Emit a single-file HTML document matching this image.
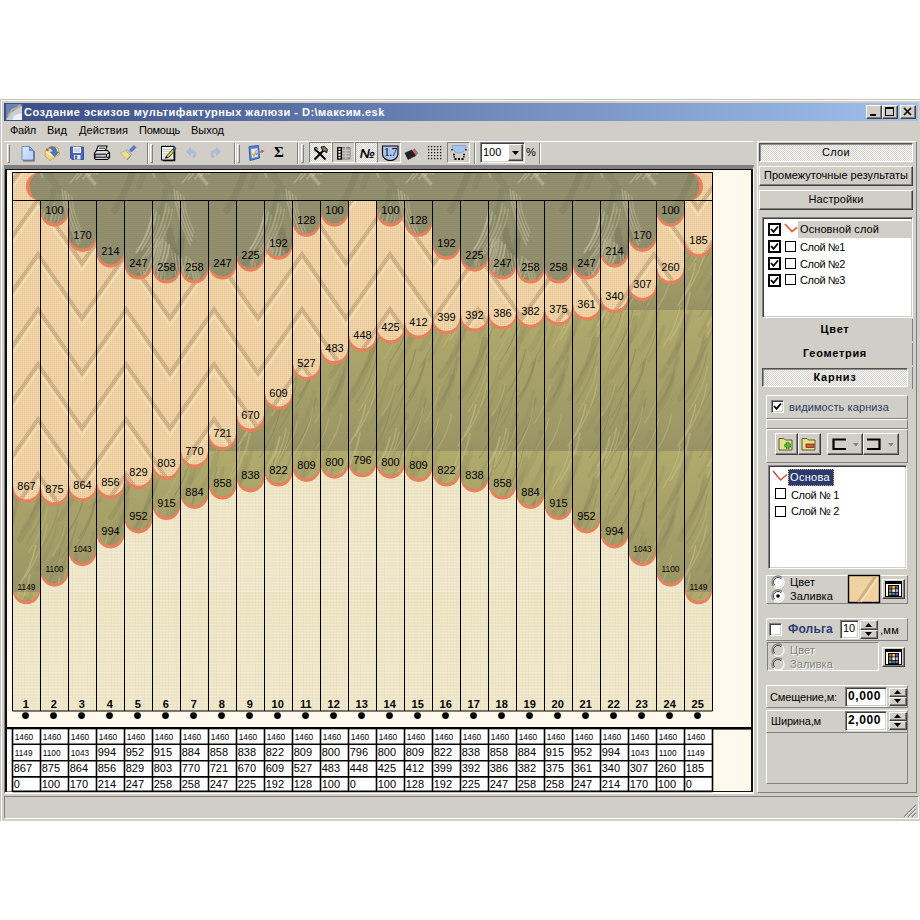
<!DOCTYPE html><html><head><meta charset="utf-8"><title>ui</title><style>
html,body{margin:0;padding:0;background:#fff;}
body{width:920px;height:920px;position:relative;overflow:hidden;font-family:"Liberation Sans",sans-serif;font-size:11px;color:#000;}
div{position:absolute;box-sizing:border-box;white-space:nowrap;}
svg{position:absolute;overflow:visible;}
.t{line-height:13px;height:13px;}
.raised{background:#d1cec7;border:1px solid;border-color:#fff #404040 #404040 #fff;box-shadow:inset -1px -1px 0 #808080;}
.raised1{background:#d1cec7;border:1px solid;border-color:#fff #808080 #808080 #fff;}
.sunk1{border:1px solid;border-color:#808080 #fff #fff #808080;}
.sunk2{border:1px solid;border-color:#808080 #fff #fff #808080;box-shadow:inset 1px 1px 0 #404040, inset -1px -1px 0 #d1cec7;}
.dith{background-color:#d1cec7;background-image:linear-gradient(45deg,#fff 25%,transparent 25%,transparent 75%,#fff 75%),linear-gradient(45deg,#fff 25%,transparent 25%,transparent 75%,#fff 75%);background-size:2px 2px;background-position:0 0,1px 1px;}
.pressed{border:1px solid;border-color:#808080 #fff #fff #808080;}
.pressed2{border:1px solid;border-color:#505050 #fff #fff #505050;box-shadow:inset 1px 1px 0 #909090;}
.c{text-align:center;}
.b{font-weight:bold;}
</style></head><body><div style="left:0px;top:99px;width:930px;height:722px;background:#d1cec7;border:solid #c6c3bb;border-width:1px 0 0 1px;box-shadow:inset 1px 1px 0 #fff;"></div>
<div style="left:4px;top:103px;width:914px;height:18px;background:linear-gradient(90deg,#3a4d85 0%,#a0c0ec 100%);"></div>
<svg style="left:6px;top:104px" width="16" height="16" viewBox="0 0 16 16"><rect width="16" height="16" fill="#6f83b3"/><path d="M0 16 L4 9 L8 7 L12 3 L16 2 L16 16 Z" fill="#c9cdd6"/><path d="M2 12 L6 6 L11 4 L14 1" stroke="#b8ad8a" stroke-width="2" fill="none"/><path d="M6 16 L9 11 L16 9 L16 16Z" fill="#eef0f4"/></svg>
<div style="left:24px;top:105px;width:400px;height:14px;color:#fff;font-weight:bold;font-size:11px;line-height:14px;letter-spacing:0px;"><span style="letter-spacing:0.48px">Создание эскизов мультифактурных жалюзи - D:\максим.esk</span></div>
<div class="raised" style="left:866px;top:105px;width:16px;height:14px;"><svg style="left:0;top:0" width="14" height="12"><rect x="3" y="8" width="6" height="2" fill="#000"/></svg></div>
<div class="raised" style="left:882px;top:105px;width:16px;height:14px;"><svg style="left:0;top:0" width="14" height="12"><rect x="2.5" y="1.5" width="8" height="8" fill="none" stroke="#000"/><rect x="2" y="1" width="9" height="2" fill="#000"/></svg></div>
<div class="raised" style="left:900px;top:105px;width:16px;height:14px;"><svg style="left:0;top:0" width="14" height="12"><path d="M3 2 L10 9 M10 2 L3 9" stroke="#000" stroke-width="1.6"/></svg></div>
<div style="left:10px;top:123px;width:36px;height:14px;line-height:14px;"><span style="letter-spacing:-0.26px">Файл</span></div>
<div style="left:47px;top:123px;width:30px;height:14px;line-height:14px;"><span style="letter-spacing:0.03px">Вид</span></div>
<div style="left:79px;top:123px;width:59px;height:14px;line-height:14px;"><span style="letter-spacing:0.10px">Действия</span></div>
<div style="left:139px;top:123px;width:51px;height:14px;line-height:14px;"><span style="letter-spacing:-0.25px">Помощь</span></div>
<div style="left:191px;top:123px;width:43px;height:14px;line-height:14px;"><span style="letter-spacing:0.02px">Выход</span></div>
<div style="left:4px;top:141px;width:750px;height:25px;border-top:1px solid #fff;border-bottom:1px solid #808080;"></div>
<div style="left:7px;top:144px;width:3px;height:19px;border:1px solid;border-color:#fff #808080 #808080 #fff;"></div>
<div style="left:147px;top:143px;width:2px;height:21px;border-left:1px solid #808080;border-right:1px solid #fff;"></div>
<div style="left:150px;top:144px;width:3px;height:19px;border:1px solid;border-color:#fff #808080 #808080 #fff;"></div>
<div style="left:234px;top:143px;width:2px;height:21px;border-left:1px solid #808080;border-right:1px solid #fff;"></div>
<div style="left:237px;top:144px;width:3px;height:19px;border:1px solid;border-color:#fff #808080 #808080 #fff;"></div>
<div style="left:297px;top:143px;width:2px;height:21px;border-left:1px solid #808080;border-right:1px solid #fff;"></div>
<div style="left:301px;top:144px;width:3px;height:19px;border:1px solid;border-color:#fff #808080 #808080 #fff;"></div>
<div style="left:474px;top:143px;width:2px;height:21px;border-left:1px solid #808080;border-right:1px solid #fff;"></div>
<div style="left:539px;top:143px;width:2px;height:21px;border-left:1px solid #808080;border-right:1px solid #fff;"></div>
<svg style="left:21px;top:145px" width="14" height="17" viewBox="0 0 14 17"><defs><linearGradient id="gnew" x1="0" y1="0" x2="1" y2="1"><stop offset="0" stop-color="#dfeaff"/><stop offset="1" stop-color="#b4cbf2"/></linearGradient></defs>
<path d="M1 1.5 H8.5 L12.5 5.5 V15 H1 Z" fill="url(#gnew)" stroke="#6f8ed2" stroke-width="1"/>
<path d="M8.5 1.5 V5.5 H12.5 Z" fill="#7f9fe0" stroke="#5a78c0" stroke-width=".8"/>
<path d="M13.2 6 V15.8 H2" fill="none" stroke="#50566a" stroke-width="1.2" opacity=".8"/></svg>
<svg style="left:43px;top:144px" width="18" height="18" viewBox="0 0 18 18"><path d="M2 7 L8 2 L15 4 L16.5 10 L7 16.5 L2 12 Z" fill="#ead68c" stroke="#c8a848" stroke-width="1"/>
<path d="M3 8 L8.5 11 L15 5" fill="none" stroke="#f6ecc0" stroke-width="1.5"/>
<path d="M6 4 C10 1.5 14 3.5 13.5 8 L15.5 8 L11.5 12.5 L7.5 8 L10 8 C10 6 8.5 4.5 6 4 Z" fill="#4878cc" stroke="#2f58a8" stroke-width=".6"/>
<rect x="3.2" y="4.6" width="2.4" height="2.2" fill="#e04030"/></svg>
<svg style="left:70px;top:146px" width="15" height="15" viewBox="0 0 15 15"><path d="M.5 1 H13.5 V13.5 H2 L.5 12 Z" fill="#4a66b6" stroke="#3a4f9a" stroke-width="1"/>
<rect x="3" y="1" width="8" height="6" fill="#f2f4fa"/><path d="M4 3 H10 M4 5 H10" stroke="#9aa4c0" stroke-width=".8"/>
<rect x="4" y="9" width="6.5" height="4.5" fill="#e8ecf6"/><rect x="5" y="9.5" width="2.2" height="3.5" fill="#4a66b6"/></svg>
<svg style="left:93px;top:145px" width="18" height="16" viewBox="0 0 18 16"><path d="M5 1 H14 L12.5 5.5 H3.5 Z" fill="#fff" stroke="#000" stroke-width="1.1"/>
<path d="M6 3.2 H12" stroke="#000" stroke-width=".9"/>
<path d="M1.5 8 L3.5 5.5 H14.5 L16.5 8 V12.5 L14.5 14.5 H2.5 L1.5 13 Z" fill="#d8dae0" stroke="#000" stroke-width="1.2"/>
<path d="M2 9.2 H13.5 V12.2 H2 Z" fill="#b8c4e0" stroke="#000" stroke-width="1"/>
<rect x="8" y="10" width="3" height="1.3" fill="#f0e020"/>
<path d="M14 9 L16.5 8 M14 12.5 L16 12" stroke="#000" stroke-width="1"/></svg>
<svg style="left:119px;top:144px" width="18" height="17" viewBox="0 0 18 17"><path d="M10.5 6 L15 1.5 L17 3.5 L12.5 8 Z" fill="#5a7cc8" stroke="#3e5aa8" stroke-width=".6"/>
<path d="M8 5.5 L12.8 10.3 L11.3 11.8 L6.5 7 Z" fill="#c8ccd8" stroke="#7a8098" stroke-width=".6"/>
<path d="M6.5 6.5 L11.8 11.8 L8 15.5 C6 14 3.5 11 1.5 9 Z" fill="#ebe09a" stroke="#b8a860" stroke-width=".7"/>
<path d="M8 15.5 L11.8 11.8" stroke="#8a7840" stroke-width="1"/></svg>
<svg style="left:160px;top:144px" width="17" height="18" viewBox="0 0 17 18"><rect x="1.5" y="2.5" width="12.5" height="13.5" fill="#fff" stroke="#000" stroke-width="1"/>
<path d="M14.6 4 V16.6 H3" stroke="#000" stroke-width="1.4" fill="none"/>
<path d="M3 5.5 H12.5 M3 7.7 H12.5 M3 9.9 H12.5 M3 12.1 H12.5 M3 14.2 H12.5" stroke="#a8acb8" stroke-width=".8"/>
<path d="M3 1.5 V3 M5.5 1.5 V3 M8 1.5 V3 M10.5 1.5 V3 M13 1.5 V3" stroke="#000" stroke-width="1"/>
<path d="M5.5 14 L7 11.5 L12.5 5.5 L14.5 7 L9 13 Z" fill="#f0e030" stroke="#000" stroke-width=".8"/>
<path d="M12.5 5.5 L14 2.5 L16 4 L14.5 7 Z" fill="#3e5cb0" stroke="#223a80" stroke-width=".6"/>
<path d="M5 14.5 L6.6 12.2 L7.6 13.2 Z" fill="#000"/></svg>
<svg style="left:185px;top:146px" width="14" height="14" viewBox="0 0 14 14"><path d="M1.5 5.5 L5.5 1.5 V4 C10.5 3.5 12.5 7 9.5 12 L7.8 11 C9.8 8 9 6.5 5.5 7 V9.5 Z" fill="#a9bbe0" stroke="#9db0da" stroke-width=".6" opacity=".9"/></svg>
<svg style="left:208px;top:146px" width="14" height="14" viewBox="0 0 14 14"><path d="M12.5 5.5 L8.5 1.5 V4 C3.5 3.5 1.5 7 4.5 12 L6.2 11 C4.2 8 5 6.5 8.5 7 V9.5 Z" fill="#a9bbe0" stroke="#9db0da" stroke-width=".6" opacity=".9"/></svg>
<svg style="left:247px;top:144px" width="19" height="18" viewBox="0 0 19 18"><path d="M2 2.5 L11.5 1.5 L12.5 14 L3 16.5 Z" fill="#5a82d4" stroke="#3a5cb0" stroke-width="1"/>
<path d="M4 5 L10.5 4.2 L11 12.5 L4.8 14 Z" fill="#dfe9fa"/>
<path d="M5.5 9.5 L7 12 L9.5 6" stroke="#d8a820" stroke-width="1.4" fill="none"/>
<path d="M9 10.5 L15 7.2" stroke="#6a90dc" stroke-width="1.8"/>
<path d="M14 5.5 L17.5 7 L14.8 9 Z" fill="#e05828"/></svg>
<div style="left:271px;top:143px;width:16px;height:18px;font-family:'Liberation Serif',serif;font-weight:bold;font-size:15px;line-height:18px;text-align:center;">Σ</div>
<div class="pressed dith" style="left:309px;top:142px;width:23px;height:21px;"></div>
<div class="pressed" style="left:332px;top:142px;width:23px;height:21px;"></div>
<div class="pressed dith" style="left:355px;top:142px;width:23px;height:21px;"></div>
<div class="pressed" style="left:377px;top:142px;width:24px;height:21px;"></div>
<div class="pressed" style="left:447px;top:142px;width:23px;height:21px;"></div>
<svg style="left:312px;top:145px" width="17" height="16" viewBox="0 0 17 16"><path d="M2.5 14.5 L12 5" stroke="#000" stroke-width="2"/>
<path d="M9 2 L12.5 1.5 L15.5 4.5 L14.5 8 L13 6 L11 6.5 Z" fill="#8a7850" stroke="#000" stroke-width=".9"/>
<path d="M13.5 14.5 L5 6" stroke="#000" stroke-width="2"/>
<path d="M2 3.5 C2 6 4 7.5 6 6.5 L5 5 L6 3.5 L4.5 2 C3.5 2 2 2.5 2 3.5 Z" fill="#000"/>
<path d="M3.6 3.2 L5 4.6" stroke="#d1cec7" stroke-width="1.1"/></svg>
<svg style="left:337px;top:147px" width="14" height="13" viewBox="0 0 14 13"><rect x=".5" y=".5" width="12.5" height="11.5" fill="#a0a0a0" stroke="#808080"/>
<path d="M4.5 0 V12 M8.7 0 V12 M0 3.4 H13 M0 6.3 H13 M0 9.2 H13" stroke="#d1cec7" stroke-width="1"/>
<rect x=".7" y=".7" width="3.6" height="11.3" fill="#fff" stroke="#000" stroke-width="1.3"/>
<path d="M.7 3.4 H4.3 M.7 6.3 H4.3 M.7 9.2 H4.3" stroke="#000" stroke-width="1.1"/></svg>
<div style="left:356px;top:146px;width:22px;height:15px;font-weight:bold;font-style:italic;font-size:13px;line-height:15px;text-align:center;letter-spacing:-0.5px;">№</div>
<svg style="left:381px;top:145px" width="19" height="17" viewBox="0 0 19 17"><path d="M1.5 1 H17 V9 C17 13 13 15.5 9.2 15.5 C5.5 15.5 1.5 13 1.5 9 Z" fill="#a9c6f2" stroke="#000" stroke-width="1.1"/>
<text x="9.3" y="11" font-family="Liberation Serif,serif" font-size="11.5" text-anchor="middle" fill="#000" letter-spacing="-0.6">1.7</text></svg>
<svg style="left:404px;top:145px" width="15" height="16" viewBox="0 0 15 16"><path d="M2 3 L7 8 M4 1.5 L8 6" stroke="#b8c8e8" stroke-width="1.3"/>
<path d="M1 8 L8 5 L12 10.5 L4 14.5 Z" fill="#22222e" stroke="#101018" stroke-width=".6"/>
<path d="M8 5 L12 10.5 L13.5 9 L9.5 4 Z" fill="#e06838"/><path d="M9.5 4 L13.5 9 L14.3 8.2 L10.5 3.4Z" fill="#7a5ac0"/>
<path d="M12.5 11 L14 14" stroke="#c8d4ec" stroke-width="1.2"/></svg>
<svg style="left:428px;top:146px" width="14" height="14" viewBox="0 0 14 14"><rect x="0" y="0" width="1.2" height="1.2" fill="#000"/><rect x="0" y="3" width="1.2" height="1.2" fill="#000"/><rect x="0" y="6" width="1.2" height="1.2" fill="#000"/><rect x="0" y="9" width="1.2" height="1.2" fill="#000"/><rect x="0" y="12" width="1.2" height="1.2" fill="#000"/><rect x="3" y="0" width="1.2" height="1.2" fill="#000"/><rect x="3" y="3" width="1.2" height="1.2" fill="#000"/><rect x="3" y="6" width="1.2" height="1.2" fill="#000"/><rect x="3" y="9" width="1.2" height="1.2" fill="#000"/><rect x="3" y="12" width="1.2" height="1.2" fill="#000"/><rect x="6" y="0" width="1.2" height="1.2" fill="#000"/><rect x="6" y="3" width="1.2" height="1.2" fill="#000"/><rect x="6" y="6" width="1.2" height="1.2" fill="#000"/><rect x="6" y="9" width="1.2" height="1.2" fill="#000"/><rect x="6" y="12" width="1.2" height="1.2" fill="#000"/><rect x="9" y="0" width="1.2" height="1.2" fill="#000"/><rect x="9" y="3" width="1.2" height="1.2" fill="#000"/><rect x="9" y="6" width="1.2" height="1.2" fill="#000"/><rect x="9" y="9" width="1.2" height="1.2" fill="#000"/><rect x="9" y="12" width="1.2" height="1.2" fill="#000"/><rect x="12" y="0" width="1.2" height="1.2" fill="#000"/><rect x="12" y="3" width="1.2" height="1.2" fill="#000"/><rect x="12" y="6" width="1.2" height="1.2" fill="#000"/><rect x="12" y="9" width="1.2" height="1.2" fill="#000"/><rect x="12" y="12" width="1.2" height="1.2" fill="#000"/></svg>
<svg style="left:450px;top:145px" width="18" height="16" viewBox="0 0 18 16"><path d="M2 .5 H16 C16 5 13 8 9 8 C5 8 2 5 2 .5 Z" fill="#a6c4f0" stroke="#6f90d0" stroke-width=".6"/>
<path d="M2 4 V7 M16 4 V7" stroke="#000" stroke-width="1.3" stroke-dasharray="1.5 1.5"/>
<path d="M3 9.5 H5 M13 9.5 H15" stroke="#000" stroke-width="1.6"/>
<path d="M4.5 14 H6.5 M8 14 H10 M11.5 14 H13.5" stroke="#000" stroke-width="1.8"/>
<path d="M3.5 11.7 H4.8 M13.2 11.7 H14.5" stroke="#000" stroke-width="1.4"/></svg>
<div class="sunk2" style="left:480px;top:142px;width:45px;height:21px;background:#fff;"></div>
<div style="left:483px;top:146px;width:24px;height:13px;font-size:11px;line-height:13px;">100</div>
<div class="raised" style="left:508px;top:144px;width:15px;height:17px;"><svg style="left:3px;top:6px" width="8" height="5"><path d="M0 0 H7 L3.5 4 Z" fill="#000"/></svg></div>
<div style="left:526px;top:146px;width:12px;height:13px;font-size:11px;line-height:13px;">%</div>
<div style="left:4px;top:166px;width:750px;height:628px;background:#fff8ec;border:solid;border-color:#808080 #fff #fff #808080;border-width:3px 1px 1px 1px;"></div>
<div style="left:5px;top:169px;width:748px;height:623px;border:solid #101010;border-width:1px 2px 1px 2px;background:#fff8ec;"></div>
<svg style="left:0;top:0" width="920" height="920" viewBox="0 0 920 920"><defs><pattern id="pw" patternUnits="userSpaceOnUse" x="38" y="35" width="88" height="55"><rect width="88" height="55" fill="#efd1a4"/><path d="M-44 -101 L0 -165 L44 -101 L88 -165 L132 -101" fill="none" stroke="#c8a77c" stroke-width="5" stroke-opacity=".9"/><path d="M-44 -95.5 L0 -159.5 L44 -95.5 L88 -159.5 L132 -95.5" fill="none" stroke="#f8e4ba" stroke-width="3" stroke-opacity=".7"/><path d="M-44 -46 L0 -110 L44 -46 L88 -110 L132 -46" fill="none" stroke="#c8a77c" stroke-width="5" stroke-opacity=".9"/><path d="M-44 -40.5 L0 -104.5 L44 -40.5 L88 -104.5 L132 -40.5" fill="none" stroke="#f8e4ba" stroke-width="3" stroke-opacity=".7"/><path d="M-44 9 L0 -55 L44 9 L88 -55 L132 9" fill="none" stroke="#c8a77c" stroke-width="5" stroke-opacity=".9"/><path d="M-44 14.5 L0 -49.5 L44 14.5 L88 -49.5 L132 14.5" fill="none" stroke="#f8e4ba" stroke-width="3" stroke-opacity=".7"/><path d="M-44 64 L0 0 L44 64 L88 0 L132 64" fill="none" stroke="#c8a77c" stroke-width="5" stroke-opacity=".9"/><path d="M-44 69.5 L0 5.5 L44 69.5 L88 5.5 L132 69.5" fill="none" stroke="#f8e4ba" stroke-width="3" stroke-opacity=".7"/><path d="M-44 119 L0 55 L44 119 L88 55 L132 119" fill="none" stroke="#c8a77c" stroke-width="5" stroke-opacity=".9"/><path d="M-44 124.5 L0 60.5 L44 124.5 L88 60.5 L132 124.5" fill="none" stroke="#f8e4ba" stroke-width="3" stroke-opacity=".7"/><path d="M-44 174 L0 110 L44 174 L88 110 L132 174" fill="none" stroke="#c8a77c" stroke-width="5" stroke-opacity=".9"/><path d="M-44 179.5 L0 115.5 L44 179.5 L88 115.5 L132 179.5" fill="none" stroke="#f8e4ba" stroke-width="3" stroke-opacity=".7"/></pattern><pattern id="pwv" patternUnits="userSpaceOnUse" width="2" height="2"><rect width="1" height="1" fill="#d2b282" fill-opacity=".4"/><rect x="1" y="1" width="1" height="1" fill="#fbe6bc" fill-opacity=".4"/></pattern><pattern id="pd" patternUnits="userSpaceOnUse" x="12" y="169" width="112" height="141"><rect width="112" height="141" fill="#92906f"/><path d="M-93.5 -43.7 q3.6 32.7 29.6 65.4" fill="none" stroke="#68634d" stroke-width="7.2" stroke-opacity="0.15" stroke-linecap="round"/><path d="M-93.5 97.3 q3.6 32.7 29.6 65.4" fill="none" stroke="#68634d" stroke-width="7.2" stroke-opacity="0.15" stroke-linecap="round"/><path d="M-93.5 238.3 q3.6 32.7 29.6 65.4" fill="none" stroke="#68634d" stroke-width="7.2" stroke-opacity="0.15" stroke-linecap="round"/><path d="M18.5 -43.7 q3.6 32.7 29.6 65.4" fill="none" stroke="#68634d" stroke-width="7.2" stroke-opacity="0.15" stroke-linecap="round"/><path d="M18.5 97.3 q3.6 32.7 29.6 65.4" fill="none" stroke="#68634d" stroke-width="7.2" stroke-opacity="0.15" stroke-linecap="round"/><path d="M18.5 238.3 q3.6 32.7 29.6 65.4" fill="none" stroke="#68634d" stroke-width="7.2" stroke-opacity="0.15" stroke-linecap="round"/><path d="M130.5 -43.7 q3.6 32.7 29.6 65.4" fill="none" stroke="#68634d" stroke-width="7.2" stroke-opacity="0.15" stroke-linecap="round"/><path d="M130.5 97.3 q3.6 32.7 29.6 65.4" fill="none" stroke="#68634d" stroke-width="7.2" stroke-opacity="0.15" stroke-linecap="round"/><path d="M130.5 238.3 q3.6 32.7 29.6 65.4" fill="none" stroke="#68634d" stroke-width="7.2" stroke-opacity="0.15" stroke-linecap="round"/><path d="M-54.6 -69.8 q-1.2 24.7 -10.1 49.4" fill="none" stroke="#57523f" stroke-width="5.7" stroke-opacity="0.15" stroke-linecap="round"/><path d="M-54.6 71.2 q-1.2 24.7 -10.1 49.4" fill="none" stroke="#57523f" stroke-width="5.7" stroke-opacity="0.15" stroke-linecap="round"/><path d="M-54.6 212.2 q-1.2 24.7 -10.1 49.4" fill="none" stroke="#57523f" stroke-width="5.7" stroke-opacity="0.15" stroke-linecap="round"/><path d="M57.4 -69.8 q-1.2 24.7 -10.1 49.4" fill="none" stroke="#57523f" stroke-width="5.7" stroke-opacity="0.15" stroke-linecap="round"/><path d="M57.4 71.2 q-1.2 24.7 -10.1 49.4" fill="none" stroke="#57523f" stroke-width="5.7" stroke-opacity="0.15" stroke-linecap="round"/><path d="M57.4 212.2 q-1.2 24.7 -10.1 49.4" fill="none" stroke="#57523f" stroke-width="5.7" stroke-opacity="0.15" stroke-linecap="round"/><path d="M169.4 -69.8 q-1.2 24.7 -10.1 49.4" fill="none" stroke="#57523f" stroke-width="5.7" stroke-opacity="0.15" stroke-linecap="round"/><path d="M169.4 71.2 q-1.2 24.7 -10.1 49.4" fill="none" stroke="#57523f" stroke-width="5.7" stroke-opacity="0.15" stroke-linecap="round"/><path d="M169.4 212.2 q-1.2 24.7 -10.1 49.4" fill="none" stroke="#57523f" stroke-width="5.7" stroke-opacity="0.15" stroke-linecap="round"/><path d="M-95.8 -35.1 q-3.1 38.4 -25.4 76.9" fill="none" stroke="#57523f" stroke-width="7.1" stroke-opacity="0.15" stroke-linecap="round"/><path d="M-95.8 105.9 q-3.1 38.4 -25.4 76.9" fill="none" stroke="#57523f" stroke-width="7.1" stroke-opacity="0.15" stroke-linecap="round"/><path d="M-95.8 246.9 q-3.1 38.4 -25.4 76.9" fill="none" stroke="#57523f" stroke-width="7.1" stroke-opacity="0.15" stroke-linecap="round"/><path d="M16.2 -35.1 q-3.1 38.4 -25.4 76.9" fill="none" stroke="#57523f" stroke-width="7.1" stroke-opacity="0.15" stroke-linecap="round"/><path d="M16.2 105.9 q-3.1 38.4 -25.4 76.9" fill="none" stroke="#57523f" stroke-width="7.1" stroke-opacity="0.15" stroke-linecap="round"/><path d="M16.2 246.9 q-3.1 38.4 -25.4 76.9" fill="none" stroke="#57523f" stroke-width="7.1" stroke-opacity="0.15" stroke-linecap="round"/><path d="M128.2 -35.1 q-3.1 38.4 -25.4 76.9" fill="none" stroke="#57523f" stroke-width="7.1" stroke-opacity="0.15" stroke-linecap="round"/><path d="M128.2 105.9 q-3.1 38.4 -25.4 76.9" fill="none" stroke="#57523f" stroke-width="7.1" stroke-opacity="0.15" stroke-linecap="round"/><path d="M128.2 246.9 q-3.1 38.4 -25.4 76.9" fill="none" stroke="#57523f" stroke-width="7.1" stroke-opacity="0.15" stroke-linecap="round"/><path d="M-66.4 -78.7 q3.8 39.1 31.9 78.3" fill="none" stroke="#57523f" stroke-width="7.8" stroke-opacity="0.15" stroke-linecap="round"/><path d="M-66.4 62.3 q3.8 39.1 31.9 78.3" fill="none" stroke="#57523f" stroke-width="7.8" stroke-opacity="0.15" stroke-linecap="round"/><path d="M-66.4 203.3 q3.8 39.1 31.9 78.3" fill="none" stroke="#57523f" stroke-width="7.8" stroke-opacity="0.15" stroke-linecap="round"/><path d="M45.6 -78.7 q3.8 39.1 31.9 78.3" fill="none" stroke="#57523f" stroke-width="7.8" stroke-opacity="0.15" stroke-linecap="round"/><path d="M45.6 62.3 q3.8 39.1 31.9 78.3" fill="none" stroke="#57523f" stroke-width="7.8" stroke-opacity="0.15" stroke-linecap="round"/><path d="M45.6 203.3 q3.8 39.1 31.9 78.3" fill="none" stroke="#57523f" stroke-width="7.8" stroke-opacity="0.15" stroke-linecap="round"/><path d="M157.6 -78.7 q3.8 39.1 31.9 78.3" fill="none" stroke="#57523f" stroke-width="7.8" stroke-opacity="0.15" stroke-linecap="round"/><path d="M157.6 62.3 q3.8 39.1 31.9 78.3" fill="none" stroke="#57523f" stroke-width="7.8" stroke-opacity="0.15" stroke-linecap="round"/><path d="M157.6 203.3 q3.8 39.1 31.9 78.3" fill="none" stroke="#57523f" stroke-width="7.8" stroke-opacity="0.15" stroke-linecap="round"/><path d="M-70.7 -119.2 q-3.9 36.4 -32.2 72.7" fill="none" stroke="#5f5a46" stroke-width="5.8" stroke-opacity="0.15" stroke-linecap="round"/><path d="M-70.7 21.8 q-3.9 36.4 -32.2 72.7" fill="none" stroke="#5f5a46" stroke-width="5.8" stroke-opacity="0.15" stroke-linecap="round"/><path d="M-70.7 162.8 q-3.9 36.4 -32.2 72.7" fill="none" stroke="#5f5a46" stroke-width="5.8" stroke-opacity="0.15" stroke-linecap="round"/><path d="M41.3 -119.2 q-3.9 36.4 -32.2 72.7" fill="none" stroke="#5f5a46" stroke-width="5.8" stroke-opacity="0.15" stroke-linecap="round"/><path d="M41.3 21.8 q-3.9 36.4 -32.2 72.7" fill="none" stroke="#5f5a46" stroke-width="5.8" stroke-opacity="0.15" stroke-linecap="round"/><path d="M41.3 162.8 q-3.9 36.4 -32.2 72.7" fill="none" stroke="#5f5a46" stroke-width="5.8" stroke-opacity="0.15" stroke-linecap="round"/><path d="M153.3 -119.2 q-3.9 36.4 -32.2 72.7" fill="none" stroke="#5f5a46" stroke-width="5.8" stroke-opacity="0.15" stroke-linecap="round"/><path d="M153.3 21.8 q-3.9 36.4 -32.2 72.7" fill="none" stroke="#5f5a46" stroke-width="5.8" stroke-opacity="0.15" stroke-linecap="round"/><path d="M153.3 162.8 q-3.9 36.4 -32.2 72.7" fill="none" stroke="#5f5a46" stroke-width="5.8" stroke-opacity="0.15" stroke-linecap="round"/><path d="M-50.2 -92.6 q-2.8 29.7 -23.7 59.4" fill="none" stroke="#68634d" stroke-width="7.5" stroke-opacity="0.15" stroke-linecap="round"/><path d="M-50.2 48.4 q-2.8 29.7 -23.7 59.4" fill="none" stroke="#68634d" stroke-width="7.5" stroke-opacity="0.15" stroke-linecap="round"/><path d="M-50.2 189.4 q-2.8 29.7 -23.7 59.4" fill="none" stroke="#68634d" stroke-width="7.5" stroke-opacity="0.15" stroke-linecap="round"/><path d="M61.8 -92.6 q-2.8 29.7 -23.7 59.4" fill="none" stroke="#68634d" stroke-width="7.5" stroke-opacity="0.15" stroke-linecap="round"/><path d="M61.8 48.4 q-2.8 29.7 -23.7 59.4" fill="none" stroke="#68634d" stroke-width="7.5" stroke-opacity="0.15" stroke-linecap="round"/><path d="M61.8 189.4 q-2.8 29.7 -23.7 59.4" fill="none" stroke="#68634d" stroke-width="7.5" stroke-opacity="0.15" stroke-linecap="round"/><path d="M173.8 -92.6 q-2.8 29.7 -23.7 59.4" fill="none" stroke="#68634d" stroke-width="7.5" stroke-opacity="0.15" stroke-linecap="round"/><path d="M173.8 48.4 q-2.8 29.7 -23.7 59.4" fill="none" stroke="#68634d" stroke-width="7.5" stroke-opacity="0.15" stroke-linecap="round"/><path d="M173.8 189.4 q-2.8 29.7 -23.7 59.4" fill="none" stroke="#68634d" stroke-width="7.5" stroke-opacity="0.15" stroke-linecap="round"/><path d="M-85.7 -31.0 q-1.4 24.2 -11.4 48.3" fill="none" stroke="#68634d" stroke-width="6.2" stroke-opacity="0.15" stroke-linecap="round"/><path d="M-85.7 110.0 q-1.4 24.2 -11.4 48.3" fill="none" stroke="#68634d" stroke-width="6.2" stroke-opacity="0.15" stroke-linecap="round"/><path d="M-85.7 251.0 q-1.4 24.2 -11.4 48.3" fill="none" stroke="#68634d" stroke-width="6.2" stroke-opacity="0.15" stroke-linecap="round"/><path d="M26.3 -31.0 q-1.4 24.2 -11.4 48.3" fill="none" stroke="#68634d" stroke-width="6.2" stroke-opacity="0.15" stroke-linecap="round"/><path d="M26.3 110.0 q-1.4 24.2 -11.4 48.3" fill="none" stroke="#68634d" stroke-width="6.2" stroke-opacity="0.15" stroke-linecap="round"/><path d="M26.3 251.0 q-1.4 24.2 -11.4 48.3" fill="none" stroke="#68634d" stroke-width="6.2" stroke-opacity="0.15" stroke-linecap="round"/><path d="M138.3 -31.0 q-1.4 24.2 -11.4 48.3" fill="none" stroke="#68634d" stroke-width="6.2" stroke-opacity="0.15" stroke-linecap="round"/><path d="M138.3 110.0 q-1.4 24.2 -11.4 48.3" fill="none" stroke="#68634d" stroke-width="6.2" stroke-opacity="0.15" stroke-linecap="round"/><path d="M138.3 251.0 q-1.4 24.2 -11.4 48.3" fill="none" stroke="#68634d" stroke-width="6.2" stroke-opacity="0.15" stroke-linecap="round"/><path d="M-68.5 -92.9 q1.6 22.9 13.2 45.8" fill="none" stroke="#68634d" stroke-width="6.0" stroke-opacity="0.15" stroke-linecap="round"/><path d="M-68.5 48.1 q1.6 22.9 13.2 45.8" fill="none" stroke="#68634d" stroke-width="6.0" stroke-opacity="0.15" stroke-linecap="round"/><path d="M-68.5 189.1 q1.6 22.9 13.2 45.8" fill="none" stroke="#68634d" stroke-width="6.0" stroke-opacity="0.15" stroke-linecap="round"/><path d="M43.5 -92.9 q1.6 22.9 13.2 45.8" fill="none" stroke="#68634d" stroke-width="6.0" stroke-opacity="0.15" stroke-linecap="round"/><path d="M43.5 48.1 q1.6 22.9 13.2 45.8" fill="none" stroke="#68634d" stroke-width="6.0" stroke-opacity="0.15" stroke-linecap="round"/><path d="M43.5 189.1 q1.6 22.9 13.2 45.8" fill="none" stroke="#68634d" stroke-width="6.0" stroke-opacity="0.15" stroke-linecap="round"/><path d="M155.5 -92.9 q1.6 22.9 13.2 45.8" fill="none" stroke="#68634d" stroke-width="6.0" stroke-opacity="0.15" stroke-linecap="round"/><path d="M155.5 48.1 q1.6 22.9 13.2 45.8" fill="none" stroke="#68634d" stroke-width="6.0" stroke-opacity="0.15" stroke-linecap="round"/><path d="M155.5 189.1 q1.6 22.9 13.2 45.8" fill="none" stroke="#68634d" stroke-width="6.0" stroke-opacity="0.15" stroke-linecap="round"/><path d="M-76.4 -72.7 q-1.4 19.0 -11.6 38.0" fill="none" stroke="#bfb894" stroke-width="1.2" stroke-opacity="0.55" stroke-linecap="round"/><path d="M-76.4 68.3 q-1.4 19.0 -11.6 38.0" fill="none" stroke="#bfb894" stroke-width="1.2" stroke-opacity="0.55" stroke-linecap="round"/><path d="M-76.4 209.3 q-1.4 19.0 -11.6 38.0" fill="none" stroke="#bfb894" stroke-width="1.2" stroke-opacity="0.55" stroke-linecap="round"/><path d="M35.6 -72.7 q-1.4 19.0 -11.6 38.0" fill="none" stroke="#bfb894" stroke-width="1.2" stroke-opacity="0.55" stroke-linecap="round"/><path d="M35.6 68.3 q-1.4 19.0 -11.6 38.0" fill="none" stroke="#bfb894" stroke-width="1.2" stroke-opacity="0.55" stroke-linecap="round"/><path d="M35.6 209.3 q-1.4 19.0 -11.6 38.0" fill="none" stroke="#bfb894" stroke-width="1.2" stroke-opacity="0.55" stroke-linecap="round"/><path d="M147.6 -72.7 q-1.4 19.0 -11.6 38.0" fill="none" stroke="#bfb894" stroke-width="1.2" stroke-opacity="0.55" stroke-linecap="round"/><path d="M147.6 68.3 q-1.4 19.0 -11.6 38.0" fill="none" stroke="#bfb894" stroke-width="1.2" stroke-opacity="0.55" stroke-linecap="round"/><path d="M147.6 209.3 q-1.4 19.0 -11.6 38.0" fill="none" stroke="#bfb894" stroke-width="1.2" stroke-opacity="0.55" stroke-linecap="round"/><path d="M-73.2 -70.2 q-1.2 16.7 -10.2 33.4" fill="none" stroke="#c9c2a0" stroke-width="1.8" stroke-opacity="0.55" stroke-linecap="round"/><path d="M-73.2 70.8 q-1.2 16.7 -10.2 33.4" fill="none" stroke="#c9c2a0" stroke-width="1.8" stroke-opacity="0.55" stroke-linecap="round"/><path d="M-73.2 211.8 q-1.2 16.7 -10.2 33.4" fill="none" stroke="#c9c2a0" stroke-width="1.8" stroke-opacity="0.55" stroke-linecap="round"/><path d="M38.8 -70.2 q-1.2 16.7 -10.2 33.4" fill="none" stroke="#c9c2a0" stroke-width="1.8" stroke-opacity="0.55" stroke-linecap="round"/><path d="M38.8 70.8 q-1.2 16.7 -10.2 33.4" fill="none" stroke="#c9c2a0" stroke-width="1.8" stroke-opacity="0.55" stroke-linecap="round"/><path d="M38.8 211.8 q-1.2 16.7 -10.2 33.4" fill="none" stroke="#c9c2a0" stroke-width="1.8" stroke-opacity="0.55" stroke-linecap="round"/><path d="M150.8 -70.2 q-1.2 16.7 -10.2 33.4" fill="none" stroke="#c9c2a0" stroke-width="1.8" stroke-opacity="0.55" stroke-linecap="round"/><path d="M150.8 70.8 q-1.2 16.7 -10.2 33.4" fill="none" stroke="#c9c2a0" stroke-width="1.8" stroke-opacity="0.55" stroke-linecap="round"/><path d="M150.8 211.8 q-1.2 16.7 -10.2 33.4" fill="none" stroke="#c9c2a0" stroke-width="1.8" stroke-opacity="0.55" stroke-linecap="round"/><path d="M-70.0 -67.7 q-1.1 14.4 -8.8 28.9" fill="none" stroke="#d3cdac" stroke-width="1.7" stroke-opacity="0.55" stroke-linecap="round"/><path d="M-70.0 73.3 q-1.1 14.4 -8.8 28.9" fill="none" stroke="#d3cdac" stroke-width="1.7" stroke-opacity="0.55" stroke-linecap="round"/><path d="M-70.0 214.3 q-1.1 14.4 -8.8 28.9" fill="none" stroke="#d3cdac" stroke-width="1.7" stroke-opacity="0.55" stroke-linecap="round"/><path d="M42.0 -67.7 q-1.1 14.4 -8.8 28.9" fill="none" stroke="#d3cdac" stroke-width="1.7" stroke-opacity="0.55" stroke-linecap="round"/><path d="M42.0 73.3 q-1.1 14.4 -8.8 28.9" fill="none" stroke="#d3cdac" stroke-width="1.7" stroke-opacity="0.55" stroke-linecap="round"/><path d="M42.0 214.3 q-1.1 14.4 -8.8 28.9" fill="none" stroke="#d3cdac" stroke-width="1.7" stroke-opacity="0.55" stroke-linecap="round"/><path d="M154.0 -67.7 q-1.1 14.4 -8.8 28.9" fill="none" stroke="#d3cdac" stroke-width="1.7" stroke-opacity="0.55" stroke-linecap="round"/><path d="M154.0 73.3 q-1.1 14.4 -8.8 28.9" fill="none" stroke="#d3cdac" stroke-width="1.7" stroke-opacity="0.55" stroke-linecap="round"/><path d="M154.0 214.3 q-1.1 14.4 -8.8 28.9" fill="none" stroke="#d3cdac" stroke-width="1.7" stroke-opacity="0.55" stroke-linecap="round"/><path d="M-66.8 -65.2 q-0.9 12.2 -7.4 24.3" fill="none" stroke="#d3cdac" stroke-width="1.8" stroke-opacity="0.55" stroke-linecap="round"/><path d="M-66.8 75.8 q-0.9 12.2 -7.4 24.3" fill="none" stroke="#d3cdac" stroke-width="1.8" stroke-opacity="0.55" stroke-linecap="round"/><path d="M-66.8 216.8 q-0.9 12.2 -7.4 24.3" fill="none" stroke="#d3cdac" stroke-width="1.8" stroke-opacity="0.55" stroke-linecap="round"/><path d="M45.2 -65.2 q-0.9 12.2 -7.4 24.3" fill="none" stroke="#d3cdac" stroke-width="1.8" stroke-opacity="0.55" stroke-linecap="round"/><path d="M45.2 75.8 q-0.9 12.2 -7.4 24.3" fill="none" stroke="#d3cdac" stroke-width="1.8" stroke-opacity="0.55" stroke-linecap="round"/><path d="M45.2 216.8 q-0.9 12.2 -7.4 24.3" fill="none" stroke="#d3cdac" stroke-width="1.8" stroke-opacity="0.55" stroke-linecap="round"/><path d="M157.2 -65.2 q-0.9 12.2 -7.4 24.3" fill="none" stroke="#d3cdac" stroke-width="1.8" stroke-opacity="0.55" stroke-linecap="round"/><path d="M157.2 75.8 q-0.9 12.2 -7.4 24.3" fill="none" stroke="#d3cdac" stroke-width="1.8" stroke-opacity="0.55" stroke-linecap="round"/><path d="M157.2 216.8 q-0.9 12.2 -7.4 24.3" fill="none" stroke="#d3cdac" stroke-width="1.8" stroke-opacity="0.55" stroke-linecap="round"/><path d="M-49.7 -53.2 q-2.0 17.7 -16.6 35.4" fill="none" stroke="#bfb894" stroke-width="2.0" stroke-opacity="0.55" stroke-linecap="round"/><path d="M-49.7 87.8 q-2.0 17.7 -16.6 35.4" fill="none" stroke="#bfb894" stroke-width="2.0" stroke-opacity="0.55" stroke-linecap="round"/><path d="M-49.7 228.8 q-2.0 17.7 -16.6 35.4" fill="none" stroke="#bfb894" stroke-width="2.0" stroke-opacity="0.55" stroke-linecap="round"/><path d="M62.3 -53.2 q-2.0 17.7 -16.6 35.4" fill="none" stroke="#bfb894" stroke-width="2.0" stroke-opacity="0.55" stroke-linecap="round"/><path d="M62.3 87.8 q-2.0 17.7 -16.6 35.4" fill="none" stroke="#bfb894" stroke-width="2.0" stroke-opacity="0.55" stroke-linecap="round"/><path d="M62.3 228.8 q-2.0 17.7 -16.6 35.4" fill="none" stroke="#bfb894" stroke-width="2.0" stroke-opacity="0.55" stroke-linecap="round"/><path d="M174.3 -53.2 q-2.0 17.7 -16.6 35.4" fill="none" stroke="#bfb894" stroke-width="2.0" stroke-opacity="0.55" stroke-linecap="round"/><path d="M174.3 87.8 q-2.0 17.7 -16.6 35.4" fill="none" stroke="#bfb894" stroke-width="2.0" stroke-opacity="0.55" stroke-linecap="round"/><path d="M174.3 228.8 q-2.0 17.7 -16.6 35.4" fill="none" stroke="#bfb894" stroke-width="2.0" stroke-opacity="0.55" stroke-linecap="round"/><path d="M-46.5 -50.7 q-1.8 15.6 -14.6 31.2" fill="none" stroke="#bfb894" stroke-width="1.4" stroke-opacity="0.55" stroke-linecap="round"/><path d="M-46.5 90.3 q-1.8 15.6 -14.6 31.2" fill="none" stroke="#bfb894" stroke-width="1.4" stroke-opacity="0.55" stroke-linecap="round"/><path d="M-46.5 231.3 q-1.8 15.6 -14.6 31.2" fill="none" stroke="#bfb894" stroke-width="1.4" stroke-opacity="0.55" stroke-linecap="round"/><path d="M65.5 -50.7 q-1.8 15.6 -14.6 31.2" fill="none" stroke="#bfb894" stroke-width="1.4" stroke-opacity="0.55" stroke-linecap="round"/><path d="M65.5 90.3 q-1.8 15.6 -14.6 31.2" fill="none" stroke="#bfb894" stroke-width="1.4" stroke-opacity="0.55" stroke-linecap="round"/><path d="M65.5 231.3 q-1.8 15.6 -14.6 31.2" fill="none" stroke="#bfb894" stroke-width="1.4" stroke-opacity="0.55" stroke-linecap="round"/><path d="M177.5 -50.7 q-1.8 15.6 -14.6 31.2" fill="none" stroke="#bfb894" stroke-width="1.4" stroke-opacity="0.55" stroke-linecap="round"/><path d="M177.5 90.3 q-1.8 15.6 -14.6 31.2" fill="none" stroke="#bfb894" stroke-width="1.4" stroke-opacity="0.55" stroke-linecap="round"/><path d="M177.5 231.3 q-1.8 15.6 -14.6 31.2" fill="none" stroke="#bfb894" stroke-width="1.4" stroke-opacity="0.55" stroke-linecap="round"/><path d="M-43.3 -48.2 q-1.5 13.5 -12.6 26.9" fill="none" stroke="#c9c2a0" stroke-width="1.3" stroke-opacity="0.55" stroke-linecap="round"/><path d="M-43.3 92.8 q-1.5 13.5 -12.6 26.9" fill="none" stroke="#c9c2a0" stroke-width="1.3" stroke-opacity="0.55" stroke-linecap="round"/><path d="M-43.3 233.8 q-1.5 13.5 -12.6 26.9" fill="none" stroke="#c9c2a0" stroke-width="1.3" stroke-opacity="0.55" stroke-linecap="round"/><path d="M68.7 -48.2 q-1.5 13.5 -12.6 26.9" fill="none" stroke="#c9c2a0" stroke-width="1.3" stroke-opacity="0.55" stroke-linecap="round"/><path d="M68.7 92.8 q-1.5 13.5 -12.6 26.9" fill="none" stroke="#c9c2a0" stroke-width="1.3" stroke-opacity="0.55" stroke-linecap="round"/><path d="M68.7 233.8 q-1.5 13.5 -12.6 26.9" fill="none" stroke="#c9c2a0" stroke-width="1.3" stroke-opacity="0.55" stroke-linecap="round"/><path d="M180.7 -48.2 q-1.5 13.5 -12.6 26.9" fill="none" stroke="#c9c2a0" stroke-width="1.3" stroke-opacity="0.55" stroke-linecap="round"/><path d="M180.7 92.8 q-1.5 13.5 -12.6 26.9" fill="none" stroke="#c9c2a0" stroke-width="1.3" stroke-opacity="0.55" stroke-linecap="round"/><path d="M180.7 233.8 q-1.5 13.5 -12.6 26.9" fill="none" stroke="#c9c2a0" stroke-width="1.3" stroke-opacity="0.55" stroke-linecap="round"/><path d="M-20.9 -31.4 q-2.4 20.6 -20.1 41.2" fill="none" stroke="#c9c2a0" stroke-width="1.6" stroke-opacity="0.55" stroke-linecap="round"/><path d="M-20.9 109.6 q-2.4 20.6 -20.1 41.2" fill="none" stroke="#c9c2a0" stroke-width="1.6" stroke-opacity="0.55" stroke-linecap="round"/><path d="M-20.9 250.6 q-2.4 20.6 -20.1 41.2" fill="none" stroke="#c9c2a0" stroke-width="1.6" stroke-opacity="0.55" stroke-linecap="round"/><path d="M91.1 -31.4 q-2.4 20.6 -20.1 41.2" fill="none" stroke="#c9c2a0" stroke-width="1.6" stroke-opacity="0.55" stroke-linecap="round"/><path d="M91.1 109.6 q-2.4 20.6 -20.1 41.2" fill="none" stroke="#c9c2a0" stroke-width="1.6" stroke-opacity="0.55" stroke-linecap="round"/><path d="M91.1 250.6 q-2.4 20.6 -20.1 41.2" fill="none" stroke="#c9c2a0" stroke-width="1.6" stroke-opacity="0.55" stroke-linecap="round"/><path d="M203.1 -31.4 q-2.4 20.6 -20.1 41.2" fill="none" stroke="#c9c2a0" stroke-width="1.6" stroke-opacity="0.55" stroke-linecap="round"/><path d="M203.1 109.6 q-2.4 20.6 -20.1 41.2" fill="none" stroke="#c9c2a0" stroke-width="1.6" stroke-opacity="0.55" stroke-linecap="round"/><path d="M203.1 250.6 q-2.4 20.6 -20.1 41.2" fill="none" stroke="#c9c2a0" stroke-width="1.6" stroke-opacity="0.55" stroke-linecap="round"/><path d="M-17.7 -28.9 q-2.1 18.1 -17.7 36.3" fill="none" stroke="#c9c2a0" stroke-width="2.2" stroke-opacity="0.55" stroke-linecap="round"/><path d="M-17.7 112.1 q-2.1 18.1 -17.7 36.3" fill="none" stroke="#c9c2a0" stroke-width="2.2" stroke-opacity="0.55" stroke-linecap="round"/><path d="M-17.7 253.1 q-2.1 18.1 -17.7 36.3" fill="none" stroke="#c9c2a0" stroke-width="2.2" stroke-opacity="0.55" stroke-linecap="round"/><path d="M94.3 -28.9 q-2.1 18.1 -17.7 36.3" fill="none" stroke="#c9c2a0" stroke-width="2.2" stroke-opacity="0.55" stroke-linecap="round"/><path d="M94.3 112.1 q-2.1 18.1 -17.7 36.3" fill="none" stroke="#c9c2a0" stroke-width="2.2" stroke-opacity="0.55" stroke-linecap="round"/><path d="M94.3 253.1 q-2.1 18.1 -17.7 36.3" fill="none" stroke="#c9c2a0" stroke-width="2.2" stroke-opacity="0.55" stroke-linecap="round"/><path d="M206.3 -28.9 q-2.1 18.1 -17.7 36.3" fill="none" stroke="#c9c2a0" stroke-width="2.2" stroke-opacity="0.55" stroke-linecap="round"/><path d="M206.3 112.1 q-2.1 18.1 -17.7 36.3" fill="none" stroke="#c9c2a0" stroke-width="2.2" stroke-opacity="0.55" stroke-linecap="round"/><path d="M206.3 253.1 q-2.1 18.1 -17.7 36.3" fill="none" stroke="#c9c2a0" stroke-width="2.2" stroke-opacity="0.55" stroke-linecap="round"/><path d="M-14.5 -26.4 q-1.8 15.7 -15.3 31.3" fill="none" stroke="#d3cdac" stroke-width="1.2" stroke-opacity="0.55" stroke-linecap="round"/><path d="M-14.5 114.6 q-1.8 15.7 -15.3 31.3" fill="none" stroke="#d3cdac" stroke-width="1.2" stroke-opacity="0.55" stroke-linecap="round"/><path d="M-14.5 255.6 q-1.8 15.7 -15.3 31.3" fill="none" stroke="#d3cdac" stroke-width="1.2" stroke-opacity="0.55" stroke-linecap="round"/><path d="M97.5 -26.4 q-1.8 15.7 -15.3 31.3" fill="none" stroke="#d3cdac" stroke-width="1.2" stroke-opacity="0.55" stroke-linecap="round"/><path d="M97.5 114.6 q-1.8 15.7 -15.3 31.3" fill="none" stroke="#d3cdac" stroke-width="1.2" stroke-opacity="0.55" stroke-linecap="round"/><path d="M97.5 255.6 q-1.8 15.7 -15.3 31.3" fill="none" stroke="#d3cdac" stroke-width="1.2" stroke-opacity="0.55" stroke-linecap="round"/><path d="M209.5 -26.4 q-1.8 15.7 -15.3 31.3" fill="none" stroke="#d3cdac" stroke-width="1.2" stroke-opacity="0.55" stroke-linecap="round"/><path d="M209.5 114.6 q-1.8 15.7 -15.3 31.3" fill="none" stroke="#d3cdac" stroke-width="1.2" stroke-opacity="0.55" stroke-linecap="round"/><path d="M209.5 255.6 q-1.8 15.7 -15.3 31.3" fill="none" stroke="#d3cdac" stroke-width="1.2" stroke-opacity="0.55" stroke-linecap="round"/><path d="M-11.3 -23.9 q-1.5 13.2 -12.8 26.4" fill="none" stroke="#bfb894" stroke-width="1.7" stroke-opacity="0.55" stroke-linecap="round"/><path d="M-11.3 117.1 q-1.5 13.2 -12.8 26.4" fill="none" stroke="#bfb894" stroke-width="1.7" stroke-opacity="0.55" stroke-linecap="round"/><path d="M-11.3 258.1 q-1.5 13.2 -12.8 26.4" fill="none" stroke="#bfb894" stroke-width="1.7" stroke-opacity="0.55" stroke-linecap="round"/><path d="M100.7 -23.9 q-1.5 13.2 -12.8 26.4" fill="none" stroke="#bfb894" stroke-width="1.7" stroke-opacity="0.55" stroke-linecap="round"/><path d="M100.7 117.1 q-1.5 13.2 -12.8 26.4" fill="none" stroke="#bfb894" stroke-width="1.7" stroke-opacity="0.55" stroke-linecap="round"/><path d="M100.7 258.1 q-1.5 13.2 -12.8 26.4" fill="none" stroke="#bfb894" stroke-width="1.7" stroke-opacity="0.55" stroke-linecap="round"/><path d="M212.7 -23.9 q-1.5 13.2 -12.8 26.4" fill="none" stroke="#bfb894" stroke-width="1.7" stroke-opacity="0.55" stroke-linecap="round"/><path d="M212.7 117.1 q-1.5 13.2 -12.8 26.4" fill="none" stroke="#bfb894" stroke-width="1.7" stroke-opacity="0.55" stroke-linecap="round"/><path d="M212.7 258.1 q-1.5 13.2 -12.8 26.4" fill="none" stroke="#bfb894" stroke-width="1.7" stroke-opacity="0.55" stroke-linecap="round"/><path d="M-69.9 -106.1 q-3.0 28.1 -25.1 56.3" fill="none" stroke="#bfb894" stroke-width="2.0" stroke-opacity="0.55" stroke-linecap="round"/><path d="M-69.9 34.9 q-3.0 28.1 -25.1 56.3" fill="none" stroke="#bfb894" stroke-width="2.0" stroke-opacity="0.55" stroke-linecap="round"/><path d="M-69.9 175.9 q-3.0 28.1 -25.1 56.3" fill="none" stroke="#bfb894" stroke-width="2.0" stroke-opacity="0.55" stroke-linecap="round"/><path d="M42.1 -106.1 q-3.0 28.1 -25.1 56.3" fill="none" stroke="#bfb894" stroke-width="2.0" stroke-opacity="0.55" stroke-linecap="round"/><path d="M42.1 34.9 q-3.0 28.1 -25.1 56.3" fill="none" stroke="#bfb894" stroke-width="2.0" stroke-opacity="0.55" stroke-linecap="round"/><path d="M42.1 175.9 q-3.0 28.1 -25.1 56.3" fill="none" stroke="#bfb894" stroke-width="2.0" stroke-opacity="0.55" stroke-linecap="round"/><path d="M154.1 -106.1 q-3.0 28.1 -25.1 56.3" fill="none" stroke="#bfb894" stroke-width="2.0" stroke-opacity="0.55" stroke-linecap="round"/><path d="M154.1 34.9 q-3.0 28.1 -25.1 56.3" fill="none" stroke="#bfb894" stroke-width="2.0" stroke-opacity="0.55" stroke-linecap="round"/><path d="M154.1 175.9 q-3.0 28.1 -25.1 56.3" fill="none" stroke="#bfb894" stroke-width="2.0" stroke-opacity="0.55" stroke-linecap="round"/><path d="M-66.7 -103.6 q-2.7 24.8 -22.1 49.5" fill="none" stroke="#bfb894" stroke-width="1.3" stroke-opacity="0.55" stroke-linecap="round"/><path d="M-66.7 37.4 q-2.7 24.8 -22.1 49.5" fill="none" stroke="#bfb894" stroke-width="1.3" stroke-opacity="0.55" stroke-linecap="round"/><path d="M-66.7 178.4 q-2.7 24.8 -22.1 49.5" fill="none" stroke="#bfb894" stroke-width="1.3" stroke-opacity="0.55" stroke-linecap="round"/><path d="M45.3 -103.6 q-2.7 24.8 -22.1 49.5" fill="none" stroke="#bfb894" stroke-width="1.3" stroke-opacity="0.55" stroke-linecap="round"/><path d="M45.3 37.4 q-2.7 24.8 -22.1 49.5" fill="none" stroke="#bfb894" stroke-width="1.3" stroke-opacity="0.55" stroke-linecap="round"/><path d="M45.3 178.4 q-2.7 24.8 -22.1 49.5" fill="none" stroke="#bfb894" stroke-width="1.3" stroke-opacity="0.55" stroke-linecap="round"/><path d="M157.3 -103.6 q-2.7 24.8 -22.1 49.5" fill="none" stroke="#bfb894" stroke-width="1.3" stroke-opacity="0.55" stroke-linecap="round"/><path d="M157.3 37.4 q-2.7 24.8 -22.1 49.5" fill="none" stroke="#bfb894" stroke-width="1.3" stroke-opacity="0.55" stroke-linecap="round"/><path d="M157.3 178.4 q-2.7 24.8 -22.1 49.5" fill="none" stroke="#bfb894" stroke-width="1.3" stroke-opacity="0.55" stroke-linecap="round"/><path d="M-63.5 -101.1 q-2.3 21.4 -19.1 42.8" fill="none" stroke="#bfb894" stroke-width="1.3" stroke-opacity="0.55" stroke-linecap="round"/><path d="M-63.5 39.9 q-2.3 21.4 -19.1 42.8" fill="none" stroke="#bfb894" stroke-width="1.3" stroke-opacity="0.55" stroke-linecap="round"/><path d="M-63.5 180.9 q-2.3 21.4 -19.1 42.8" fill="none" stroke="#bfb894" stroke-width="1.3" stroke-opacity="0.55" stroke-linecap="round"/><path d="M48.5 -101.1 q-2.3 21.4 -19.1 42.8" fill="none" stroke="#bfb894" stroke-width="1.3" stroke-opacity="0.55" stroke-linecap="round"/><path d="M48.5 39.9 q-2.3 21.4 -19.1 42.8" fill="none" stroke="#bfb894" stroke-width="1.3" stroke-opacity="0.55" stroke-linecap="round"/><path d="M48.5 180.9 q-2.3 21.4 -19.1 42.8" fill="none" stroke="#bfb894" stroke-width="1.3" stroke-opacity="0.55" stroke-linecap="round"/><path d="M160.5 -101.1 q-2.3 21.4 -19.1 42.8" fill="none" stroke="#bfb894" stroke-width="1.3" stroke-opacity="0.55" stroke-linecap="round"/><path d="M160.5 39.9 q-2.3 21.4 -19.1 42.8" fill="none" stroke="#bfb894" stroke-width="1.3" stroke-opacity="0.55" stroke-linecap="round"/><path d="M160.5 180.9 q-2.3 21.4 -19.1 42.8" fill="none" stroke="#bfb894" stroke-width="1.3" stroke-opacity="0.55" stroke-linecap="round"/><path d="M-83.1 -100.1 q-2.0 21.3 -16.5 42.6" fill="none" stroke="#d3cdac" stroke-width="2.1" stroke-opacity="0.55" stroke-linecap="round"/><path d="M-83.1 40.9 q-2.0 21.3 -16.5 42.6" fill="none" stroke="#d3cdac" stroke-width="2.1" stroke-opacity="0.55" stroke-linecap="round"/><path d="M-83.1 181.9 q-2.0 21.3 -16.5 42.6" fill="none" stroke="#d3cdac" stroke-width="2.1" stroke-opacity="0.55" stroke-linecap="round"/><path d="M28.9 -100.1 q-2.0 21.3 -16.5 42.6" fill="none" stroke="#d3cdac" stroke-width="2.1" stroke-opacity="0.55" stroke-linecap="round"/><path d="M28.9 40.9 q-2.0 21.3 -16.5 42.6" fill="none" stroke="#d3cdac" stroke-width="2.1" stroke-opacity="0.55" stroke-linecap="round"/><path d="M28.9 181.9 q-2.0 21.3 -16.5 42.6" fill="none" stroke="#d3cdac" stroke-width="2.1" stroke-opacity="0.55" stroke-linecap="round"/><path d="M140.9 -100.1 q-2.0 21.3 -16.5 42.6" fill="none" stroke="#d3cdac" stroke-width="2.1" stroke-opacity="0.55" stroke-linecap="round"/><path d="M140.9 40.9 q-2.0 21.3 -16.5 42.6" fill="none" stroke="#d3cdac" stroke-width="2.1" stroke-opacity="0.55" stroke-linecap="round"/><path d="M140.9 181.9 q-2.0 21.3 -16.5 42.6" fill="none" stroke="#d3cdac" stroke-width="2.1" stroke-opacity="0.55" stroke-linecap="round"/><path d="M-79.9 -97.6 q-1.7 18.7 -14.5 37.5" fill="none" stroke="#c9c2a0" stroke-width="1.9" stroke-opacity="0.55" stroke-linecap="round"/><path d="M-79.9 43.4 q-1.7 18.7 -14.5 37.5" fill="none" stroke="#c9c2a0" stroke-width="1.9" stroke-opacity="0.55" stroke-linecap="round"/><path d="M-79.9 184.4 q-1.7 18.7 -14.5 37.5" fill="none" stroke="#c9c2a0" stroke-width="1.9" stroke-opacity="0.55" stroke-linecap="round"/><path d="M32.1 -97.6 q-1.7 18.7 -14.5 37.5" fill="none" stroke="#c9c2a0" stroke-width="1.9" stroke-opacity="0.55" stroke-linecap="round"/><path d="M32.1 43.4 q-1.7 18.7 -14.5 37.5" fill="none" stroke="#c9c2a0" stroke-width="1.9" stroke-opacity="0.55" stroke-linecap="round"/><path d="M32.1 184.4 q-1.7 18.7 -14.5 37.5" fill="none" stroke="#c9c2a0" stroke-width="1.9" stroke-opacity="0.55" stroke-linecap="round"/><path d="M144.1 -97.6 q-1.7 18.7 -14.5 37.5" fill="none" stroke="#c9c2a0" stroke-width="1.9" stroke-opacity="0.55" stroke-linecap="round"/><path d="M144.1 43.4 q-1.7 18.7 -14.5 37.5" fill="none" stroke="#c9c2a0" stroke-width="1.9" stroke-opacity="0.55" stroke-linecap="round"/><path d="M144.1 184.4 q-1.7 18.7 -14.5 37.5" fill="none" stroke="#c9c2a0" stroke-width="1.9" stroke-opacity="0.55" stroke-linecap="round"/><path d="M-76.7 -95.1 q-1.5 16.2 -12.6 32.4" fill="none" stroke="#bfb894" stroke-width="1.2" stroke-opacity="0.55" stroke-linecap="round"/><path d="M-76.7 45.9 q-1.5 16.2 -12.6 32.4" fill="none" stroke="#bfb894" stroke-width="1.2" stroke-opacity="0.55" stroke-linecap="round"/><path d="M-76.7 186.9 q-1.5 16.2 -12.6 32.4" fill="none" stroke="#bfb894" stroke-width="1.2" stroke-opacity="0.55" stroke-linecap="round"/><path d="M35.3 -95.1 q-1.5 16.2 -12.6 32.4" fill="none" stroke="#bfb894" stroke-width="1.2" stroke-opacity="0.55" stroke-linecap="round"/><path d="M35.3 45.9 q-1.5 16.2 -12.6 32.4" fill="none" stroke="#bfb894" stroke-width="1.2" stroke-opacity="0.55" stroke-linecap="round"/><path d="M35.3 186.9 q-1.5 16.2 -12.6 32.4" fill="none" stroke="#bfb894" stroke-width="1.2" stroke-opacity="0.55" stroke-linecap="round"/><path d="M147.3 -95.1 q-1.5 16.2 -12.6 32.4" fill="none" stroke="#bfb894" stroke-width="1.2" stroke-opacity="0.55" stroke-linecap="round"/><path d="M147.3 45.9 q-1.5 16.2 -12.6 32.4" fill="none" stroke="#bfb894" stroke-width="1.2" stroke-opacity="0.55" stroke-linecap="round"/><path d="M147.3 186.9 q-1.5 16.2 -12.6 32.4" fill="none" stroke="#bfb894" stroke-width="1.2" stroke-opacity="0.55" stroke-linecap="round"/><path d="M-96.4 -49.3 q1.8 28.7 14.9 57.3" fill="none" stroke="#bfb894" stroke-width="2.0" stroke-opacity="0.55" stroke-linecap="round"/><path d="M-96.4 91.7 q1.8 28.7 14.9 57.3" fill="none" stroke="#bfb894" stroke-width="2.0" stroke-opacity="0.55" stroke-linecap="round"/><path d="M-96.4 232.7 q1.8 28.7 14.9 57.3" fill="none" stroke="#bfb894" stroke-width="2.0" stroke-opacity="0.55" stroke-linecap="round"/><path d="M15.6 -49.3 q1.8 28.7 14.9 57.3" fill="none" stroke="#bfb894" stroke-width="2.0" stroke-opacity="0.55" stroke-linecap="round"/><path d="M15.6 91.7 q1.8 28.7 14.9 57.3" fill="none" stroke="#bfb894" stroke-width="2.0" stroke-opacity="0.55" stroke-linecap="round"/><path d="M15.6 232.7 q1.8 28.7 14.9 57.3" fill="none" stroke="#bfb894" stroke-width="2.0" stroke-opacity="0.55" stroke-linecap="round"/><path d="M127.6 -49.3 q1.8 28.7 14.9 57.3" fill="none" stroke="#bfb894" stroke-width="2.0" stroke-opacity="0.55" stroke-linecap="round"/><path d="M127.6 91.7 q1.8 28.7 14.9 57.3" fill="none" stroke="#bfb894" stroke-width="2.0" stroke-opacity="0.55" stroke-linecap="round"/><path d="M127.6 232.7 q1.8 28.7 14.9 57.3" fill="none" stroke="#bfb894" stroke-width="2.0" stroke-opacity="0.55" stroke-linecap="round"/><path d="M-93.2 -46.8 q1.6 25.2 13.1 50.5" fill="none" stroke="#bfb894" stroke-width="1.8" stroke-opacity="0.55" stroke-linecap="round"/><path d="M-93.2 94.2 q1.6 25.2 13.1 50.5" fill="none" stroke="#bfb894" stroke-width="1.8" stroke-opacity="0.55" stroke-linecap="round"/><path d="M-93.2 235.2 q1.6 25.2 13.1 50.5" fill="none" stroke="#bfb894" stroke-width="1.8" stroke-opacity="0.55" stroke-linecap="round"/><path d="M18.8 -46.8 q1.6 25.2 13.1 50.5" fill="none" stroke="#bfb894" stroke-width="1.8" stroke-opacity="0.55" stroke-linecap="round"/><path d="M18.8 94.2 q1.6 25.2 13.1 50.5" fill="none" stroke="#bfb894" stroke-width="1.8" stroke-opacity="0.55" stroke-linecap="round"/><path d="M18.8 235.2 q1.6 25.2 13.1 50.5" fill="none" stroke="#bfb894" stroke-width="1.8" stroke-opacity="0.55" stroke-linecap="round"/><path d="M130.8 -46.8 q1.6 25.2 13.1 50.5" fill="none" stroke="#bfb894" stroke-width="1.8" stroke-opacity="0.55" stroke-linecap="round"/><path d="M130.8 94.2 q1.6 25.2 13.1 50.5" fill="none" stroke="#bfb894" stroke-width="1.8" stroke-opacity="0.55" stroke-linecap="round"/><path d="M130.8 235.2 q1.6 25.2 13.1 50.5" fill="none" stroke="#bfb894" stroke-width="1.8" stroke-opacity="0.55" stroke-linecap="round"/><path d="M-64.3 -59.1 q2.0 27.7 16.6 55.5" fill="none" stroke="#bfb894" stroke-width="1.3" stroke-opacity="0.55" stroke-linecap="round"/><path d="M-64.3 81.9 q2.0 27.7 16.6 55.5" fill="none" stroke="#bfb894" stroke-width="1.3" stroke-opacity="0.55" stroke-linecap="round"/><path d="M-64.3 222.9 q2.0 27.7 16.6 55.5" fill="none" stroke="#bfb894" stroke-width="1.3" stroke-opacity="0.55" stroke-linecap="round"/><path d="M47.7 -59.1 q2.0 27.7 16.6 55.5" fill="none" stroke="#bfb894" stroke-width="1.3" stroke-opacity="0.55" stroke-linecap="round"/><path d="M47.7 81.9 q2.0 27.7 16.6 55.5" fill="none" stroke="#bfb894" stroke-width="1.3" stroke-opacity="0.55" stroke-linecap="round"/><path d="M47.7 222.9 q2.0 27.7 16.6 55.5" fill="none" stroke="#bfb894" stroke-width="1.3" stroke-opacity="0.55" stroke-linecap="round"/><path d="M159.7 -59.1 q2.0 27.7 16.6 55.5" fill="none" stroke="#bfb894" stroke-width="1.3" stroke-opacity="0.55" stroke-linecap="round"/><path d="M159.7 81.9 q2.0 27.7 16.6 55.5" fill="none" stroke="#bfb894" stroke-width="1.3" stroke-opacity="0.55" stroke-linecap="round"/><path d="M159.7 222.9 q2.0 27.7 16.6 55.5" fill="none" stroke="#bfb894" stroke-width="1.3" stroke-opacity="0.55" stroke-linecap="round"/><path d="M-61.1 -56.6 q1.7 24.4 14.6 48.8" fill="none" stroke="#d3cdac" stroke-width="1.2" stroke-opacity="0.55" stroke-linecap="round"/><path d="M-61.1 84.4 q1.7 24.4 14.6 48.8" fill="none" stroke="#d3cdac" stroke-width="1.2" stroke-opacity="0.55" stroke-linecap="round"/><path d="M-61.1 225.4 q1.7 24.4 14.6 48.8" fill="none" stroke="#d3cdac" stroke-width="1.2" stroke-opacity="0.55" stroke-linecap="round"/><path d="M50.9 -56.6 q1.7 24.4 14.6 48.8" fill="none" stroke="#d3cdac" stroke-width="1.2" stroke-opacity="0.55" stroke-linecap="round"/><path d="M50.9 84.4 q1.7 24.4 14.6 48.8" fill="none" stroke="#d3cdac" stroke-width="1.2" stroke-opacity="0.55" stroke-linecap="round"/><path d="M50.9 225.4 q1.7 24.4 14.6 48.8" fill="none" stroke="#d3cdac" stroke-width="1.2" stroke-opacity="0.55" stroke-linecap="round"/><path d="M162.9 -56.6 q1.7 24.4 14.6 48.8" fill="none" stroke="#d3cdac" stroke-width="1.2" stroke-opacity="0.55" stroke-linecap="round"/><path d="M162.9 84.4 q1.7 24.4 14.6 48.8" fill="none" stroke="#d3cdac" stroke-width="1.2" stroke-opacity="0.55" stroke-linecap="round"/><path d="M162.9 225.4 q1.7 24.4 14.6 48.8" fill="none" stroke="#d3cdac" stroke-width="1.2" stroke-opacity="0.55" stroke-linecap="round"/><path d="M-57.9 -54.1 q1.5 21.1 12.6 42.2" fill="none" stroke="#d3cdac" stroke-width="1.3" stroke-opacity="0.55" stroke-linecap="round"/><path d="M-57.9 86.9 q1.5 21.1 12.6 42.2" fill="none" stroke="#d3cdac" stroke-width="1.3" stroke-opacity="0.55" stroke-linecap="round"/><path d="M-57.9 227.9 q1.5 21.1 12.6 42.2" fill="none" stroke="#d3cdac" stroke-width="1.3" stroke-opacity="0.55" stroke-linecap="round"/><path d="M54.1 -54.1 q1.5 21.1 12.6 42.2" fill="none" stroke="#d3cdac" stroke-width="1.3" stroke-opacity="0.55" stroke-linecap="round"/><path d="M54.1 86.9 q1.5 21.1 12.6 42.2" fill="none" stroke="#d3cdac" stroke-width="1.3" stroke-opacity="0.55" stroke-linecap="round"/><path d="M54.1 227.9 q1.5 21.1 12.6 42.2" fill="none" stroke="#d3cdac" stroke-width="1.3" stroke-opacity="0.55" stroke-linecap="round"/><path d="M166.1 -54.1 q1.5 21.1 12.6 42.2" fill="none" stroke="#d3cdac" stroke-width="1.3" stroke-opacity="0.55" stroke-linecap="round"/><path d="M166.1 86.9 q1.5 21.1 12.6 42.2" fill="none" stroke="#d3cdac" stroke-width="1.3" stroke-opacity="0.55" stroke-linecap="round"/><path d="M166.1 227.9 q1.5 21.1 12.6 42.2" fill="none" stroke="#d3cdac" stroke-width="1.3" stroke-opacity="0.55" stroke-linecap="round"/><path d="M-54.7 -51.6 q1.3 17.8 10.6 35.5" fill="none" stroke="#d3cdac" stroke-width="1.2" stroke-opacity="0.55" stroke-linecap="round"/><path d="M-54.7 89.4 q1.3 17.8 10.6 35.5" fill="none" stroke="#d3cdac" stroke-width="1.2" stroke-opacity="0.55" stroke-linecap="round"/><path d="M-54.7 230.4 q1.3 17.8 10.6 35.5" fill="none" stroke="#d3cdac" stroke-width="1.2" stroke-opacity="0.55" stroke-linecap="round"/><path d="M57.3 -51.6 q1.3 17.8 10.6 35.5" fill="none" stroke="#d3cdac" stroke-width="1.2" stroke-opacity="0.55" stroke-linecap="round"/><path d="M57.3 89.4 q1.3 17.8 10.6 35.5" fill="none" stroke="#d3cdac" stroke-width="1.2" stroke-opacity="0.55" stroke-linecap="round"/><path d="M57.3 230.4 q1.3 17.8 10.6 35.5" fill="none" stroke="#d3cdac" stroke-width="1.2" stroke-opacity="0.55" stroke-linecap="round"/><path d="M169.3 -51.6 q1.3 17.8 10.6 35.5" fill="none" stroke="#d3cdac" stroke-width="1.2" stroke-opacity="0.55" stroke-linecap="round"/><path d="M169.3 89.4 q1.3 17.8 10.6 35.5" fill="none" stroke="#d3cdac" stroke-width="1.2" stroke-opacity="0.55" stroke-linecap="round"/><path d="M169.3 230.4 q1.3 17.8 10.6 35.5" fill="none" stroke="#d3cdac" stroke-width="1.2" stroke-opacity="0.55" stroke-linecap="round"/><path d="M-45.5 -50.2 q2.3 27.8 18.9 55.6" fill="none" stroke="#c9c2a0" stroke-width="1.3" stroke-opacity="0.55" stroke-linecap="round"/><path d="M-45.5 90.8 q2.3 27.8 18.9 55.6" fill="none" stroke="#c9c2a0" stroke-width="1.3" stroke-opacity="0.55" stroke-linecap="round"/><path d="M-45.5 231.8 q2.3 27.8 18.9 55.6" fill="none" stroke="#c9c2a0" stroke-width="1.3" stroke-opacity="0.55" stroke-linecap="round"/><path d="M66.5 -50.2 q2.3 27.8 18.9 55.6" fill="none" stroke="#c9c2a0" stroke-width="1.3" stroke-opacity="0.55" stroke-linecap="round"/><path d="M66.5 90.8 q2.3 27.8 18.9 55.6" fill="none" stroke="#c9c2a0" stroke-width="1.3" stroke-opacity="0.55" stroke-linecap="round"/><path d="M66.5 231.8 q2.3 27.8 18.9 55.6" fill="none" stroke="#c9c2a0" stroke-width="1.3" stroke-opacity="0.55" stroke-linecap="round"/><path d="M178.5 -50.2 q2.3 27.8 18.9 55.6" fill="none" stroke="#c9c2a0" stroke-width="1.3" stroke-opacity="0.55" stroke-linecap="round"/><path d="M178.5 90.8 q2.3 27.8 18.9 55.6" fill="none" stroke="#c9c2a0" stroke-width="1.3" stroke-opacity="0.55" stroke-linecap="round"/><path d="M178.5 231.8 q2.3 27.8 18.9 55.6" fill="none" stroke="#c9c2a0" stroke-width="1.3" stroke-opacity="0.55" stroke-linecap="round"/><path d="M-42.3 -47.7 q2.0 24.4 16.6 48.9" fill="none" stroke="#c9c2a0" stroke-width="1.6" stroke-opacity="0.55" stroke-linecap="round"/><path d="M-42.3 93.3 q2.0 24.4 16.6 48.9" fill="none" stroke="#c9c2a0" stroke-width="1.6" stroke-opacity="0.55" stroke-linecap="round"/><path d="M-42.3 234.3 q2.0 24.4 16.6 48.9" fill="none" stroke="#c9c2a0" stroke-width="1.6" stroke-opacity="0.55" stroke-linecap="round"/><path d="M69.7 -47.7 q2.0 24.4 16.6 48.9" fill="none" stroke="#c9c2a0" stroke-width="1.6" stroke-opacity="0.55" stroke-linecap="round"/><path d="M69.7 93.3 q2.0 24.4 16.6 48.9" fill="none" stroke="#c9c2a0" stroke-width="1.6" stroke-opacity="0.55" stroke-linecap="round"/><path d="M69.7 234.3 q2.0 24.4 16.6 48.9" fill="none" stroke="#c9c2a0" stroke-width="1.6" stroke-opacity="0.55" stroke-linecap="round"/><path d="M181.7 -47.7 q2.0 24.4 16.6 48.9" fill="none" stroke="#c9c2a0" stroke-width="1.6" stroke-opacity="0.55" stroke-linecap="round"/><path d="M181.7 93.3 q2.0 24.4 16.6 48.9" fill="none" stroke="#c9c2a0" stroke-width="1.6" stroke-opacity="0.55" stroke-linecap="round"/><path d="M181.7 234.3 q2.0 24.4 16.6 48.9" fill="none" stroke="#c9c2a0" stroke-width="1.6" stroke-opacity="0.55" stroke-linecap="round"/><path d="M-39.1 -45.2 q1.7 21.1 14.4 42.2" fill="none" stroke="#c9c2a0" stroke-width="1.2" stroke-opacity="0.55" stroke-linecap="round"/><path d="M-39.1 95.8 q1.7 21.1 14.4 42.2" fill="none" stroke="#c9c2a0" stroke-width="1.2" stroke-opacity="0.55" stroke-linecap="round"/><path d="M-39.1 236.8 q1.7 21.1 14.4 42.2" fill="none" stroke="#c9c2a0" stroke-width="1.2" stroke-opacity="0.55" stroke-linecap="round"/><path d="M72.9 -45.2 q1.7 21.1 14.4 42.2" fill="none" stroke="#c9c2a0" stroke-width="1.2" stroke-opacity="0.55" stroke-linecap="round"/><path d="M72.9 95.8 q1.7 21.1 14.4 42.2" fill="none" stroke="#c9c2a0" stroke-width="1.2" stroke-opacity="0.55" stroke-linecap="round"/><path d="M72.9 236.8 q1.7 21.1 14.4 42.2" fill="none" stroke="#c9c2a0" stroke-width="1.2" stroke-opacity="0.55" stroke-linecap="round"/><path d="M184.9 -45.2 q1.7 21.1 14.4 42.2" fill="none" stroke="#c9c2a0" stroke-width="1.2" stroke-opacity="0.55" stroke-linecap="round"/><path d="M184.9 95.8 q1.7 21.1 14.4 42.2" fill="none" stroke="#c9c2a0" stroke-width="1.2" stroke-opacity="0.55" stroke-linecap="round"/><path d="M184.9 236.8 q1.7 21.1 14.4 42.2" fill="none" stroke="#c9c2a0" stroke-width="1.2" stroke-opacity="0.55" stroke-linecap="round"/><path d="M-62.0 -121.1 q2.0 28.0 16.5 56.0" fill="none" stroke="#bfb894" stroke-width="1.6" stroke-opacity="0.55" stroke-linecap="round"/><path d="M-62.0 19.9 q2.0 28.0 16.5 56.0" fill="none" stroke="#bfb894" stroke-width="1.6" stroke-opacity="0.55" stroke-linecap="round"/><path d="M-62.0 160.9 q2.0 28.0 16.5 56.0" fill="none" stroke="#bfb894" stroke-width="1.6" stroke-opacity="0.55" stroke-linecap="round"/><path d="M50.0 -121.1 q2.0 28.0 16.5 56.0" fill="none" stroke="#bfb894" stroke-width="1.6" stroke-opacity="0.55" stroke-linecap="round"/><path d="M50.0 19.9 q2.0 28.0 16.5 56.0" fill="none" stroke="#bfb894" stroke-width="1.6" stroke-opacity="0.55" stroke-linecap="round"/><path d="M50.0 160.9 q2.0 28.0 16.5 56.0" fill="none" stroke="#bfb894" stroke-width="1.6" stroke-opacity="0.55" stroke-linecap="round"/><path d="M162.0 -121.1 q2.0 28.0 16.5 56.0" fill="none" stroke="#bfb894" stroke-width="1.6" stroke-opacity="0.55" stroke-linecap="round"/><path d="M162.0 19.9 q2.0 28.0 16.5 56.0" fill="none" stroke="#bfb894" stroke-width="1.6" stroke-opacity="0.55" stroke-linecap="round"/><path d="M162.0 160.9 q2.0 28.0 16.5 56.0" fill="none" stroke="#bfb894" stroke-width="1.6" stroke-opacity="0.55" stroke-linecap="round"/><path d="M-58.8 -118.6 q1.7 24.6 14.5 49.3" fill="none" stroke="#c9c2a0" stroke-width="1.8" stroke-opacity="0.55" stroke-linecap="round"/><path d="M-58.8 22.4 q1.7 24.6 14.5 49.3" fill="none" stroke="#c9c2a0" stroke-width="1.8" stroke-opacity="0.55" stroke-linecap="round"/><path d="M-58.8 163.4 q1.7 24.6 14.5 49.3" fill="none" stroke="#c9c2a0" stroke-width="1.8" stroke-opacity="0.55" stroke-linecap="round"/><path d="M53.2 -118.6 q1.7 24.6 14.5 49.3" fill="none" stroke="#c9c2a0" stroke-width="1.8" stroke-opacity="0.55" stroke-linecap="round"/><path d="M53.2 22.4 q1.7 24.6 14.5 49.3" fill="none" stroke="#c9c2a0" stroke-width="1.8" stroke-opacity="0.55" stroke-linecap="round"/><path d="M53.2 163.4 q1.7 24.6 14.5 49.3" fill="none" stroke="#c9c2a0" stroke-width="1.8" stroke-opacity="0.55" stroke-linecap="round"/><path d="M165.2 -118.6 q1.7 24.6 14.5 49.3" fill="none" stroke="#c9c2a0" stroke-width="1.8" stroke-opacity="0.55" stroke-linecap="round"/><path d="M165.2 22.4 q1.7 24.6 14.5 49.3" fill="none" stroke="#c9c2a0" stroke-width="1.8" stroke-opacity="0.55" stroke-linecap="round"/><path d="M165.2 163.4 q1.7 24.6 14.5 49.3" fill="none" stroke="#c9c2a0" stroke-width="1.8" stroke-opacity="0.55" stroke-linecap="round"/><path d="M-55.6 -116.1 q1.5 21.3 12.5 42.6" fill="none" stroke="#c9c2a0" stroke-width="1.4" stroke-opacity="0.55" stroke-linecap="round"/><path d="M-55.6 24.9 q1.5 21.3 12.5 42.6" fill="none" stroke="#c9c2a0" stroke-width="1.4" stroke-opacity="0.55" stroke-linecap="round"/><path d="M-55.6 165.9 q1.5 21.3 12.5 42.6" fill="none" stroke="#c9c2a0" stroke-width="1.4" stroke-opacity="0.55" stroke-linecap="round"/><path d="M56.4 -116.1 q1.5 21.3 12.5 42.6" fill="none" stroke="#c9c2a0" stroke-width="1.4" stroke-opacity="0.55" stroke-linecap="round"/><path d="M56.4 24.9 q1.5 21.3 12.5 42.6" fill="none" stroke="#c9c2a0" stroke-width="1.4" stroke-opacity="0.55" stroke-linecap="round"/><path d="M56.4 165.9 q1.5 21.3 12.5 42.6" fill="none" stroke="#c9c2a0" stroke-width="1.4" stroke-opacity="0.55" stroke-linecap="round"/><path d="M168.4 -116.1 q1.5 21.3 12.5 42.6" fill="none" stroke="#c9c2a0" stroke-width="1.4" stroke-opacity="0.55" stroke-linecap="round"/><path d="M168.4 24.9 q1.5 21.3 12.5 42.6" fill="none" stroke="#c9c2a0" stroke-width="1.4" stroke-opacity="0.55" stroke-linecap="round"/><path d="M168.4 165.9 q1.5 21.3 12.5 42.6" fill="none" stroke="#c9c2a0" stroke-width="1.4" stroke-opacity="0.55" stroke-linecap="round"/><path d="M-52.4 -113.6 q1.3 17.9 10.6 35.9" fill="none" stroke="#bfb894" stroke-width="1.4" stroke-opacity="0.55" stroke-linecap="round"/><path d="M-52.4 27.4 q1.3 17.9 10.6 35.9" fill="none" stroke="#bfb894" stroke-width="1.4" stroke-opacity="0.55" stroke-linecap="round"/><path d="M-52.4 168.4 q1.3 17.9 10.6 35.9" fill="none" stroke="#bfb894" stroke-width="1.4" stroke-opacity="0.55" stroke-linecap="round"/><path d="M59.6 -113.6 q1.3 17.9 10.6 35.9" fill="none" stroke="#bfb894" stroke-width="1.4" stroke-opacity="0.55" stroke-linecap="round"/><path d="M59.6 27.4 q1.3 17.9 10.6 35.9" fill="none" stroke="#bfb894" stroke-width="1.4" stroke-opacity="0.55" stroke-linecap="round"/><path d="M59.6 168.4 q1.3 17.9 10.6 35.9" fill="none" stroke="#bfb894" stroke-width="1.4" stroke-opacity="0.55" stroke-linecap="round"/><path d="M171.6 -113.6 q1.3 17.9 10.6 35.9" fill="none" stroke="#bfb894" stroke-width="1.4" stroke-opacity="0.55" stroke-linecap="round"/><path d="M171.6 27.4 q1.3 17.9 10.6 35.9" fill="none" stroke="#bfb894" stroke-width="1.4" stroke-opacity="0.55" stroke-linecap="round"/><path d="M171.6 168.4 q1.3 17.9 10.6 35.9" fill="none" stroke="#bfb894" stroke-width="1.4" stroke-opacity="0.55" stroke-linecap="round"/><path d="M-28.6 -34.3 q-3.0 24.1 -25.3 48.1" fill="none" stroke="#bfb894" stroke-width="1.7" stroke-opacity="0.55" stroke-linecap="round"/><path d="M-28.6 106.7 q-3.0 24.1 -25.3 48.1" fill="none" stroke="#bfb894" stroke-width="1.7" stroke-opacity="0.55" stroke-linecap="round"/><path d="M-28.6 247.7 q-3.0 24.1 -25.3 48.1" fill="none" stroke="#bfb894" stroke-width="1.7" stroke-opacity="0.55" stroke-linecap="round"/><path d="M83.4 -34.3 q-3.0 24.1 -25.3 48.1" fill="none" stroke="#bfb894" stroke-width="1.7" stroke-opacity="0.55" stroke-linecap="round"/><path d="M83.4 106.7 q-3.0 24.1 -25.3 48.1" fill="none" stroke="#bfb894" stroke-width="1.7" stroke-opacity="0.55" stroke-linecap="round"/><path d="M83.4 247.7 q-3.0 24.1 -25.3 48.1" fill="none" stroke="#bfb894" stroke-width="1.7" stroke-opacity="0.55" stroke-linecap="round"/><path d="M195.4 -34.3 q-3.0 24.1 -25.3 48.1" fill="none" stroke="#bfb894" stroke-width="1.7" stroke-opacity="0.55" stroke-linecap="round"/><path d="M195.4 106.7 q-3.0 24.1 -25.3 48.1" fill="none" stroke="#bfb894" stroke-width="1.7" stroke-opacity="0.55" stroke-linecap="round"/><path d="M195.4 247.7 q-3.0 24.1 -25.3 48.1" fill="none" stroke="#bfb894" stroke-width="1.7" stroke-opacity="0.55" stroke-linecap="round"/><path d="M-25.4 -31.8 q-2.7 21.2 -22.3 42.3" fill="none" stroke="#c9c2a0" stroke-width="1.6" stroke-opacity="0.55" stroke-linecap="round"/><path d="M-25.4 109.2 q-2.7 21.2 -22.3 42.3" fill="none" stroke="#c9c2a0" stroke-width="1.6" stroke-opacity="0.55" stroke-linecap="round"/><path d="M-25.4 250.2 q-2.7 21.2 -22.3 42.3" fill="none" stroke="#c9c2a0" stroke-width="1.6" stroke-opacity="0.55" stroke-linecap="round"/><path d="M86.6 -31.8 q-2.7 21.2 -22.3 42.3" fill="none" stroke="#c9c2a0" stroke-width="1.6" stroke-opacity="0.55" stroke-linecap="round"/><path d="M86.6 109.2 q-2.7 21.2 -22.3 42.3" fill="none" stroke="#c9c2a0" stroke-width="1.6" stroke-opacity="0.55" stroke-linecap="round"/><path d="M86.6 250.2 q-2.7 21.2 -22.3 42.3" fill="none" stroke="#c9c2a0" stroke-width="1.6" stroke-opacity="0.55" stroke-linecap="round"/><path d="M198.6 -31.8 q-2.7 21.2 -22.3 42.3" fill="none" stroke="#c9c2a0" stroke-width="1.6" stroke-opacity="0.55" stroke-linecap="round"/><path d="M198.6 109.2 q-2.7 21.2 -22.3 42.3" fill="none" stroke="#c9c2a0" stroke-width="1.6" stroke-opacity="0.55" stroke-linecap="round"/><path d="M198.6 250.2 q-2.7 21.2 -22.3 42.3" fill="none" stroke="#c9c2a0" stroke-width="1.6" stroke-opacity="0.55" stroke-linecap="round"/><path d="M-48.5 -20.5 q2.3 18.5 18.9 37.0" fill="none" stroke="#bfb894" stroke-width="1.4" stroke-opacity="0.55" stroke-linecap="round"/><path d="M-48.5 120.5 q2.3 18.5 18.9 37.0" fill="none" stroke="#bfb894" stroke-width="1.4" stroke-opacity="0.55" stroke-linecap="round"/><path d="M-48.5 261.5 q2.3 18.5 18.9 37.0" fill="none" stroke="#bfb894" stroke-width="1.4" stroke-opacity="0.55" stroke-linecap="round"/><path d="M63.5 -20.5 q2.3 18.5 18.9 37.0" fill="none" stroke="#bfb894" stroke-width="1.4" stroke-opacity="0.55" stroke-linecap="round"/><path d="M63.5 120.5 q2.3 18.5 18.9 37.0" fill="none" stroke="#bfb894" stroke-width="1.4" stroke-opacity="0.55" stroke-linecap="round"/><path d="M63.5 261.5 q2.3 18.5 18.9 37.0" fill="none" stroke="#bfb894" stroke-width="1.4" stroke-opacity="0.55" stroke-linecap="round"/><path d="M175.5 -20.5 q2.3 18.5 18.9 37.0" fill="none" stroke="#bfb894" stroke-width="1.4" stroke-opacity="0.55" stroke-linecap="round"/><path d="M175.5 120.5 q2.3 18.5 18.9 37.0" fill="none" stroke="#bfb894" stroke-width="1.4" stroke-opacity="0.55" stroke-linecap="round"/><path d="M175.5 261.5 q2.3 18.5 18.9 37.0" fill="none" stroke="#bfb894" stroke-width="1.4" stroke-opacity="0.55" stroke-linecap="round"/><path d="M-45.3 -18.0 q2.0 16.3 16.6 32.6" fill="none" stroke="#d3cdac" stroke-width="2.1" stroke-opacity="0.55" stroke-linecap="round"/><path d="M-45.3 123.0 q2.0 16.3 16.6 32.6" fill="none" stroke="#d3cdac" stroke-width="2.1" stroke-opacity="0.55" stroke-linecap="round"/><path d="M-45.3 264.0 q2.0 16.3 16.6 32.6" fill="none" stroke="#d3cdac" stroke-width="2.1" stroke-opacity="0.55" stroke-linecap="round"/><path d="M66.7 -18.0 q2.0 16.3 16.6 32.6" fill="none" stroke="#d3cdac" stroke-width="2.1" stroke-opacity="0.55" stroke-linecap="round"/><path d="M66.7 123.0 q2.0 16.3 16.6 32.6" fill="none" stroke="#d3cdac" stroke-width="2.1" stroke-opacity="0.55" stroke-linecap="round"/><path d="M66.7 264.0 q2.0 16.3 16.6 32.6" fill="none" stroke="#d3cdac" stroke-width="2.1" stroke-opacity="0.55" stroke-linecap="round"/><path d="M178.7 -18.0 q2.0 16.3 16.6 32.6" fill="none" stroke="#d3cdac" stroke-width="2.1" stroke-opacity="0.55" stroke-linecap="round"/><path d="M178.7 123.0 q2.0 16.3 16.6 32.6" fill="none" stroke="#d3cdac" stroke-width="2.1" stroke-opacity="0.55" stroke-linecap="round"/><path d="M178.7 264.0 q2.0 16.3 16.6 32.6" fill="none" stroke="#d3cdac" stroke-width="2.1" stroke-opacity="0.55" stroke-linecap="round"/><path d="M-79.0 -70.1 q-2.5 23.2 -20.5 46.5" fill="none" stroke="#d3cdac" stroke-width="1.8" stroke-opacity="0.55" stroke-linecap="round"/><path d="M-79.0 70.9 q-2.5 23.2 -20.5 46.5" fill="none" stroke="#d3cdac" stroke-width="1.8" stroke-opacity="0.55" stroke-linecap="round"/><path d="M-79.0 211.9 q-2.5 23.2 -20.5 46.5" fill="none" stroke="#d3cdac" stroke-width="1.8" stroke-opacity="0.55" stroke-linecap="round"/><path d="M33.0 -70.1 q-2.5 23.2 -20.5 46.5" fill="none" stroke="#d3cdac" stroke-width="1.8" stroke-opacity="0.55" stroke-linecap="round"/><path d="M33.0 70.9 q-2.5 23.2 -20.5 46.5" fill="none" stroke="#d3cdac" stroke-width="1.8" stroke-opacity="0.55" stroke-linecap="round"/><path d="M33.0 211.9 q-2.5 23.2 -20.5 46.5" fill="none" stroke="#d3cdac" stroke-width="1.8" stroke-opacity="0.55" stroke-linecap="round"/><path d="M145.0 -70.1 q-2.5 23.2 -20.5 46.5" fill="none" stroke="#d3cdac" stroke-width="1.8" stroke-opacity="0.55" stroke-linecap="round"/><path d="M145.0 70.9 q-2.5 23.2 -20.5 46.5" fill="none" stroke="#d3cdac" stroke-width="1.8" stroke-opacity="0.55" stroke-linecap="round"/><path d="M145.0 211.9 q-2.5 23.2 -20.5 46.5" fill="none" stroke="#d3cdac" stroke-width="1.8" stroke-opacity="0.55" stroke-linecap="round"/><path d="M-75.8 -67.6 q-2.2 20.5 -18.0 40.9" fill="none" stroke="#bfb894" stroke-width="2.2" stroke-opacity="0.55" stroke-linecap="round"/><path d="M-75.8 73.4 q-2.2 20.5 -18.0 40.9" fill="none" stroke="#bfb894" stroke-width="2.2" stroke-opacity="0.55" stroke-linecap="round"/><path d="M-75.8 214.4 q-2.2 20.5 -18.0 40.9" fill="none" stroke="#bfb894" stroke-width="2.2" stroke-opacity="0.55" stroke-linecap="round"/><path d="M36.2 -67.6 q-2.2 20.5 -18.0 40.9" fill="none" stroke="#bfb894" stroke-width="2.2" stroke-opacity="0.55" stroke-linecap="round"/><path d="M36.2 73.4 q-2.2 20.5 -18.0 40.9" fill="none" stroke="#bfb894" stroke-width="2.2" stroke-opacity="0.55" stroke-linecap="round"/><path d="M36.2 214.4 q-2.2 20.5 -18.0 40.9" fill="none" stroke="#bfb894" stroke-width="2.2" stroke-opacity="0.55" stroke-linecap="round"/><path d="M148.2 -67.6 q-2.2 20.5 -18.0 40.9" fill="none" stroke="#bfb894" stroke-width="2.2" stroke-opacity="0.55" stroke-linecap="round"/><path d="M148.2 73.4 q-2.2 20.5 -18.0 40.9" fill="none" stroke="#bfb894" stroke-width="2.2" stroke-opacity="0.55" stroke-linecap="round"/><path d="M148.2 214.4 q-2.2 20.5 -18.0 40.9" fill="none" stroke="#bfb894" stroke-width="2.2" stroke-opacity="0.55" stroke-linecap="round"/><path d="M-77.3 -42.4 q-1.5 22.9 -12.5 45.8" fill="none" stroke="#c9c2a0" stroke-width="1.6" stroke-opacity="0.55" stroke-linecap="round"/><path d="M-77.3 98.6 q-1.5 22.9 -12.5 45.8" fill="none" stroke="#c9c2a0" stroke-width="1.6" stroke-opacity="0.55" stroke-linecap="round"/><path d="M-77.3 239.6 q-1.5 22.9 -12.5 45.8" fill="none" stroke="#c9c2a0" stroke-width="1.6" stroke-opacity="0.55" stroke-linecap="round"/><path d="M34.7 -42.4 q-1.5 22.9 -12.5 45.8" fill="none" stroke="#c9c2a0" stroke-width="1.6" stroke-opacity="0.55" stroke-linecap="round"/><path d="M34.7 98.6 q-1.5 22.9 -12.5 45.8" fill="none" stroke="#c9c2a0" stroke-width="1.6" stroke-opacity="0.55" stroke-linecap="round"/><path d="M34.7 239.6 q-1.5 22.9 -12.5 45.8" fill="none" stroke="#c9c2a0" stroke-width="1.6" stroke-opacity="0.55" stroke-linecap="round"/><path d="M146.7 -42.4 q-1.5 22.9 -12.5 45.8" fill="none" stroke="#c9c2a0" stroke-width="1.6" stroke-opacity="0.55" stroke-linecap="round"/><path d="M146.7 98.6 q-1.5 22.9 -12.5 45.8" fill="none" stroke="#c9c2a0" stroke-width="1.6" stroke-opacity="0.55" stroke-linecap="round"/><path d="M146.7 239.6 q-1.5 22.9 -12.5 45.8" fill="none" stroke="#c9c2a0" stroke-width="1.6" stroke-opacity="0.55" stroke-linecap="round"/><path d="M-74.1 -39.9 q-1.3 20.1 -11.0 40.3" fill="none" stroke="#bfb894" stroke-width="1.9" stroke-opacity="0.55" stroke-linecap="round"/><path d="M-74.1 101.1 q-1.3 20.1 -11.0 40.3" fill="none" stroke="#bfb894" stroke-width="1.9" stroke-opacity="0.55" stroke-linecap="round"/><path d="M-74.1 242.1 q-1.3 20.1 -11.0 40.3" fill="none" stroke="#bfb894" stroke-width="1.9" stroke-opacity="0.55" stroke-linecap="round"/><path d="M37.9 -39.9 q-1.3 20.1 -11.0 40.3" fill="none" stroke="#bfb894" stroke-width="1.9" stroke-opacity="0.55" stroke-linecap="round"/><path d="M37.9 101.1 q-1.3 20.1 -11.0 40.3" fill="none" stroke="#bfb894" stroke-width="1.9" stroke-opacity="0.55" stroke-linecap="round"/><path d="M37.9 242.1 q-1.3 20.1 -11.0 40.3" fill="none" stroke="#bfb894" stroke-width="1.9" stroke-opacity="0.55" stroke-linecap="round"/><path d="M149.9 -39.9 q-1.3 20.1 -11.0 40.3" fill="none" stroke="#bfb894" stroke-width="1.9" stroke-opacity="0.55" stroke-linecap="round"/><path d="M149.9 101.1 q-1.3 20.1 -11.0 40.3" fill="none" stroke="#bfb894" stroke-width="1.9" stroke-opacity="0.55" stroke-linecap="round"/><path d="M149.9 242.1 q-1.3 20.1 -11.0 40.3" fill="none" stroke="#bfb894" stroke-width="1.9" stroke-opacity="0.55" stroke-linecap="round"/><path d="M-70.9 -37.4 q-1.1 17.4 -9.5 34.8" fill="none" stroke="#bfb894" stroke-width="1.3" stroke-opacity="0.55" stroke-linecap="round"/><path d="M-70.9 103.6 q-1.1 17.4 -9.5 34.8" fill="none" stroke="#bfb894" stroke-width="1.3" stroke-opacity="0.55" stroke-linecap="round"/><path d="M-70.9 244.6 q-1.1 17.4 -9.5 34.8" fill="none" stroke="#bfb894" stroke-width="1.3" stroke-opacity="0.55" stroke-linecap="round"/><path d="M41.1 -37.4 q-1.1 17.4 -9.5 34.8" fill="none" stroke="#bfb894" stroke-width="1.3" stroke-opacity="0.55" stroke-linecap="round"/><path d="M41.1 103.6 q-1.1 17.4 -9.5 34.8" fill="none" stroke="#bfb894" stroke-width="1.3" stroke-opacity="0.55" stroke-linecap="round"/><path d="M41.1 244.6 q-1.1 17.4 -9.5 34.8" fill="none" stroke="#bfb894" stroke-width="1.3" stroke-opacity="0.55" stroke-linecap="round"/><path d="M153.1 -37.4 q-1.1 17.4 -9.5 34.8" fill="none" stroke="#bfb894" stroke-width="1.3" stroke-opacity="0.55" stroke-linecap="round"/><path d="M153.1 103.6 q-1.1 17.4 -9.5 34.8" fill="none" stroke="#bfb894" stroke-width="1.3" stroke-opacity="0.55" stroke-linecap="round"/><path d="M153.1 244.6 q-1.1 17.4 -9.5 34.8" fill="none" stroke="#bfb894" stroke-width="1.3" stroke-opacity="0.55" stroke-linecap="round"/></pattern><pattern id="pdl" patternUnits="userSpaceOnUse" width="2" height="2"><rect width="2" height="1" fill="#5e5a46" fill-opacity=".08"/></pattern><linearGradient id="gol" x1="0" y1="0" x2="0" y2="1"><stop offset="0" stop-color="#b1aa6c"/><stop offset=".5" stop-color="#a6a069"/><stop offset=".85" stop-color="#9d9866"/><stop offset="1" stop-color="#989365"/></linearGradient><pattern id="po" patternUnits="userSpaceOnUse" x="8" y="169" width="110" height="141"><rect width="110" height="141" fill="url(#gol)"/><path d="M-41.5 -36.4 q-4.2 26.4 -22.2 52.8" fill="none" stroke="#827c56" stroke-width="5.0" stroke-opacity="0.25" stroke-linecap="round"/><path d="M-41.5 104.6 q-4.2 26.4 -22.2 52.8" fill="none" stroke="#827c56" stroke-width="5.0" stroke-opacity="0.25" stroke-linecap="round"/><path d="M-41.5 245.6 q-4.2 26.4 -22.2 52.8" fill="none" stroke="#827c56" stroke-width="5.0" stroke-opacity="0.25" stroke-linecap="round"/><path d="M68.5 -36.4 q-4.2 26.4 -22.2 52.8" fill="none" stroke="#827c56" stroke-width="5.0" stroke-opacity="0.25" stroke-linecap="round"/><path d="M68.5 104.6 q-4.2 26.4 -22.2 52.8" fill="none" stroke="#827c56" stroke-width="5.0" stroke-opacity="0.25" stroke-linecap="round"/><path d="M68.5 245.6 q-4.2 26.4 -22.2 52.8" fill="none" stroke="#827c56" stroke-width="5.0" stroke-opacity="0.25" stroke-linecap="round"/><path d="M178.5 -36.4 q-4.2 26.4 -22.2 52.8" fill="none" stroke="#827c56" stroke-width="5.0" stroke-opacity="0.25" stroke-linecap="round"/><path d="M178.5 104.6 q-4.2 26.4 -22.2 52.8" fill="none" stroke="#827c56" stroke-width="5.0" stroke-opacity="0.25" stroke-linecap="round"/><path d="M178.5 245.6 q-4.2 26.4 -22.2 52.8" fill="none" stroke="#827c56" stroke-width="5.0" stroke-opacity="0.25" stroke-linecap="round"/><path d="M-51.7 -22.5 q-4.2 26.1 -21.9 52.2" fill="none" stroke="#c9be84" stroke-width="1.5" stroke-opacity="0.5" stroke-linecap="round"/><path d="M-51.7 118.5 q-4.2 26.1 -21.9 52.2" fill="none" stroke="#c9be84" stroke-width="1.5" stroke-opacity="0.5" stroke-linecap="round"/><path d="M-51.7 259.5 q-4.2 26.1 -21.9 52.2" fill="none" stroke="#c9be84" stroke-width="1.5" stroke-opacity="0.5" stroke-linecap="round"/><path d="M58.3 -22.5 q-4.2 26.1 -21.9 52.2" fill="none" stroke="#c9be84" stroke-width="1.5" stroke-opacity="0.5" stroke-linecap="round"/><path d="M58.3 118.5 q-4.2 26.1 -21.9 52.2" fill="none" stroke="#c9be84" stroke-width="1.5" stroke-opacity="0.5" stroke-linecap="round"/><path d="M58.3 259.5 q-4.2 26.1 -21.9 52.2" fill="none" stroke="#c9be84" stroke-width="1.5" stroke-opacity="0.5" stroke-linecap="round"/><path d="M168.3 -22.5 q-4.2 26.1 -21.9 52.2" fill="none" stroke="#c9be84" stroke-width="1.5" stroke-opacity="0.5" stroke-linecap="round"/><path d="M168.3 118.5 q-4.2 26.1 -21.9 52.2" fill="none" stroke="#c9be84" stroke-width="1.5" stroke-opacity="0.5" stroke-linecap="round"/><path d="M168.3 259.5 q-4.2 26.1 -21.9 52.2" fill="none" stroke="#c9be84" stroke-width="1.5" stroke-opacity="0.5" stroke-linecap="round"/><path d="M-10.9 -125.0 q-3.3 20.7 -17.4 41.4" fill="none" stroke="#8a845a" stroke-width="1.2" stroke-opacity="0.45" stroke-linecap="round"/><path d="M-10.9 16.0 q-3.3 20.7 -17.4 41.4" fill="none" stroke="#8a845a" stroke-width="1.2" stroke-opacity="0.45" stroke-linecap="round"/><path d="M-10.9 157.0 q-3.3 20.7 -17.4 41.4" fill="none" stroke="#8a845a" stroke-width="1.2" stroke-opacity="0.45" stroke-linecap="round"/><path d="M99.1 -125.0 q-3.3 20.7 -17.4 41.4" fill="none" stroke="#8a845a" stroke-width="1.2" stroke-opacity="0.45" stroke-linecap="round"/><path d="M99.1 16.0 q-3.3 20.7 -17.4 41.4" fill="none" stroke="#8a845a" stroke-width="1.2" stroke-opacity="0.45" stroke-linecap="round"/><path d="M99.1 157.0 q-3.3 20.7 -17.4 41.4" fill="none" stroke="#8a845a" stroke-width="1.2" stroke-opacity="0.45" stroke-linecap="round"/><path d="M209.1 -125.0 q-3.3 20.7 -17.4 41.4" fill="none" stroke="#8a845a" stroke-width="1.2" stroke-opacity="0.45" stroke-linecap="round"/><path d="M209.1 16.0 q-3.3 20.7 -17.4 41.4" fill="none" stroke="#8a845a" stroke-width="1.2" stroke-opacity="0.45" stroke-linecap="round"/><path d="M209.1 157.0 q-3.3 20.7 -17.4 41.4" fill="none" stroke="#8a845a" stroke-width="1.2" stroke-opacity="0.45" stroke-linecap="round"/><path d="M-98.8 -105.8 q-4.0 25.3 -21.2 50.6" fill="none" stroke="#8c865c" stroke-width="3.8" stroke-opacity="0.25" stroke-linecap="round"/><path d="M-98.8 35.2 q-4.0 25.3 -21.2 50.6" fill="none" stroke="#8c865c" stroke-width="3.8" stroke-opacity="0.25" stroke-linecap="round"/><path d="M-98.8 176.2 q-4.0 25.3 -21.2 50.6" fill="none" stroke="#8c865c" stroke-width="3.8" stroke-opacity="0.25" stroke-linecap="round"/><path d="M11.2 -105.8 q-4.0 25.3 -21.2 50.6" fill="none" stroke="#8c865c" stroke-width="3.8" stroke-opacity="0.25" stroke-linecap="round"/><path d="M11.2 35.2 q-4.0 25.3 -21.2 50.6" fill="none" stroke="#8c865c" stroke-width="3.8" stroke-opacity="0.25" stroke-linecap="round"/><path d="M11.2 176.2 q-4.0 25.3 -21.2 50.6" fill="none" stroke="#8c865c" stroke-width="3.8" stroke-opacity="0.25" stroke-linecap="round"/><path d="M121.2 -105.8 q-4.0 25.3 -21.2 50.6" fill="none" stroke="#8c865c" stroke-width="3.8" stroke-opacity="0.25" stroke-linecap="round"/><path d="M121.2 35.2 q-4.0 25.3 -21.2 50.6" fill="none" stroke="#8c865c" stroke-width="3.8" stroke-opacity="0.25" stroke-linecap="round"/><path d="M121.2 176.2 q-4.0 25.3 -21.2 50.6" fill="none" stroke="#8c865c" stroke-width="3.8" stroke-opacity="0.25" stroke-linecap="round"/><path d="M-9.2 -33.0 q-2.4 15.3 -12.8 30.6" fill="none" stroke="#c9be84" stroke-width="1.1" stroke-opacity="0.5" stroke-linecap="round"/><path d="M-9.2 108.0 q-2.4 15.3 -12.8 30.6" fill="none" stroke="#c9be84" stroke-width="1.1" stroke-opacity="0.5" stroke-linecap="round"/><path d="M-9.2 249.0 q-2.4 15.3 -12.8 30.6" fill="none" stroke="#c9be84" stroke-width="1.1" stroke-opacity="0.5" stroke-linecap="round"/><path d="M100.8 -33.0 q-2.4 15.3 -12.8 30.6" fill="none" stroke="#c9be84" stroke-width="1.1" stroke-opacity="0.5" stroke-linecap="round"/><path d="M100.8 108.0 q-2.4 15.3 -12.8 30.6" fill="none" stroke="#c9be84" stroke-width="1.1" stroke-opacity="0.5" stroke-linecap="round"/><path d="M100.8 249.0 q-2.4 15.3 -12.8 30.6" fill="none" stroke="#c9be84" stroke-width="1.1" stroke-opacity="0.5" stroke-linecap="round"/><path d="M210.8 -33.0 q-2.4 15.3 -12.8 30.6" fill="none" stroke="#c9be84" stroke-width="1.1" stroke-opacity="0.5" stroke-linecap="round"/><path d="M210.8 108.0 q-2.4 15.3 -12.8 30.6" fill="none" stroke="#c9be84" stroke-width="1.1" stroke-opacity="0.5" stroke-linecap="round"/><path d="M210.8 249.0 q-2.4 15.3 -12.8 30.6" fill="none" stroke="#c9be84" stroke-width="1.1" stroke-opacity="0.5" stroke-linecap="round"/><path d="M-42.1 -123.1 q-2.0 12.5 -10.5 25.1" fill="none" stroke="#8a845a" stroke-width="1.1" stroke-opacity="0.45" stroke-linecap="round"/><path d="M-42.1 17.9 q-2.0 12.5 -10.5 25.1" fill="none" stroke="#8a845a" stroke-width="1.1" stroke-opacity="0.45" stroke-linecap="round"/><path d="M-42.1 158.9 q-2.0 12.5 -10.5 25.1" fill="none" stroke="#8a845a" stroke-width="1.1" stroke-opacity="0.45" stroke-linecap="round"/><path d="M67.9 -123.1 q-2.0 12.5 -10.5 25.1" fill="none" stroke="#8a845a" stroke-width="1.1" stroke-opacity="0.45" stroke-linecap="round"/><path d="M67.9 17.9 q-2.0 12.5 -10.5 25.1" fill="none" stroke="#8a845a" stroke-width="1.1" stroke-opacity="0.45" stroke-linecap="round"/><path d="M67.9 158.9 q-2.0 12.5 -10.5 25.1" fill="none" stroke="#8a845a" stroke-width="1.1" stroke-opacity="0.45" stroke-linecap="round"/><path d="M177.9 -123.1 q-2.0 12.5 -10.5 25.1" fill="none" stroke="#8a845a" stroke-width="1.1" stroke-opacity="0.45" stroke-linecap="round"/><path d="M177.9 17.9 q-2.0 12.5 -10.5 25.1" fill="none" stroke="#8a845a" stroke-width="1.1" stroke-opacity="0.45" stroke-linecap="round"/><path d="M177.9 158.9 q-2.0 12.5 -10.5 25.1" fill="none" stroke="#8a845a" stroke-width="1.1" stroke-opacity="0.45" stroke-linecap="round"/><path d="M-86.3 -2.5 q-4.4 27.8 -23.3 55.5" fill="none" stroke="#8c865c" stroke-width="3.9" stroke-opacity="0.25" stroke-linecap="round"/><path d="M-86.3 138.5 q-4.4 27.8 -23.3 55.5" fill="none" stroke="#8c865c" stroke-width="3.9" stroke-opacity="0.25" stroke-linecap="round"/><path d="M-86.3 279.5 q-4.4 27.8 -23.3 55.5" fill="none" stroke="#8c865c" stroke-width="3.9" stroke-opacity="0.25" stroke-linecap="round"/><path d="M23.7 -2.5 q-4.4 27.8 -23.3 55.5" fill="none" stroke="#8c865c" stroke-width="3.9" stroke-opacity="0.25" stroke-linecap="round"/><path d="M23.7 138.5 q-4.4 27.8 -23.3 55.5" fill="none" stroke="#8c865c" stroke-width="3.9" stroke-opacity="0.25" stroke-linecap="round"/><path d="M23.7 279.5 q-4.4 27.8 -23.3 55.5" fill="none" stroke="#8c865c" stroke-width="3.9" stroke-opacity="0.25" stroke-linecap="round"/><path d="M133.7 -2.5 q-4.4 27.8 -23.3 55.5" fill="none" stroke="#8c865c" stroke-width="3.9" stroke-opacity="0.25" stroke-linecap="round"/><path d="M133.7 138.5 q-4.4 27.8 -23.3 55.5" fill="none" stroke="#8c865c" stroke-width="3.9" stroke-opacity="0.25" stroke-linecap="round"/><path d="M133.7 279.5 q-4.4 27.8 -23.3 55.5" fill="none" stroke="#8c865c" stroke-width="3.9" stroke-opacity="0.25" stroke-linecap="round"/><path d="M-88.1 -17.5 q-3.8 23.5 -19.7 46.9" fill="none" stroke="#c9be84" stroke-width="1.8" stroke-opacity="0.5" stroke-linecap="round"/><path d="M-88.1 123.5 q-3.8 23.5 -19.7 46.9" fill="none" stroke="#c9be84" stroke-width="1.8" stroke-opacity="0.5" stroke-linecap="round"/><path d="M-88.1 264.5 q-3.8 23.5 -19.7 46.9" fill="none" stroke="#c9be84" stroke-width="1.8" stroke-opacity="0.5" stroke-linecap="round"/><path d="M21.9 -17.5 q-3.8 23.5 -19.7 46.9" fill="none" stroke="#c9be84" stroke-width="1.8" stroke-opacity="0.5" stroke-linecap="round"/><path d="M21.9 123.5 q-3.8 23.5 -19.7 46.9" fill="none" stroke="#c9be84" stroke-width="1.8" stroke-opacity="0.5" stroke-linecap="round"/><path d="M21.9 264.5 q-3.8 23.5 -19.7 46.9" fill="none" stroke="#c9be84" stroke-width="1.8" stroke-opacity="0.5" stroke-linecap="round"/><path d="M131.9 -17.5 q-3.8 23.5 -19.7 46.9" fill="none" stroke="#c9be84" stroke-width="1.8" stroke-opacity="0.5" stroke-linecap="round"/><path d="M131.9 123.5 q-3.8 23.5 -19.7 46.9" fill="none" stroke="#c9be84" stroke-width="1.8" stroke-opacity="0.5" stroke-linecap="round"/><path d="M131.9 264.5 q-3.8 23.5 -19.7 46.9" fill="none" stroke="#c9be84" stroke-width="1.8" stroke-opacity="0.5" stroke-linecap="round"/><path d="M-34.0 -4.7 q-4.5 28.1 -23.6 56.3" fill="none" stroke="#7f7a54" stroke-width="1.0" stroke-opacity="0.45" stroke-linecap="round"/><path d="M-34.0 136.3 q-4.5 28.1 -23.6 56.3" fill="none" stroke="#7f7a54" stroke-width="1.0" stroke-opacity="0.45" stroke-linecap="round"/><path d="M-34.0 277.3 q-4.5 28.1 -23.6 56.3" fill="none" stroke="#7f7a54" stroke-width="1.0" stroke-opacity="0.45" stroke-linecap="round"/><path d="M76.0 -4.7 q-4.5 28.1 -23.6 56.3" fill="none" stroke="#7f7a54" stroke-width="1.0" stroke-opacity="0.45" stroke-linecap="round"/><path d="M76.0 136.3 q-4.5 28.1 -23.6 56.3" fill="none" stroke="#7f7a54" stroke-width="1.0" stroke-opacity="0.45" stroke-linecap="round"/><path d="M76.0 277.3 q-4.5 28.1 -23.6 56.3" fill="none" stroke="#7f7a54" stroke-width="1.0" stroke-opacity="0.45" stroke-linecap="round"/><path d="M186.0 -4.7 q-4.5 28.1 -23.6 56.3" fill="none" stroke="#7f7a54" stroke-width="1.0" stroke-opacity="0.45" stroke-linecap="round"/><path d="M186.0 136.3 q-4.5 28.1 -23.6 56.3" fill="none" stroke="#7f7a54" stroke-width="1.0" stroke-opacity="0.45" stroke-linecap="round"/><path d="M186.0 277.3 q-4.5 28.1 -23.6 56.3" fill="none" stroke="#7f7a54" stroke-width="1.0" stroke-opacity="0.45" stroke-linecap="round"/><path d="M-64.4 -9.1 q-2.7 17.1 -14.4 34.2" fill="none" stroke="#8c865c" stroke-width="3.9" stroke-opacity="0.25" stroke-linecap="round"/><path d="M-64.4 131.9 q-2.7 17.1 -14.4 34.2" fill="none" stroke="#8c865c" stroke-width="3.9" stroke-opacity="0.25" stroke-linecap="round"/><path d="M-64.4 272.9 q-2.7 17.1 -14.4 34.2" fill="none" stroke="#8c865c" stroke-width="3.9" stroke-opacity="0.25" stroke-linecap="round"/><path d="M45.6 -9.1 q-2.7 17.1 -14.4 34.2" fill="none" stroke="#8c865c" stroke-width="3.9" stroke-opacity="0.25" stroke-linecap="round"/><path d="M45.6 131.9 q-2.7 17.1 -14.4 34.2" fill="none" stroke="#8c865c" stroke-width="3.9" stroke-opacity="0.25" stroke-linecap="round"/><path d="M45.6 272.9 q-2.7 17.1 -14.4 34.2" fill="none" stroke="#8c865c" stroke-width="3.9" stroke-opacity="0.25" stroke-linecap="round"/><path d="M155.6 -9.1 q-2.7 17.1 -14.4 34.2" fill="none" stroke="#8c865c" stroke-width="3.9" stroke-opacity="0.25" stroke-linecap="round"/><path d="M155.6 131.9 q-2.7 17.1 -14.4 34.2" fill="none" stroke="#8c865c" stroke-width="3.9" stroke-opacity="0.25" stroke-linecap="round"/><path d="M155.6 272.9 q-2.7 17.1 -14.4 34.2" fill="none" stroke="#8c865c" stroke-width="3.9" stroke-opacity="0.25" stroke-linecap="round"/><path d="M-43.7 -140.5 q-3.9 24.4 -20.5 48.7" fill="none" stroke="#c2b87e" stroke-width="1.1" stroke-opacity="0.5" stroke-linecap="round"/><path d="M-43.7 0.5 q-3.9 24.4 -20.5 48.7" fill="none" stroke="#c2b87e" stroke-width="1.1" stroke-opacity="0.5" stroke-linecap="round"/><path d="M-43.7 141.5 q-3.9 24.4 -20.5 48.7" fill="none" stroke="#c2b87e" stroke-width="1.1" stroke-opacity="0.5" stroke-linecap="round"/><path d="M66.3 -140.5 q-3.9 24.4 -20.5 48.7" fill="none" stroke="#c2b87e" stroke-width="1.1" stroke-opacity="0.5" stroke-linecap="round"/><path d="M66.3 0.5 q-3.9 24.4 -20.5 48.7" fill="none" stroke="#c2b87e" stroke-width="1.1" stroke-opacity="0.5" stroke-linecap="round"/><path d="M66.3 141.5 q-3.9 24.4 -20.5 48.7" fill="none" stroke="#c2b87e" stroke-width="1.1" stroke-opacity="0.5" stroke-linecap="round"/><path d="M176.3 -140.5 q-3.9 24.4 -20.5 48.7" fill="none" stroke="#c2b87e" stroke-width="1.1" stroke-opacity="0.5" stroke-linecap="round"/><path d="M176.3 0.5 q-3.9 24.4 -20.5 48.7" fill="none" stroke="#c2b87e" stroke-width="1.1" stroke-opacity="0.5" stroke-linecap="round"/><path d="M176.3 141.5 q-3.9 24.4 -20.5 48.7" fill="none" stroke="#c2b87e" stroke-width="1.1" stroke-opacity="0.5" stroke-linecap="round"/><path d="M-70.9 -97.8 q-3.9 24.7 -20.7 49.4" fill="none" stroke="#8a845a" stroke-width="1.3" stroke-opacity="0.45" stroke-linecap="round"/><path d="M-70.9 43.2 q-3.9 24.7 -20.7 49.4" fill="none" stroke="#8a845a" stroke-width="1.3" stroke-opacity="0.45" stroke-linecap="round"/><path d="M-70.9 184.2 q-3.9 24.7 -20.7 49.4" fill="none" stroke="#8a845a" stroke-width="1.3" stroke-opacity="0.45" stroke-linecap="round"/><path d="M39.1 -97.8 q-3.9 24.7 -20.7 49.4" fill="none" stroke="#8a845a" stroke-width="1.3" stroke-opacity="0.45" stroke-linecap="round"/><path d="M39.1 43.2 q-3.9 24.7 -20.7 49.4" fill="none" stroke="#8a845a" stroke-width="1.3" stroke-opacity="0.45" stroke-linecap="round"/><path d="M39.1 184.2 q-3.9 24.7 -20.7 49.4" fill="none" stroke="#8a845a" stroke-width="1.3" stroke-opacity="0.45" stroke-linecap="round"/><path d="M149.1 -97.8 q-3.9 24.7 -20.7 49.4" fill="none" stroke="#8a845a" stroke-width="1.3" stroke-opacity="0.45" stroke-linecap="round"/><path d="M149.1 43.2 q-3.9 24.7 -20.7 49.4" fill="none" stroke="#8a845a" stroke-width="1.3" stroke-opacity="0.45" stroke-linecap="round"/><path d="M149.1 184.2 q-3.9 24.7 -20.7 49.4" fill="none" stroke="#8a845a" stroke-width="1.3" stroke-opacity="0.45" stroke-linecap="round"/><path d="M-32.5 -133.0 q-4.7 29.6 -24.8 59.1" fill="none" stroke="#87815a" stroke-width="5.8" stroke-opacity="0.25" stroke-linecap="round"/><path d="M-32.5 8.0 q-4.7 29.6 -24.8 59.1" fill="none" stroke="#87815a" stroke-width="5.8" stroke-opacity="0.25" stroke-linecap="round"/><path d="M-32.5 149.0 q-4.7 29.6 -24.8 59.1" fill="none" stroke="#87815a" stroke-width="5.8" stroke-opacity="0.25" stroke-linecap="round"/><path d="M77.5 -133.0 q-4.7 29.6 -24.8 59.1" fill="none" stroke="#87815a" stroke-width="5.8" stroke-opacity="0.25" stroke-linecap="round"/><path d="M77.5 8.0 q-4.7 29.6 -24.8 59.1" fill="none" stroke="#87815a" stroke-width="5.8" stroke-opacity="0.25" stroke-linecap="round"/><path d="M77.5 149.0 q-4.7 29.6 -24.8 59.1" fill="none" stroke="#87815a" stroke-width="5.8" stroke-opacity="0.25" stroke-linecap="round"/><path d="M187.5 -133.0 q-4.7 29.6 -24.8 59.1" fill="none" stroke="#87815a" stroke-width="5.8" stroke-opacity="0.25" stroke-linecap="round"/><path d="M187.5 8.0 q-4.7 29.6 -24.8 59.1" fill="none" stroke="#87815a" stroke-width="5.8" stroke-opacity="0.25" stroke-linecap="round"/><path d="M187.5 149.0 q-4.7 29.6 -24.8 59.1" fill="none" stroke="#87815a" stroke-width="5.8" stroke-opacity="0.25" stroke-linecap="round"/><path d="M-70.7 -84.0 q-3.5 22.1 -18.6 44.2" fill="none" stroke="#c2b87e" stroke-width="1.3" stroke-opacity="0.5" stroke-linecap="round"/><path d="M-70.7 57.0 q-3.5 22.1 -18.6 44.2" fill="none" stroke="#c2b87e" stroke-width="1.3" stroke-opacity="0.5" stroke-linecap="round"/><path d="M-70.7 198.0 q-3.5 22.1 -18.6 44.2" fill="none" stroke="#c2b87e" stroke-width="1.3" stroke-opacity="0.5" stroke-linecap="round"/><path d="M39.3 -84.0 q-3.5 22.1 -18.6 44.2" fill="none" stroke="#c2b87e" stroke-width="1.3" stroke-opacity="0.5" stroke-linecap="round"/><path d="M39.3 57.0 q-3.5 22.1 -18.6 44.2" fill="none" stroke="#c2b87e" stroke-width="1.3" stroke-opacity="0.5" stroke-linecap="round"/><path d="M39.3 198.0 q-3.5 22.1 -18.6 44.2" fill="none" stroke="#c2b87e" stroke-width="1.3" stroke-opacity="0.5" stroke-linecap="round"/><path d="M149.3 -84.0 q-3.5 22.1 -18.6 44.2" fill="none" stroke="#c2b87e" stroke-width="1.3" stroke-opacity="0.5" stroke-linecap="round"/><path d="M149.3 57.0 q-3.5 22.1 -18.6 44.2" fill="none" stroke="#c2b87e" stroke-width="1.3" stroke-opacity="0.5" stroke-linecap="round"/><path d="M149.3 198.0 q-3.5 22.1 -18.6 44.2" fill="none" stroke="#c2b87e" stroke-width="1.3" stroke-opacity="0.5" stroke-linecap="round"/><path d="M-46.4 -139.7 q-2.1 13.3 -11.2 26.6" fill="none" stroke="#8a845a" stroke-width="1.4" stroke-opacity="0.45" stroke-linecap="round"/><path d="M-46.4 1.3 q-2.1 13.3 -11.2 26.6" fill="none" stroke="#8a845a" stroke-width="1.4" stroke-opacity="0.45" stroke-linecap="round"/><path d="M-46.4 142.3 q-2.1 13.3 -11.2 26.6" fill="none" stroke="#8a845a" stroke-width="1.4" stroke-opacity="0.45" stroke-linecap="round"/><path d="M63.6 -139.7 q-2.1 13.3 -11.2 26.6" fill="none" stroke="#8a845a" stroke-width="1.4" stroke-opacity="0.45" stroke-linecap="round"/><path d="M63.6 1.3 q-2.1 13.3 -11.2 26.6" fill="none" stroke="#8a845a" stroke-width="1.4" stroke-opacity="0.45" stroke-linecap="round"/><path d="M63.6 142.3 q-2.1 13.3 -11.2 26.6" fill="none" stroke="#8a845a" stroke-width="1.4" stroke-opacity="0.45" stroke-linecap="round"/><path d="M173.6 -139.7 q-2.1 13.3 -11.2 26.6" fill="none" stroke="#8a845a" stroke-width="1.4" stroke-opacity="0.45" stroke-linecap="round"/><path d="M173.6 1.3 q-2.1 13.3 -11.2 26.6" fill="none" stroke="#8a845a" stroke-width="1.4" stroke-opacity="0.45" stroke-linecap="round"/><path d="M173.6 142.3 q-2.1 13.3 -11.2 26.6" fill="none" stroke="#8a845a" stroke-width="1.4" stroke-opacity="0.45" stroke-linecap="round"/><path d="M-5.0 -124.2 q-2.7 16.8 -14.1 33.6" fill="none" stroke="#8c865c" stroke-width="4.0" stroke-opacity="0.25" stroke-linecap="round"/><path d="M-5.0 16.8 q-2.7 16.8 -14.1 33.6" fill="none" stroke="#8c865c" stroke-width="4.0" stroke-opacity="0.25" stroke-linecap="round"/><path d="M-5.0 157.8 q-2.7 16.8 -14.1 33.6" fill="none" stroke="#8c865c" stroke-width="4.0" stroke-opacity="0.25" stroke-linecap="round"/><path d="M105.0 -124.2 q-2.7 16.8 -14.1 33.6" fill="none" stroke="#8c865c" stroke-width="4.0" stroke-opacity="0.25" stroke-linecap="round"/><path d="M105.0 16.8 q-2.7 16.8 -14.1 33.6" fill="none" stroke="#8c865c" stroke-width="4.0" stroke-opacity="0.25" stroke-linecap="round"/><path d="M105.0 157.8 q-2.7 16.8 -14.1 33.6" fill="none" stroke="#8c865c" stroke-width="4.0" stroke-opacity="0.25" stroke-linecap="round"/><path d="M215.0 -124.2 q-2.7 16.8 -14.1 33.6" fill="none" stroke="#8c865c" stroke-width="4.0" stroke-opacity="0.25" stroke-linecap="round"/><path d="M215.0 16.8 q-2.7 16.8 -14.1 33.6" fill="none" stroke="#8c865c" stroke-width="4.0" stroke-opacity="0.25" stroke-linecap="round"/><path d="M215.0 157.8 q-2.7 16.8 -14.1 33.6" fill="none" stroke="#8c865c" stroke-width="4.0" stroke-opacity="0.25" stroke-linecap="round"/><path d="M-71.0 -67.0 q-4.2 26.1 -21.9 52.1" fill="none" stroke="#c9be84" stroke-width="1.5" stroke-opacity="0.5" stroke-linecap="round"/><path d="M-71.0 74.0 q-4.2 26.1 -21.9 52.1" fill="none" stroke="#c9be84" stroke-width="1.5" stroke-opacity="0.5" stroke-linecap="round"/><path d="M-71.0 215.0 q-4.2 26.1 -21.9 52.1" fill="none" stroke="#c9be84" stroke-width="1.5" stroke-opacity="0.5" stroke-linecap="round"/><path d="M39.0 -67.0 q-4.2 26.1 -21.9 52.1" fill="none" stroke="#c9be84" stroke-width="1.5" stroke-opacity="0.5" stroke-linecap="round"/><path d="M39.0 74.0 q-4.2 26.1 -21.9 52.1" fill="none" stroke="#c9be84" stroke-width="1.5" stroke-opacity="0.5" stroke-linecap="round"/><path d="M39.0 215.0 q-4.2 26.1 -21.9 52.1" fill="none" stroke="#c9be84" stroke-width="1.5" stroke-opacity="0.5" stroke-linecap="round"/><path d="M149.0 -67.0 q-4.2 26.1 -21.9 52.1" fill="none" stroke="#c9be84" stroke-width="1.5" stroke-opacity="0.5" stroke-linecap="round"/><path d="M149.0 74.0 q-4.2 26.1 -21.9 52.1" fill="none" stroke="#c9be84" stroke-width="1.5" stroke-opacity="0.5" stroke-linecap="round"/><path d="M149.0 215.0 q-4.2 26.1 -21.9 52.1" fill="none" stroke="#c9be84" stroke-width="1.5" stroke-opacity="0.5" stroke-linecap="round"/><path d="M-24.1 -89.2 q-2.8 17.7 -14.8 35.4" fill="none" stroke="#7f7a54" stroke-width="1.6" stroke-opacity="0.45" stroke-linecap="round"/><path d="M-24.1 51.8 q-2.8 17.7 -14.8 35.4" fill="none" stroke="#7f7a54" stroke-width="1.6" stroke-opacity="0.45" stroke-linecap="round"/><path d="M-24.1 192.8 q-2.8 17.7 -14.8 35.4" fill="none" stroke="#7f7a54" stroke-width="1.6" stroke-opacity="0.45" stroke-linecap="round"/><path d="M85.9 -89.2 q-2.8 17.7 -14.8 35.4" fill="none" stroke="#7f7a54" stroke-width="1.6" stroke-opacity="0.45" stroke-linecap="round"/><path d="M85.9 51.8 q-2.8 17.7 -14.8 35.4" fill="none" stroke="#7f7a54" stroke-width="1.6" stroke-opacity="0.45" stroke-linecap="round"/><path d="M85.9 192.8 q-2.8 17.7 -14.8 35.4" fill="none" stroke="#7f7a54" stroke-width="1.6" stroke-opacity="0.45" stroke-linecap="round"/><path d="M195.9 -89.2 q-2.8 17.7 -14.8 35.4" fill="none" stroke="#7f7a54" stroke-width="1.6" stroke-opacity="0.45" stroke-linecap="round"/><path d="M195.9 51.8 q-2.8 17.7 -14.8 35.4" fill="none" stroke="#7f7a54" stroke-width="1.6" stroke-opacity="0.45" stroke-linecap="round"/><path d="M195.9 192.8 q-2.8 17.7 -14.8 35.4" fill="none" stroke="#7f7a54" stroke-width="1.6" stroke-opacity="0.45" stroke-linecap="round"/><path d="M-100.0 -93.0 q-3.7 23.2 -19.5 46.4" fill="none" stroke="#87815a" stroke-width="4.0" stroke-opacity="0.25" stroke-linecap="round"/><path d="M-100.0 48.0 q-3.7 23.2 -19.5 46.4" fill="none" stroke="#87815a" stroke-width="4.0" stroke-opacity="0.25" stroke-linecap="round"/><path d="M-100.0 189.0 q-3.7 23.2 -19.5 46.4" fill="none" stroke="#87815a" stroke-width="4.0" stroke-opacity="0.25" stroke-linecap="round"/><path d="M10.0 -93.0 q-3.7 23.2 -19.5 46.4" fill="none" stroke="#87815a" stroke-width="4.0" stroke-opacity="0.25" stroke-linecap="round"/><path d="M10.0 48.0 q-3.7 23.2 -19.5 46.4" fill="none" stroke="#87815a" stroke-width="4.0" stroke-opacity="0.25" stroke-linecap="round"/><path d="M10.0 189.0 q-3.7 23.2 -19.5 46.4" fill="none" stroke="#87815a" stroke-width="4.0" stroke-opacity="0.25" stroke-linecap="round"/><path d="M120.0 -93.0 q-3.7 23.2 -19.5 46.4" fill="none" stroke="#87815a" stroke-width="4.0" stroke-opacity="0.25" stroke-linecap="round"/><path d="M120.0 48.0 q-3.7 23.2 -19.5 46.4" fill="none" stroke="#87815a" stroke-width="4.0" stroke-opacity="0.25" stroke-linecap="round"/><path d="M120.0 189.0 q-3.7 23.2 -19.5 46.4" fill="none" stroke="#87815a" stroke-width="4.0" stroke-opacity="0.25" stroke-linecap="round"/><path d="M-8.3 -64.1 q-2.9 18.0 -15.1 35.9" fill="none" stroke="#c2b87e" stroke-width="1.2" stroke-opacity="0.5" stroke-linecap="round"/><path d="M-8.3 76.9 q-2.9 18.0 -15.1 35.9" fill="none" stroke="#c2b87e" stroke-width="1.2" stroke-opacity="0.5" stroke-linecap="round"/><path d="M-8.3 217.9 q-2.9 18.0 -15.1 35.9" fill="none" stroke="#c2b87e" stroke-width="1.2" stroke-opacity="0.5" stroke-linecap="round"/><path d="M101.7 -64.1 q-2.9 18.0 -15.1 35.9" fill="none" stroke="#c2b87e" stroke-width="1.2" stroke-opacity="0.5" stroke-linecap="round"/><path d="M101.7 76.9 q-2.9 18.0 -15.1 35.9" fill="none" stroke="#c2b87e" stroke-width="1.2" stroke-opacity="0.5" stroke-linecap="round"/><path d="M101.7 217.9 q-2.9 18.0 -15.1 35.9" fill="none" stroke="#c2b87e" stroke-width="1.2" stroke-opacity="0.5" stroke-linecap="round"/><path d="M211.7 -64.1 q-2.9 18.0 -15.1 35.9" fill="none" stroke="#c2b87e" stroke-width="1.2" stroke-opacity="0.5" stroke-linecap="round"/><path d="M211.7 76.9 q-2.9 18.0 -15.1 35.9" fill="none" stroke="#c2b87e" stroke-width="1.2" stroke-opacity="0.5" stroke-linecap="round"/><path d="M211.7 217.9 q-2.9 18.0 -15.1 35.9" fill="none" stroke="#c2b87e" stroke-width="1.2" stroke-opacity="0.5" stroke-linecap="round"/><path d="M-22.1 -52.6 q-4.0 25.1 -21.1 50.2" fill="none" stroke="#7f7a54" stroke-width="1.6" stroke-opacity="0.45" stroke-linecap="round"/><path d="M-22.1 88.4 q-4.0 25.1 -21.1 50.2" fill="none" stroke="#7f7a54" stroke-width="1.6" stroke-opacity="0.45" stroke-linecap="round"/><path d="M-22.1 229.4 q-4.0 25.1 -21.1 50.2" fill="none" stroke="#7f7a54" stroke-width="1.6" stroke-opacity="0.45" stroke-linecap="round"/><path d="M87.9 -52.6 q-4.0 25.1 -21.1 50.2" fill="none" stroke="#7f7a54" stroke-width="1.6" stroke-opacity="0.45" stroke-linecap="round"/><path d="M87.9 88.4 q-4.0 25.1 -21.1 50.2" fill="none" stroke="#7f7a54" stroke-width="1.6" stroke-opacity="0.45" stroke-linecap="round"/><path d="M87.9 229.4 q-4.0 25.1 -21.1 50.2" fill="none" stroke="#7f7a54" stroke-width="1.6" stroke-opacity="0.45" stroke-linecap="round"/><path d="M197.9 -52.6 q-4.0 25.1 -21.1 50.2" fill="none" stroke="#7f7a54" stroke-width="1.6" stroke-opacity="0.45" stroke-linecap="round"/><path d="M197.9 88.4 q-4.0 25.1 -21.1 50.2" fill="none" stroke="#7f7a54" stroke-width="1.6" stroke-opacity="0.45" stroke-linecap="round"/><path d="M197.9 229.4 q-4.0 25.1 -21.1 50.2" fill="none" stroke="#7f7a54" stroke-width="1.6" stroke-opacity="0.45" stroke-linecap="round"/><path d="M-92.2 -134.2 q-4.8 29.8 -25.0 59.5" fill="none" stroke="#827c56" stroke-width="5.8" stroke-opacity="0.25" stroke-linecap="round"/><path d="M-92.2 6.8 q-4.8 29.8 -25.0 59.5" fill="none" stroke="#827c56" stroke-width="5.8" stroke-opacity="0.25" stroke-linecap="round"/><path d="M-92.2 147.8 q-4.8 29.8 -25.0 59.5" fill="none" stroke="#827c56" stroke-width="5.8" stroke-opacity="0.25" stroke-linecap="round"/><path d="M17.8 -134.2 q-4.8 29.8 -25.0 59.5" fill="none" stroke="#827c56" stroke-width="5.8" stroke-opacity="0.25" stroke-linecap="round"/><path d="M17.8 6.8 q-4.8 29.8 -25.0 59.5" fill="none" stroke="#827c56" stroke-width="5.8" stroke-opacity="0.25" stroke-linecap="round"/><path d="M17.8 147.8 q-4.8 29.8 -25.0 59.5" fill="none" stroke="#827c56" stroke-width="5.8" stroke-opacity="0.25" stroke-linecap="round"/><path d="M127.8 -134.2 q-4.8 29.8 -25.0 59.5" fill="none" stroke="#827c56" stroke-width="5.8" stroke-opacity="0.25" stroke-linecap="round"/><path d="M127.8 6.8 q-4.8 29.8 -25.0 59.5" fill="none" stroke="#827c56" stroke-width="5.8" stroke-opacity="0.25" stroke-linecap="round"/><path d="M127.8 147.8 q-4.8 29.8 -25.0 59.5" fill="none" stroke="#827c56" stroke-width="5.8" stroke-opacity="0.25" stroke-linecap="round"/><path d="M-106.5 -36.6 q-3.0 18.5 -15.6 37.0" fill="none" stroke="#c2b87e" stroke-width="1.4" stroke-opacity="0.5" stroke-linecap="round"/><path d="M-106.5 104.4 q-3.0 18.5 -15.6 37.0" fill="none" stroke="#c2b87e" stroke-width="1.4" stroke-opacity="0.5" stroke-linecap="round"/><path d="M-106.5 245.4 q-3.0 18.5 -15.6 37.0" fill="none" stroke="#c2b87e" stroke-width="1.4" stroke-opacity="0.5" stroke-linecap="round"/><path d="M3.5 -36.6 q-3.0 18.5 -15.6 37.0" fill="none" stroke="#c2b87e" stroke-width="1.4" stroke-opacity="0.5" stroke-linecap="round"/><path d="M3.5 104.4 q-3.0 18.5 -15.6 37.0" fill="none" stroke="#c2b87e" stroke-width="1.4" stroke-opacity="0.5" stroke-linecap="round"/><path d="M3.5 245.4 q-3.0 18.5 -15.6 37.0" fill="none" stroke="#c2b87e" stroke-width="1.4" stroke-opacity="0.5" stroke-linecap="round"/><path d="M113.5 -36.6 q-3.0 18.5 -15.6 37.0" fill="none" stroke="#c2b87e" stroke-width="1.4" stroke-opacity="0.5" stroke-linecap="round"/><path d="M113.5 104.4 q-3.0 18.5 -15.6 37.0" fill="none" stroke="#c2b87e" stroke-width="1.4" stroke-opacity="0.5" stroke-linecap="round"/><path d="M113.5 245.4 q-3.0 18.5 -15.6 37.0" fill="none" stroke="#c2b87e" stroke-width="1.4" stroke-opacity="0.5" stroke-linecap="round"/><path d="M-63.6 -133.1 q-4.6 28.5 -24.0 57.1" fill="none" stroke="#8a845a" stroke-width="1.5" stroke-opacity="0.45" stroke-linecap="round"/><path d="M-63.6 7.9 q-4.6 28.5 -24.0 57.1" fill="none" stroke="#8a845a" stroke-width="1.5" stroke-opacity="0.45" stroke-linecap="round"/><path d="M-63.6 148.9 q-4.6 28.5 -24.0 57.1" fill="none" stroke="#8a845a" stroke-width="1.5" stroke-opacity="0.45" stroke-linecap="round"/><path d="M46.4 -133.1 q-4.6 28.5 -24.0 57.1" fill="none" stroke="#8a845a" stroke-width="1.5" stroke-opacity="0.45" stroke-linecap="round"/><path d="M46.4 7.9 q-4.6 28.5 -24.0 57.1" fill="none" stroke="#8a845a" stroke-width="1.5" stroke-opacity="0.45" stroke-linecap="round"/><path d="M46.4 148.9 q-4.6 28.5 -24.0 57.1" fill="none" stroke="#8a845a" stroke-width="1.5" stroke-opacity="0.45" stroke-linecap="round"/><path d="M156.4 -133.1 q-4.6 28.5 -24.0 57.1" fill="none" stroke="#8a845a" stroke-width="1.5" stroke-opacity="0.45" stroke-linecap="round"/><path d="M156.4 7.9 q-4.6 28.5 -24.0 57.1" fill="none" stroke="#8a845a" stroke-width="1.5" stroke-opacity="0.45" stroke-linecap="round"/><path d="M156.4 148.9 q-4.6 28.5 -24.0 57.1" fill="none" stroke="#8a845a" stroke-width="1.5" stroke-opacity="0.45" stroke-linecap="round"/><path d="M-73.2 -111.8 q-4.7 29.7 -24.9 59.3" fill="none" stroke="#827c56" stroke-width="5.8" stroke-opacity="0.25" stroke-linecap="round"/><path d="M-73.2 29.2 q-4.7 29.7 -24.9 59.3" fill="none" stroke="#827c56" stroke-width="5.8" stroke-opacity="0.25" stroke-linecap="round"/><path d="M-73.2 170.2 q-4.7 29.7 -24.9 59.3" fill="none" stroke="#827c56" stroke-width="5.8" stroke-opacity="0.25" stroke-linecap="round"/><path d="M36.8 -111.8 q-4.7 29.7 -24.9 59.3" fill="none" stroke="#827c56" stroke-width="5.8" stroke-opacity="0.25" stroke-linecap="round"/><path d="M36.8 29.2 q-4.7 29.7 -24.9 59.3" fill="none" stroke="#827c56" stroke-width="5.8" stroke-opacity="0.25" stroke-linecap="round"/><path d="M36.8 170.2 q-4.7 29.7 -24.9 59.3" fill="none" stroke="#827c56" stroke-width="5.8" stroke-opacity="0.25" stroke-linecap="round"/><path d="M146.8 -111.8 q-4.7 29.7 -24.9 59.3" fill="none" stroke="#827c56" stroke-width="5.8" stroke-opacity="0.25" stroke-linecap="round"/><path d="M146.8 29.2 q-4.7 29.7 -24.9 59.3" fill="none" stroke="#827c56" stroke-width="5.8" stroke-opacity="0.25" stroke-linecap="round"/><path d="M146.8 170.2 q-4.7 29.7 -24.9 59.3" fill="none" stroke="#827c56" stroke-width="5.8" stroke-opacity="0.25" stroke-linecap="round"/><path d="M-40.7 -29.9 q-2.3 14.4 -12.1 28.7" fill="none" stroke="#c2b87e" stroke-width="1.3" stroke-opacity="0.5" stroke-linecap="round"/><path d="M-40.7 111.1 q-2.3 14.4 -12.1 28.7" fill="none" stroke="#c2b87e" stroke-width="1.3" stroke-opacity="0.5" stroke-linecap="round"/><path d="M-40.7 252.1 q-2.3 14.4 -12.1 28.7" fill="none" stroke="#c2b87e" stroke-width="1.3" stroke-opacity="0.5" stroke-linecap="round"/><path d="M69.3 -29.9 q-2.3 14.4 -12.1 28.7" fill="none" stroke="#c2b87e" stroke-width="1.3" stroke-opacity="0.5" stroke-linecap="round"/><path d="M69.3 111.1 q-2.3 14.4 -12.1 28.7" fill="none" stroke="#c2b87e" stroke-width="1.3" stroke-opacity="0.5" stroke-linecap="round"/><path d="M69.3 252.1 q-2.3 14.4 -12.1 28.7" fill="none" stroke="#c2b87e" stroke-width="1.3" stroke-opacity="0.5" stroke-linecap="round"/><path d="M179.3 -29.9 q-2.3 14.4 -12.1 28.7" fill="none" stroke="#c2b87e" stroke-width="1.3" stroke-opacity="0.5" stroke-linecap="round"/><path d="M179.3 111.1 q-2.3 14.4 -12.1 28.7" fill="none" stroke="#c2b87e" stroke-width="1.3" stroke-opacity="0.5" stroke-linecap="round"/><path d="M179.3 252.1 q-2.3 14.4 -12.1 28.7" fill="none" stroke="#c2b87e" stroke-width="1.3" stroke-opacity="0.5" stroke-linecap="round"/><path d="M-103.5 -81.7 q-2.4 15.0 -12.6 29.9" fill="none" stroke="#8a845a" stroke-width="1.6" stroke-opacity="0.45" stroke-linecap="round"/><path d="M-103.5 59.3 q-2.4 15.0 -12.6 29.9" fill="none" stroke="#8a845a" stroke-width="1.6" stroke-opacity="0.45" stroke-linecap="round"/><path d="M-103.5 200.3 q-2.4 15.0 -12.6 29.9" fill="none" stroke="#8a845a" stroke-width="1.6" stroke-opacity="0.45" stroke-linecap="round"/><path d="M6.5 -81.7 q-2.4 15.0 -12.6 29.9" fill="none" stroke="#8a845a" stroke-width="1.6" stroke-opacity="0.45" stroke-linecap="round"/><path d="M6.5 59.3 q-2.4 15.0 -12.6 29.9" fill="none" stroke="#8a845a" stroke-width="1.6" stroke-opacity="0.45" stroke-linecap="round"/><path d="M6.5 200.3 q-2.4 15.0 -12.6 29.9" fill="none" stroke="#8a845a" stroke-width="1.6" stroke-opacity="0.45" stroke-linecap="round"/><path d="M116.5 -81.7 q-2.4 15.0 -12.6 29.9" fill="none" stroke="#8a845a" stroke-width="1.6" stroke-opacity="0.45" stroke-linecap="round"/><path d="M116.5 59.3 q-2.4 15.0 -12.6 29.9" fill="none" stroke="#8a845a" stroke-width="1.6" stroke-opacity="0.45" stroke-linecap="round"/><path d="M116.5 200.3 q-2.4 15.0 -12.6 29.9" fill="none" stroke="#8a845a" stroke-width="1.6" stroke-opacity="0.45" stroke-linecap="round"/><path d="M-60.1 -72.2 q-4.0 25.3 -21.2 50.5" fill="none" stroke="#8c865c" stroke-width="3.8" stroke-opacity="0.25" stroke-linecap="round"/><path d="M-60.1 68.8 q-4.0 25.3 -21.2 50.5" fill="none" stroke="#8c865c" stroke-width="3.8" stroke-opacity="0.25" stroke-linecap="round"/><path d="M-60.1 209.8 q-4.0 25.3 -21.2 50.5" fill="none" stroke="#8c865c" stroke-width="3.8" stroke-opacity="0.25" stroke-linecap="round"/><path d="M49.9 -72.2 q-4.0 25.3 -21.2 50.5" fill="none" stroke="#8c865c" stroke-width="3.8" stroke-opacity="0.25" stroke-linecap="round"/><path d="M49.9 68.8 q-4.0 25.3 -21.2 50.5" fill="none" stroke="#8c865c" stroke-width="3.8" stroke-opacity="0.25" stroke-linecap="round"/><path d="M49.9 209.8 q-4.0 25.3 -21.2 50.5" fill="none" stroke="#8c865c" stroke-width="3.8" stroke-opacity="0.25" stroke-linecap="round"/><path d="M159.9 -72.2 q-4.0 25.3 -21.2 50.5" fill="none" stroke="#8c865c" stroke-width="3.8" stroke-opacity="0.25" stroke-linecap="round"/><path d="M159.9 68.8 q-4.0 25.3 -21.2 50.5" fill="none" stroke="#8c865c" stroke-width="3.8" stroke-opacity="0.25" stroke-linecap="round"/><path d="M159.9 209.8 q-4.0 25.3 -21.2 50.5" fill="none" stroke="#8c865c" stroke-width="3.8" stroke-opacity="0.25" stroke-linecap="round"/><path d="M-58.3 -13.8 q-2.3 14.5 -12.2 28.9" fill="none" stroke="#d0c68c" stroke-width="1.8" stroke-opacity="0.5" stroke-linecap="round"/><path d="M-58.3 127.2 q-2.3 14.5 -12.2 28.9" fill="none" stroke="#d0c68c" stroke-width="1.8" stroke-opacity="0.5" stroke-linecap="round"/><path d="M-58.3 268.2 q-2.3 14.5 -12.2 28.9" fill="none" stroke="#d0c68c" stroke-width="1.8" stroke-opacity="0.5" stroke-linecap="round"/><path d="M51.7 -13.8 q-2.3 14.5 -12.2 28.9" fill="none" stroke="#d0c68c" stroke-width="1.8" stroke-opacity="0.5" stroke-linecap="round"/><path d="M51.7 127.2 q-2.3 14.5 -12.2 28.9" fill="none" stroke="#d0c68c" stroke-width="1.8" stroke-opacity="0.5" stroke-linecap="round"/><path d="M51.7 268.2 q-2.3 14.5 -12.2 28.9" fill="none" stroke="#d0c68c" stroke-width="1.8" stroke-opacity="0.5" stroke-linecap="round"/><path d="M161.7 -13.8 q-2.3 14.5 -12.2 28.9" fill="none" stroke="#d0c68c" stroke-width="1.8" stroke-opacity="0.5" stroke-linecap="round"/><path d="M161.7 127.2 q-2.3 14.5 -12.2 28.9" fill="none" stroke="#d0c68c" stroke-width="1.8" stroke-opacity="0.5" stroke-linecap="round"/><path d="M161.7 268.2 q-2.3 14.5 -12.2 28.9" fill="none" stroke="#d0c68c" stroke-width="1.8" stroke-opacity="0.5" stroke-linecap="round"/><path d="M-41.0 -70.6 q-2.9 18.4 -15.5 36.8" fill="none" stroke="#8a845a" stroke-width="1.3" stroke-opacity="0.45" stroke-linecap="round"/><path d="M-41.0 70.4 q-2.9 18.4 -15.5 36.8" fill="none" stroke="#8a845a" stroke-width="1.3" stroke-opacity="0.45" stroke-linecap="round"/><path d="M-41.0 211.4 q-2.9 18.4 -15.5 36.8" fill="none" stroke="#8a845a" stroke-width="1.3" stroke-opacity="0.45" stroke-linecap="round"/><path d="M69.0 -70.6 q-2.9 18.4 -15.5 36.8" fill="none" stroke="#8a845a" stroke-width="1.3" stroke-opacity="0.45" stroke-linecap="round"/><path d="M69.0 70.4 q-2.9 18.4 -15.5 36.8" fill="none" stroke="#8a845a" stroke-width="1.3" stroke-opacity="0.45" stroke-linecap="round"/><path d="M69.0 211.4 q-2.9 18.4 -15.5 36.8" fill="none" stroke="#8a845a" stroke-width="1.3" stroke-opacity="0.45" stroke-linecap="round"/><path d="M179.0 -70.6 q-2.9 18.4 -15.5 36.8" fill="none" stroke="#8a845a" stroke-width="1.3" stroke-opacity="0.45" stroke-linecap="round"/><path d="M179.0 70.4 q-2.9 18.4 -15.5 36.8" fill="none" stroke="#8a845a" stroke-width="1.3" stroke-opacity="0.45" stroke-linecap="round"/><path d="M179.0 211.4 q-2.9 18.4 -15.5 36.8" fill="none" stroke="#8a845a" stroke-width="1.3" stroke-opacity="0.45" stroke-linecap="round"/><path d="M-53.3 -63.7 q-3.4 21.3 -17.9 42.6" fill="none" stroke="#87815a" stroke-width="5.4" stroke-opacity="0.25" stroke-linecap="round"/><path d="M-53.3 77.3 q-3.4 21.3 -17.9 42.6" fill="none" stroke="#87815a" stroke-width="5.4" stroke-opacity="0.25" stroke-linecap="round"/><path d="M-53.3 218.3 q-3.4 21.3 -17.9 42.6" fill="none" stroke="#87815a" stroke-width="5.4" stroke-opacity="0.25" stroke-linecap="round"/><path d="M56.7 -63.7 q-3.4 21.3 -17.9 42.6" fill="none" stroke="#87815a" stroke-width="5.4" stroke-opacity="0.25" stroke-linecap="round"/><path d="M56.7 77.3 q-3.4 21.3 -17.9 42.6" fill="none" stroke="#87815a" stroke-width="5.4" stroke-opacity="0.25" stroke-linecap="round"/><path d="M56.7 218.3 q-3.4 21.3 -17.9 42.6" fill="none" stroke="#87815a" stroke-width="5.4" stroke-opacity="0.25" stroke-linecap="round"/><path d="M166.7 -63.7 q-3.4 21.3 -17.9 42.6" fill="none" stroke="#87815a" stroke-width="5.4" stroke-opacity="0.25" stroke-linecap="round"/><path d="M166.7 77.3 q-3.4 21.3 -17.9 42.6" fill="none" stroke="#87815a" stroke-width="5.4" stroke-opacity="0.25" stroke-linecap="round"/><path d="M166.7 218.3 q-3.4 21.3 -17.9 42.6" fill="none" stroke="#87815a" stroke-width="5.4" stroke-opacity="0.25" stroke-linecap="round"/><path d="M-24.8 -43.1 q-3.9 24.1 -20.3 48.2" fill="none" stroke="#c2b87e" stroke-width="1.3" stroke-opacity="0.5" stroke-linecap="round"/><path d="M-24.8 97.9 q-3.9 24.1 -20.3 48.2" fill="none" stroke="#c2b87e" stroke-width="1.3" stroke-opacity="0.5" stroke-linecap="round"/><path d="M-24.8 238.9 q-3.9 24.1 -20.3 48.2" fill="none" stroke="#c2b87e" stroke-width="1.3" stroke-opacity="0.5" stroke-linecap="round"/><path d="M85.2 -43.1 q-3.9 24.1 -20.3 48.2" fill="none" stroke="#c2b87e" stroke-width="1.3" stroke-opacity="0.5" stroke-linecap="round"/><path d="M85.2 97.9 q-3.9 24.1 -20.3 48.2" fill="none" stroke="#c2b87e" stroke-width="1.3" stroke-opacity="0.5" stroke-linecap="round"/><path d="M85.2 238.9 q-3.9 24.1 -20.3 48.2" fill="none" stroke="#c2b87e" stroke-width="1.3" stroke-opacity="0.5" stroke-linecap="round"/><path d="M195.2 -43.1 q-3.9 24.1 -20.3 48.2" fill="none" stroke="#c2b87e" stroke-width="1.3" stroke-opacity="0.5" stroke-linecap="round"/><path d="M195.2 97.9 q-3.9 24.1 -20.3 48.2" fill="none" stroke="#c2b87e" stroke-width="1.3" stroke-opacity="0.5" stroke-linecap="round"/><path d="M195.2 238.9 q-3.9 24.1 -20.3 48.2" fill="none" stroke="#c2b87e" stroke-width="1.3" stroke-opacity="0.5" stroke-linecap="round"/><path d="M-32.5 -101.4 q-3.4 21.0 -17.6 42.0" fill="none" stroke="#7f7a54" stroke-width="1.6" stroke-opacity="0.45" stroke-linecap="round"/><path d="M-32.5 39.6 q-3.4 21.0 -17.6 42.0" fill="none" stroke="#7f7a54" stroke-width="1.6" stroke-opacity="0.45" stroke-linecap="round"/><path d="M-32.5 180.6 q-3.4 21.0 -17.6 42.0" fill="none" stroke="#7f7a54" stroke-width="1.6" stroke-opacity="0.45" stroke-linecap="round"/><path d="M77.5 -101.4 q-3.4 21.0 -17.6 42.0" fill="none" stroke="#7f7a54" stroke-width="1.6" stroke-opacity="0.45" stroke-linecap="round"/><path d="M77.5 39.6 q-3.4 21.0 -17.6 42.0" fill="none" stroke="#7f7a54" stroke-width="1.6" stroke-opacity="0.45" stroke-linecap="round"/><path d="M77.5 180.6 q-3.4 21.0 -17.6 42.0" fill="none" stroke="#7f7a54" stroke-width="1.6" stroke-opacity="0.45" stroke-linecap="round"/><path d="M187.5 -101.4 q-3.4 21.0 -17.6 42.0" fill="none" stroke="#7f7a54" stroke-width="1.6" stroke-opacity="0.45" stroke-linecap="round"/><path d="M187.5 39.6 q-3.4 21.0 -17.6 42.0" fill="none" stroke="#7f7a54" stroke-width="1.6" stroke-opacity="0.45" stroke-linecap="round"/><path d="M187.5 180.6 q-3.4 21.0 -17.6 42.0" fill="none" stroke="#7f7a54" stroke-width="1.6" stroke-opacity="0.45" stroke-linecap="round"/><path d="M-72.6 -115.8 q-4.4 27.4 -23.0 54.8" fill="none" stroke="#8c865c" stroke-width="4.6" stroke-opacity="0.25" stroke-linecap="round"/><path d="M-72.6 25.2 q-4.4 27.4 -23.0 54.8" fill="none" stroke="#8c865c" stroke-width="4.6" stroke-opacity="0.25" stroke-linecap="round"/><path d="M-72.6 166.2 q-4.4 27.4 -23.0 54.8" fill="none" stroke="#8c865c" stroke-width="4.6" stroke-opacity="0.25" stroke-linecap="round"/><path d="M37.4 -115.8 q-4.4 27.4 -23.0 54.8" fill="none" stroke="#8c865c" stroke-width="4.6" stroke-opacity="0.25" stroke-linecap="round"/><path d="M37.4 25.2 q-4.4 27.4 -23.0 54.8" fill="none" stroke="#8c865c" stroke-width="4.6" stroke-opacity="0.25" stroke-linecap="round"/><path d="M37.4 166.2 q-4.4 27.4 -23.0 54.8" fill="none" stroke="#8c865c" stroke-width="4.6" stroke-opacity="0.25" stroke-linecap="round"/><path d="M147.4 -115.8 q-4.4 27.4 -23.0 54.8" fill="none" stroke="#8c865c" stroke-width="4.6" stroke-opacity="0.25" stroke-linecap="round"/><path d="M147.4 25.2 q-4.4 27.4 -23.0 54.8" fill="none" stroke="#8c865c" stroke-width="4.6" stroke-opacity="0.25" stroke-linecap="round"/><path d="M147.4 166.2 q-4.4 27.4 -23.0 54.8" fill="none" stroke="#8c865c" stroke-width="4.6" stroke-opacity="0.25" stroke-linecap="round"/><path d="M-82.4 -46.3 q-3.3 20.6 -17.3 41.2" fill="none" stroke="#d0c68c" stroke-width="1.5" stroke-opacity="0.5" stroke-linecap="round"/><path d="M-82.4 94.7 q-3.3 20.6 -17.3 41.2" fill="none" stroke="#d0c68c" stroke-width="1.5" stroke-opacity="0.5" stroke-linecap="round"/><path d="M-82.4 235.7 q-3.3 20.6 -17.3 41.2" fill="none" stroke="#d0c68c" stroke-width="1.5" stroke-opacity="0.5" stroke-linecap="round"/><path d="M27.6 -46.3 q-3.3 20.6 -17.3 41.2" fill="none" stroke="#d0c68c" stroke-width="1.5" stroke-opacity="0.5" stroke-linecap="round"/><path d="M27.6 94.7 q-3.3 20.6 -17.3 41.2" fill="none" stroke="#d0c68c" stroke-width="1.5" stroke-opacity="0.5" stroke-linecap="round"/><path d="M27.6 235.7 q-3.3 20.6 -17.3 41.2" fill="none" stroke="#d0c68c" stroke-width="1.5" stroke-opacity="0.5" stroke-linecap="round"/><path d="M137.6 -46.3 q-3.3 20.6 -17.3 41.2" fill="none" stroke="#d0c68c" stroke-width="1.5" stroke-opacity="0.5" stroke-linecap="round"/><path d="M137.6 94.7 q-3.3 20.6 -17.3 41.2" fill="none" stroke="#d0c68c" stroke-width="1.5" stroke-opacity="0.5" stroke-linecap="round"/><path d="M137.6 235.7 q-3.3 20.6 -17.3 41.2" fill="none" stroke="#d0c68c" stroke-width="1.5" stroke-opacity="0.5" stroke-linecap="round"/><path d="M-22.3 -91.9 q-3.8 23.8 -20.0 47.5" fill="none" stroke="#7f7a54" stroke-width="1.2" stroke-opacity="0.45" stroke-linecap="round"/><path d="M-22.3 49.1 q-3.8 23.8 -20.0 47.5" fill="none" stroke="#7f7a54" stroke-width="1.2" stroke-opacity="0.45" stroke-linecap="round"/><path d="M-22.3 190.1 q-3.8 23.8 -20.0 47.5" fill="none" stroke="#7f7a54" stroke-width="1.2" stroke-opacity="0.45" stroke-linecap="round"/><path d="M87.7 -91.9 q-3.8 23.8 -20.0 47.5" fill="none" stroke="#7f7a54" stroke-width="1.2" stroke-opacity="0.45" stroke-linecap="round"/><path d="M87.7 49.1 q-3.8 23.8 -20.0 47.5" fill="none" stroke="#7f7a54" stroke-width="1.2" stroke-opacity="0.45" stroke-linecap="round"/><path d="M87.7 190.1 q-3.8 23.8 -20.0 47.5" fill="none" stroke="#7f7a54" stroke-width="1.2" stroke-opacity="0.45" stroke-linecap="round"/><path d="M197.7 -91.9 q-3.8 23.8 -20.0 47.5" fill="none" stroke="#7f7a54" stroke-width="1.2" stroke-opacity="0.45" stroke-linecap="round"/><path d="M197.7 49.1 q-3.8 23.8 -20.0 47.5" fill="none" stroke="#7f7a54" stroke-width="1.2" stroke-opacity="0.45" stroke-linecap="round"/><path d="M197.7 190.1 q-3.8 23.8 -20.0 47.5" fill="none" stroke="#7f7a54" stroke-width="1.2" stroke-opacity="0.45" stroke-linecap="round"/><path d="M-17.3 -18.3 q-3.9 24.5 -20.6 49.1" fill="none" stroke="#8c865c" stroke-width="5.9" stroke-opacity="0.25" stroke-linecap="round"/><path d="M-17.3 122.7 q-3.9 24.5 -20.6 49.1" fill="none" stroke="#8c865c" stroke-width="5.9" stroke-opacity="0.25" stroke-linecap="round"/><path d="M-17.3 263.7 q-3.9 24.5 -20.6 49.1" fill="none" stroke="#8c865c" stroke-width="5.9" stroke-opacity="0.25" stroke-linecap="round"/><path d="M92.7 -18.3 q-3.9 24.5 -20.6 49.1" fill="none" stroke="#8c865c" stroke-width="5.9" stroke-opacity="0.25" stroke-linecap="round"/><path d="M92.7 122.7 q-3.9 24.5 -20.6 49.1" fill="none" stroke="#8c865c" stroke-width="5.9" stroke-opacity="0.25" stroke-linecap="round"/><path d="M92.7 263.7 q-3.9 24.5 -20.6 49.1" fill="none" stroke="#8c865c" stroke-width="5.9" stroke-opacity="0.25" stroke-linecap="round"/><path d="M202.7 -18.3 q-3.9 24.5 -20.6 49.1" fill="none" stroke="#8c865c" stroke-width="5.9" stroke-opacity="0.25" stroke-linecap="round"/><path d="M202.7 122.7 q-3.9 24.5 -20.6 49.1" fill="none" stroke="#8c865c" stroke-width="5.9" stroke-opacity="0.25" stroke-linecap="round"/><path d="M202.7 263.7 q-3.9 24.5 -20.6 49.1" fill="none" stroke="#8c865c" stroke-width="5.9" stroke-opacity="0.25" stroke-linecap="round"/><path d="M-53.0 -66.4 q-2.5 15.4 -12.9 30.8" fill="none" stroke="#c2b87e" stroke-width="1.7" stroke-opacity="0.5" stroke-linecap="round"/><path d="M-53.0 74.6 q-2.5 15.4 -12.9 30.8" fill="none" stroke="#c2b87e" stroke-width="1.7" stroke-opacity="0.5" stroke-linecap="round"/><path d="M-53.0 215.6 q-2.5 15.4 -12.9 30.8" fill="none" stroke="#c2b87e" stroke-width="1.7" stroke-opacity="0.5" stroke-linecap="round"/><path d="M57.0 -66.4 q-2.5 15.4 -12.9 30.8" fill="none" stroke="#c2b87e" stroke-width="1.7" stroke-opacity="0.5" stroke-linecap="round"/><path d="M57.0 74.6 q-2.5 15.4 -12.9 30.8" fill="none" stroke="#c2b87e" stroke-width="1.7" stroke-opacity="0.5" stroke-linecap="round"/><path d="M57.0 215.6 q-2.5 15.4 -12.9 30.8" fill="none" stroke="#c2b87e" stroke-width="1.7" stroke-opacity="0.5" stroke-linecap="round"/><path d="M167.0 -66.4 q-2.5 15.4 -12.9 30.8" fill="none" stroke="#c2b87e" stroke-width="1.7" stroke-opacity="0.5" stroke-linecap="round"/><path d="M167.0 74.6 q-2.5 15.4 -12.9 30.8" fill="none" stroke="#c2b87e" stroke-width="1.7" stroke-opacity="0.5" stroke-linecap="round"/><path d="M167.0 215.6 q-2.5 15.4 -12.9 30.8" fill="none" stroke="#c2b87e" stroke-width="1.7" stroke-opacity="0.5" stroke-linecap="round"/><path d="M-57.5 -43.5 q-4.0 25.1 -21.1 50.2" fill="none" stroke="#7f7a54" stroke-width="1.1" stroke-opacity="0.45" stroke-linecap="round"/><path d="M-57.5 97.5 q-4.0 25.1 -21.1 50.2" fill="none" stroke="#7f7a54" stroke-width="1.1" stroke-opacity="0.45" stroke-linecap="round"/><path d="M-57.5 238.5 q-4.0 25.1 -21.1 50.2" fill="none" stroke="#7f7a54" stroke-width="1.1" stroke-opacity="0.45" stroke-linecap="round"/><path d="M52.5 -43.5 q-4.0 25.1 -21.1 50.2" fill="none" stroke="#7f7a54" stroke-width="1.1" stroke-opacity="0.45" stroke-linecap="round"/><path d="M52.5 97.5 q-4.0 25.1 -21.1 50.2" fill="none" stroke="#7f7a54" stroke-width="1.1" stroke-opacity="0.45" stroke-linecap="round"/><path d="M52.5 238.5 q-4.0 25.1 -21.1 50.2" fill="none" stroke="#7f7a54" stroke-width="1.1" stroke-opacity="0.45" stroke-linecap="round"/><path d="M162.5 -43.5 q-4.0 25.1 -21.1 50.2" fill="none" stroke="#7f7a54" stroke-width="1.1" stroke-opacity="0.45" stroke-linecap="round"/><path d="M162.5 97.5 q-4.0 25.1 -21.1 50.2" fill="none" stroke="#7f7a54" stroke-width="1.1" stroke-opacity="0.45" stroke-linecap="round"/><path d="M162.5 238.5 q-4.0 25.1 -21.1 50.2" fill="none" stroke="#7f7a54" stroke-width="1.1" stroke-opacity="0.45" stroke-linecap="round"/><path d="M-24.2 -59.1 q-3.9 24.1 -20.3 48.3" fill="none" stroke="#8c865c" stroke-width="3.9" stroke-opacity="0.25" stroke-linecap="round"/><path d="M-24.2 81.9 q-3.9 24.1 -20.3 48.3" fill="none" stroke="#8c865c" stroke-width="3.9" stroke-opacity="0.25" stroke-linecap="round"/><path d="M-24.2 222.9 q-3.9 24.1 -20.3 48.3" fill="none" stroke="#8c865c" stroke-width="3.9" stroke-opacity="0.25" stroke-linecap="round"/><path d="M85.8 -59.1 q-3.9 24.1 -20.3 48.3" fill="none" stroke="#8c865c" stroke-width="3.9" stroke-opacity="0.25" stroke-linecap="round"/><path d="M85.8 81.9 q-3.9 24.1 -20.3 48.3" fill="none" stroke="#8c865c" stroke-width="3.9" stroke-opacity="0.25" stroke-linecap="round"/><path d="M85.8 222.9 q-3.9 24.1 -20.3 48.3" fill="none" stroke="#8c865c" stroke-width="3.9" stroke-opacity="0.25" stroke-linecap="round"/><path d="M195.8 -59.1 q-3.9 24.1 -20.3 48.3" fill="none" stroke="#8c865c" stroke-width="3.9" stroke-opacity="0.25" stroke-linecap="round"/><path d="M195.8 81.9 q-3.9 24.1 -20.3 48.3" fill="none" stroke="#8c865c" stroke-width="3.9" stroke-opacity="0.25" stroke-linecap="round"/><path d="M195.8 222.9 q-3.9 24.1 -20.3 48.3" fill="none" stroke="#8c865c" stroke-width="3.9" stroke-opacity="0.25" stroke-linecap="round"/><path d="M-49.1 -18.7 q-2.8 17.2 -14.5 34.5" fill="none" stroke="#c9be84" stroke-width="1.2" stroke-opacity="0.5" stroke-linecap="round"/><path d="M-49.1 122.3 q-2.8 17.2 -14.5 34.5" fill="none" stroke="#c9be84" stroke-width="1.2" stroke-opacity="0.5" stroke-linecap="round"/><path d="M-49.1 263.3 q-2.8 17.2 -14.5 34.5" fill="none" stroke="#c9be84" stroke-width="1.2" stroke-opacity="0.5" stroke-linecap="round"/><path d="M60.9 -18.7 q-2.8 17.2 -14.5 34.5" fill="none" stroke="#c9be84" stroke-width="1.2" stroke-opacity="0.5" stroke-linecap="round"/><path d="M60.9 122.3 q-2.8 17.2 -14.5 34.5" fill="none" stroke="#c9be84" stroke-width="1.2" stroke-opacity="0.5" stroke-linecap="round"/><path d="M60.9 263.3 q-2.8 17.2 -14.5 34.5" fill="none" stroke="#c9be84" stroke-width="1.2" stroke-opacity="0.5" stroke-linecap="round"/><path d="M170.9 -18.7 q-2.8 17.2 -14.5 34.5" fill="none" stroke="#c9be84" stroke-width="1.2" stroke-opacity="0.5" stroke-linecap="round"/><path d="M170.9 122.3 q-2.8 17.2 -14.5 34.5" fill="none" stroke="#c9be84" stroke-width="1.2" stroke-opacity="0.5" stroke-linecap="round"/><path d="M170.9 263.3 q-2.8 17.2 -14.5 34.5" fill="none" stroke="#c9be84" stroke-width="1.2" stroke-opacity="0.5" stroke-linecap="round"/><path d="M-45.5 -53.0 q-2.5 15.7 -13.2 31.3" fill="none" stroke="#8a845a" stroke-width="1.4" stroke-opacity="0.45" stroke-linecap="round"/><path d="M-45.5 88.0 q-2.5 15.7 -13.2 31.3" fill="none" stroke="#8a845a" stroke-width="1.4" stroke-opacity="0.45" stroke-linecap="round"/><path d="M-45.5 229.0 q-2.5 15.7 -13.2 31.3" fill="none" stroke="#8a845a" stroke-width="1.4" stroke-opacity="0.45" stroke-linecap="round"/><path d="M64.5 -53.0 q-2.5 15.7 -13.2 31.3" fill="none" stroke="#8a845a" stroke-width="1.4" stroke-opacity="0.45" stroke-linecap="round"/><path d="M64.5 88.0 q-2.5 15.7 -13.2 31.3" fill="none" stroke="#8a845a" stroke-width="1.4" stroke-opacity="0.45" stroke-linecap="round"/><path d="M64.5 229.0 q-2.5 15.7 -13.2 31.3" fill="none" stroke="#8a845a" stroke-width="1.4" stroke-opacity="0.45" stroke-linecap="round"/><path d="M174.5 -53.0 q-2.5 15.7 -13.2 31.3" fill="none" stroke="#8a845a" stroke-width="1.4" stroke-opacity="0.45" stroke-linecap="round"/><path d="M174.5 88.0 q-2.5 15.7 -13.2 31.3" fill="none" stroke="#8a845a" stroke-width="1.4" stroke-opacity="0.45" stroke-linecap="round"/><path d="M174.5 229.0 q-2.5 15.7 -13.2 31.3" fill="none" stroke="#8a845a" stroke-width="1.4" stroke-opacity="0.45" stroke-linecap="round"/><path d="M-105.4 -74.5 q-2.6 16.5 -13.8 32.9" fill="none" stroke="#87815a" stroke-width="5.7" stroke-opacity="0.25" stroke-linecap="round"/><path d="M-105.4 66.5 q-2.6 16.5 -13.8 32.9" fill="none" stroke="#87815a" stroke-width="5.7" stroke-opacity="0.25" stroke-linecap="round"/><path d="M-105.4 207.5 q-2.6 16.5 -13.8 32.9" fill="none" stroke="#87815a" stroke-width="5.7" stroke-opacity="0.25" stroke-linecap="round"/><path d="M4.6 -74.5 q-2.6 16.5 -13.8 32.9" fill="none" stroke="#87815a" stroke-width="5.7" stroke-opacity="0.25" stroke-linecap="round"/><path d="M4.6 66.5 q-2.6 16.5 -13.8 32.9" fill="none" stroke="#87815a" stroke-width="5.7" stroke-opacity="0.25" stroke-linecap="round"/><path d="M4.6 207.5 q-2.6 16.5 -13.8 32.9" fill="none" stroke="#87815a" stroke-width="5.7" stroke-opacity="0.25" stroke-linecap="round"/><path d="M114.6 -74.5 q-2.6 16.5 -13.8 32.9" fill="none" stroke="#87815a" stroke-width="5.7" stroke-opacity="0.25" stroke-linecap="round"/><path d="M114.6 66.5 q-2.6 16.5 -13.8 32.9" fill="none" stroke="#87815a" stroke-width="5.7" stroke-opacity="0.25" stroke-linecap="round"/><path d="M114.6 207.5 q-2.6 16.5 -13.8 32.9" fill="none" stroke="#87815a" stroke-width="5.7" stroke-opacity="0.25" stroke-linecap="round"/><path d="M-97.8 -4.5 q-3.4 20.9 -17.6 41.9" fill="none" stroke="#d0c68c" stroke-width="1.0" stroke-opacity="0.5" stroke-linecap="round"/><path d="M-97.8 136.5 q-3.4 20.9 -17.6 41.9" fill="none" stroke="#d0c68c" stroke-width="1.0" stroke-opacity="0.5" stroke-linecap="round"/><path d="M-97.8 277.5 q-3.4 20.9 -17.6 41.9" fill="none" stroke="#d0c68c" stroke-width="1.0" stroke-opacity="0.5" stroke-linecap="round"/><path d="M12.2 -4.5 q-3.4 20.9 -17.6 41.9" fill="none" stroke="#d0c68c" stroke-width="1.0" stroke-opacity="0.5" stroke-linecap="round"/><path d="M12.2 136.5 q-3.4 20.9 -17.6 41.9" fill="none" stroke="#d0c68c" stroke-width="1.0" stroke-opacity="0.5" stroke-linecap="round"/><path d="M12.2 277.5 q-3.4 20.9 -17.6 41.9" fill="none" stroke="#d0c68c" stroke-width="1.0" stroke-opacity="0.5" stroke-linecap="round"/><path d="M122.2 -4.5 q-3.4 20.9 -17.6 41.9" fill="none" stroke="#d0c68c" stroke-width="1.0" stroke-opacity="0.5" stroke-linecap="round"/><path d="M122.2 136.5 q-3.4 20.9 -17.6 41.9" fill="none" stroke="#d0c68c" stroke-width="1.0" stroke-opacity="0.5" stroke-linecap="round"/><path d="M122.2 277.5 q-3.4 20.9 -17.6 41.9" fill="none" stroke="#d0c68c" stroke-width="1.0" stroke-opacity="0.5" stroke-linecap="round"/><path d="M-58.8 -87.4 q-3.7 23.2 -19.5 46.4" fill="none" stroke="#8a845a" stroke-width="1.1" stroke-opacity="0.45" stroke-linecap="round"/><path d="M-58.8 53.6 q-3.7 23.2 -19.5 46.4" fill="none" stroke="#8a845a" stroke-width="1.1" stroke-opacity="0.45" stroke-linecap="round"/><path d="M-58.8 194.6 q-3.7 23.2 -19.5 46.4" fill="none" stroke="#8a845a" stroke-width="1.1" stroke-opacity="0.45" stroke-linecap="round"/><path d="M51.2 -87.4 q-3.7 23.2 -19.5 46.4" fill="none" stroke="#8a845a" stroke-width="1.1" stroke-opacity="0.45" stroke-linecap="round"/><path d="M51.2 53.6 q-3.7 23.2 -19.5 46.4" fill="none" stroke="#8a845a" stroke-width="1.1" stroke-opacity="0.45" stroke-linecap="round"/><path d="M51.2 194.6 q-3.7 23.2 -19.5 46.4" fill="none" stroke="#8a845a" stroke-width="1.1" stroke-opacity="0.45" stroke-linecap="round"/><path d="M161.2 -87.4 q-3.7 23.2 -19.5 46.4" fill="none" stroke="#8a845a" stroke-width="1.1" stroke-opacity="0.45" stroke-linecap="round"/><path d="M161.2 53.6 q-3.7 23.2 -19.5 46.4" fill="none" stroke="#8a845a" stroke-width="1.1" stroke-opacity="0.45" stroke-linecap="round"/><path d="M161.2 194.6 q-3.7 23.2 -19.5 46.4" fill="none" stroke="#8a845a" stroke-width="1.1" stroke-opacity="0.45" stroke-linecap="round"/><path d="M-10.6 -140.9 q-3.1 19.6 -16.5 39.2" fill="none" stroke="#8c865c" stroke-width="5.6" stroke-opacity="0.25" stroke-linecap="round"/><path d="M-10.6 0.1 q-3.1 19.6 -16.5 39.2" fill="none" stroke="#8c865c" stroke-width="5.6" stroke-opacity="0.25" stroke-linecap="round"/><path d="M-10.6 141.1 q-3.1 19.6 -16.5 39.2" fill="none" stroke="#8c865c" stroke-width="5.6" stroke-opacity="0.25" stroke-linecap="round"/><path d="M99.4 -140.9 q-3.1 19.6 -16.5 39.2" fill="none" stroke="#8c865c" stroke-width="5.6" stroke-opacity="0.25" stroke-linecap="round"/><path d="M99.4 0.1 q-3.1 19.6 -16.5 39.2" fill="none" stroke="#8c865c" stroke-width="5.6" stroke-opacity="0.25" stroke-linecap="round"/><path d="M99.4 141.1 q-3.1 19.6 -16.5 39.2" fill="none" stroke="#8c865c" stroke-width="5.6" stroke-opacity="0.25" stroke-linecap="round"/><path d="M209.4 -140.9 q-3.1 19.6 -16.5 39.2" fill="none" stroke="#8c865c" stroke-width="5.6" stroke-opacity="0.25" stroke-linecap="round"/><path d="M209.4 0.1 q-3.1 19.6 -16.5 39.2" fill="none" stroke="#8c865c" stroke-width="5.6" stroke-opacity="0.25" stroke-linecap="round"/><path d="M209.4 141.1 q-3.1 19.6 -16.5 39.2" fill="none" stroke="#8c865c" stroke-width="5.6" stroke-opacity="0.25" stroke-linecap="round"/></pattern><linearGradient id="gcr" x1="0" y1="0" x2="0" y2="1"><stop offset="0" stop-color="#ece3c2"/><stop offset="1" stop-color="#eee6ca"/></linearGradient><pattern id="pc" patternUnits="userSpaceOnUse" x="12" y="169" width="3" height="141"><rect width="3" height="141" fill="url(#gcr)"/><rect x="0" width="1" height="141" fill="#d9cfa8" fill-opacity=".22"/></pattern><pattern id="pcl" patternUnits="userSpaceOnUse" width="4" height="3"><rect width="4" height="1" fill="#f6f0da" fill-opacity=".5"/></pattern></defs><rect x="12.5" y="172.5" width="700" height="28" fill="url(#pw)"/><rect x="12.5" y="172.5" width="700" height="28" fill="url(#pwv)"/><path d="M40 172.5 A14 14 0 0 0 40 200.5 H689 A14 14 0 0 0 689 172.5 Z" fill="#e8805c"/><path d="M41 172.5 A11 14 0 0 0 41 200.5 H688 A11 14 0 0 0 688 172.5 Z" fill="url(#pd)"/><path d="M41 172.5 A11 14 0 0 0 41 200.5 H688 A11 14 0 0 0 688 172.5 Z" fill="url(#pdl)"/><rect x="12.5" y="200.5" width="28" height="510.5" fill="url(#pc)"/><rect x="12.5" y="200.5" width="28" height="510.5" fill="url(#pcl)"/><path d="M12.5 200.5 V589.3 A14 15 0 0 0 40.5 589.3 V200.5 Z" fill="#e8805c"/><path d="M12.5 200.5 V588.3 H13.5 A13 12.5 0 0 0 39.5 588.3 H40.5 V200.5 Z" fill="url(#po)"/><path d="M12.5 200.5 V487.8 A14 15 0 0 0 40.5 487.8 V200.5 Z" fill="#e8805c"/><path d="M12.5 200.5 V486.8 H13.5 A13 12.5 0 0 0 39.5 486.8 H40.5 V200.5 Z" fill="url(#pw)"/><path d="M12.5 200.5 V486.8 H13.5 A13 12.5 0 0 0 39.5 486.8 H40.5 V200.5 Z" fill="url(#pwv)"/><rect x="40.5" y="200.5" width="28" height="510.5" fill="url(#pc)"/><rect x="40.5" y="200.5" width="28" height="510.5" fill="url(#pcl)"/><path d="M40.5 200.5 V571.7 A14 15 0 0 0 68.5 571.7 V200.5 Z" fill="#e8805c"/><path d="M40.5 200.5 V570.7 H41.5 A13 12.5 0 0 0 67.5 570.7 H68.5 V200.5 Z" fill="url(#po)"/><path d="M40.5 200.5 V490.7 A14 15 0 0 0 68.5 490.7 V200.5 Z" fill="#e8805c"/><path d="M40.5 200.5 V489.7 H41.5 A13 12.5 0 0 0 67.5 489.7 H68.5 V200.5 Z" fill="url(#pw)"/><path d="M40.5 200.5 V489.7 H41.5 A13 12.5 0 0 0 67.5 489.7 H68.5 V200.5 Z" fill="url(#pwv)"/><path d="M40.5 200.5 V211.7 A14 15 0 0 0 68.5 211.7 V200.5 Z" fill="#e8805c"/><path d="M40.5 200.5 V210.7 H41.5 A13 12.5 0 0 0 67.5 210.7 H68.5 V200.5 Z" fill="url(#pd)"/><path d="M40.5 200.5 V210.7 H41.5 A13 12.5 0 0 0 67.5 210.7 H68.5 V200.5 Z" fill="url(#pdl)"/><rect x="68.5" y="200.5" width="28" height="510.5" fill="url(#pc)"/><rect x="68.5" y="200.5" width="28" height="510.5" fill="url(#pcl)"/><path d="M68.5 200.5 V551.2 A14 15 0 0 0 96.5 551.2 V200.5 Z" fill="#e8805c"/><path d="M68.5 200.5 V550.2 H69.5 A13 12.5 0 0 0 95.5 550.2 H96.5 V200.5 Z" fill="url(#po)"/><path d="M68.5 200.5 V486.7 A14 15 0 0 0 96.5 486.7 V200.5 Z" fill="#e8805c"/><path d="M68.5 200.5 V485.7 H69.5 A13 12.5 0 0 0 95.5 485.7 H96.5 V200.5 Z" fill="url(#pw)"/><path d="M68.5 200.5 V485.7 H69.5 A13 12.5 0 0 0 95.5 485.7 H96.5 V200.5 Z" fill="url(#pwv)"/><path d="M68.5 200.5 V236.9 A14 15 0 0 0 96.5 236.9 V200.5 Z" fill="#e8805c"/><path d="M68.5 200.5 V235.9 H69.5 A13 12.5 0 0 0 95.5 235.9 H96.5 V200.5 Z" fill="url(#pd)"/><path d="M68.5 200.5 V235.9 H69.5 A13 12.5 0 0 0 95.5 235.9 H96.5 V200.5 Z" fill="url(#pdl)"/><rect x="96.5" y="200.5" width="28" height="510.5" fill="url(#pc)"/><rect x="96.5" y="200.5" width="28" height="510.5" fill="url(#pcl)"/><path d="M96.5 200.5 V533.5 A14 15 0 0 0 124.5 533.5 V200.5 Z" fill="#e8805c"/><path d="M96.5 200.5 V532.5 H97.5 A13 12.5 0 0 0 123.5 532.5 H124.5 V200.5 Z" fill="url(#po)"/><path d="M96.5 200.5 V483.9 A14 15 0 0 0 124.5 483.9 V200.5 Z" fill="#e8805c"/><path d="M96.5 200.5 V482.9 H97.5 A13 12.5 0 0 0 123.5 482.9 H124.5 V200.5 Z" fill="url(#pw)"/><path d="M96.5 200.5 V482.9 H97.5 A13 12.5 0 0 0 123.5 482.9 H124.5 V200.5 Z" fill="url(#pwv)"/><path d="M96.5 200.5 V252.7 A14 15 0 0 0 124.5 252.7 V200.5 Z" fill="#e8805c"/><path d="M96.5 200.5 V251.7 H97.5 A13 12.5 0 0 0 123.5 251.7 H124.5 V200.5 Z" fill="url(#pd)"/><path d="M96.5 200.5 V251.7 H97.5 A13 12.5 0 0 0 123.5 251.7 H124.5 V200.5 Z" fill="url(#pdl)"/><rect x="124.5" y="200.5" width="28" height="510.5" fill="url(#pc)"/><rect x="124.5" y="200.5" width="28" height="510.5" fill="url(#pcl)"/><path d="M124.5 200.5 V518.4 A14 15 0 0 0 152.5 518.4 V200.5 Z" fill="#e8805c"/><path d="M124.5 200.5 V517.4 H125.5 A13 12.5 0 0 0 151.5 517.4 H152.5 V200.5 Z" fill="url(#po)"/><path d="M124.5 200.5 V474.1 A14 15 0 0 0 152.5 474.1 V200.5 Z" fill="#e8805c"/><path d="M124.5 200.5 V473.1 H125.5 A13 12.5 0 0 0 151.5 473.1 H152.5 V200.5 Z" fill="url(#pw)"/><path d="M124.5 200.5 V473.1 H125.5 A13 12.5 0 0 0 151.5 473.1 H152.5 V200.5 Z" fill="url(#pwv)"/><path d="M124.5 200.5 V264.6 A14 15 0 0 0 152.5 264.6 V200.5 Z" fill="#e8805c"/><path d="M124.5 200.5 V263.6 H125.5 A13 12.5 0 0 0 151.5 263.6 H152.5 V200.5 Z" fill="url(#pd)"/><path d="M124.5 200.5 V263.6 H125.5 A13 12.5 0 0 0 151.5 263.6 H152.5 V200.5 Z" fill="url(#pdl)"/><rect x="152.5" y="200.5" width="28" height="510.5" fill="url(#pc)"/><rect x="152.5" y="200.5" width="28" height="510.5" fill="url(#pcl)"/><path d="M152.5 200.5 V505.1 A14 15 0 0 0 180.5 505.1 V200.5 Z" fill="#e8805c"/><path d="M152.5 200.5 V504.1 H153.5 A13 12.5 0 0 0 179.5 504.1 H180.5 V200.5 Z" fill="url(#po)"/><path d="M152.5 200.5 V464.8 A14 15 0 0 0 180.5 464.8 V200.5 Z" fill="#e8805c"/><path d="M152.5 200.5 V463.8 H153.5 A13 12.5 0 0 0 179.5 463.8 H180.5 V200.5 Z" fill="url(#pw)"/><path d="M152.5 200.5 V463.8 H153.5 A13 12.5 0 0 0 179.5 463.8 H180.5 V200.5 Z" fill="url(#pwv)"/><path d="M152.5 200.5 V268.6 A14 15 0 0 0 180.5 268.6 V200.5 Z" fill="#e8805c"/><path d="M152.5 200.5 V267.6 H153.5 A13 12.5 0 0 0 179.5 267.6 H180.5 V200.5 Z" fill="url(#pd)"/><path d="M152.5 200.5 V267.6 H153.5 A13 12.5 0 0 0 179.5 267.6 H180.5 V200.5 Z" fill="url(#pdl)"/><rect x="180.5" y="200.5" width="28" height="510.5" fill="url(#pc)"/><rect x="180.5" y="200.5" width="28" height="510.5" fill="url(#pcl)"/><path d="M180.5 200.5 V493.9 A14 15 0 0 0 208.5 493.9 V200.5 Z" fill="#e8805c"/><path d="M180.5 200.5 V492.9 H181.5 A13 12.5 0 0 0 207.5 492.9 H208.5 V200.5 Z" fill="url(#po)"/><path d="M180.5 200.5 V452.9 A14 15 0 0 0 208.5 452.9 V200.5 Z" fill="#e8805c"/><path d="M180.5 200.5 V451.9 H181.5 A13 12.5 0 0 0 207.5 451.9 H208.5 V200.5 Z" fill="url(#pw)"/><path d="M180.5 200.5 V451.9 H181.5 A13 12.5 0 0 0 207.5 451.9 H208.5 V200.5 Z" fill="url(#pwv)"/><path d="M180.5 200.5 V268.6 A14 15 0 0 0 208.5 268.6 V200.5 Z" fill="#e8805c"/><path d="M180.5 200.5 V267.6 H181.5 A13 12.5 0 0 0 207.5 267.6 H208.5 V200.5 Z" fill="url(#pd)"/><path d="M180.5 200.5 V267.6 H181.5 A13 12.5 0 0 0 207.5 267.6 H208.5 V200.5 Z" fill="url(#pdl)"/><rect x="208.5" y="200.5" width="28" height="510.5" fill="url(#pc)"/><rect x="208.5" y="200.5" width="28" height="510.5" fill="url(#pcl)"/><path d="M208.5 200.5 V484.6 A14 15 0 0 0 236.5 484.6 V200.5 Z" fill="#e8805c"/><path d="M208.5 200.5 V483.6 H209.5 A13 12.5 0 0 0 235.5 483.6 H236.5 V200.5 Z" fill="url(#po)"/><path d="M208.5 200.5 V435.3 A14 15 0 0 0 236.5 435.3 V200.5 Z" fill="#e8805c"/><path d="M208.5 200.5 V434.3 H209.5 A13 12.5 0 0 0 235.5 434.3 H236.5 V200.5 Z" fill="url(#pw)"/><path d="M208.5 200.5 V434.3 H209.5 A13 12.5 0 0 0 235.5 434.3 H236.5 V200.5 Z" fill="url(#pwv)"/><path d="M208.5 200.5 V264.6 A14 15 0 0 0 236.5 264.6 V200.5 Z" fill="#e8805c"/><path d="M208.5 200.5 V263.6 H209.5 A13 12.5 0 0 0 235.5 263.6 H236.5 V200.5 Z" fill="url(#pd)"/><path d="M208.5 200.5 V263.6 H209.5 A13 12.5 0 0 0 235.5 263.6 H236.5 V200.5 Z" fill="url(#pdl)"/><rect x="236.5" y="200.5" width="28" height="510.5" fill="url(#pc)"/><rect x="236.5" y="200.5" width="28" height="510.5" fill="url(#pcl)"/><path d="M236.5 200.5 V477.4 A14 15 0 0 0 264.5 477.4 V200.5 Z" fill="#e8805c"/><path d="M236.5 200.5 V476.4 H237.5 A13 12.5 0 0 0 263.5 476.4 H264.5 V200.5 Z" fill="url(#po)"/><path d="M236.5 200.5 V416.9 A14 15 0 0 0 264.5 416.9 V200.5 Z" fill="#e8805c"/><path d="M236.5 200.5 V415.9 H237.5 A13 12.5 0 0 0 263.5 415.9 H264.5 V200.5 Z" fill="url(#pw)"/><path d="M236.5 200.5 V415.9 H237.5 A13 12.5 0 0 0 263.5 415.9 H264.5 V200.5 Z" fill="url(#pwv)"/><path d="M236.5 200.5 V256.7 A14 15 0 0 0 264.5 256.7 V200.5 Z" fill="#e8805c"/><path d="M236.5 200.5 V255.7 H237.5 A13 12.5 0 0 0 263.5 255.7 H264.5 V200.5 Z" fill="url(#pd)"/><path d="M236.5 200.5 V255.7 H237.5 A13 12.5 0 0 0 263.5 255.7 H264.5 V200.5 Z" fill="url(#pdl)"/><rect x="264.5" y="200.5" width="28" height="510.5" fill="url(#pc)"/><rect x="264.5" y="200.5" width="28" height="510.5" fill="url(#pcl)"/><path d="M264.5 200.5 V471.6 A14 15 0 0 0 292.5 471.6 V200.5 Z" fill="#e8805c"/><path d="M264.5 200.5 V470.6 H265.5 A13 12.5 0 0 0 291.5 470.6 H292.5 V200.5 Z" fill="url(#po)"/><path d="M264.5 200.5 V394.9 A14 15 0 0 0 292.5 394.9 V200.5 Z" fill="#e8805c"/><path d="M264.5 200.5 V393.9 H265.5 A13 12.5 0 0 0 291.5 393.9 H292.5 V200.5 Z" fill="url(#pw)"/><path d="M264.5 200.5 V393.9 H265.5 A13 12.5 0 0 0 291.5 393.9 H292.5 V200.5 Z" fill="url(#pwv)"/><path d="M264.5 200.5 V244.8 A14 15 0 0 0 292.5 244.8 V200.5 Z" fill="#e8805c"/><path d="M264.5 200.5 V243.8 H265.5 A13 12.5 0 0 0 291.5 243.8 H292.5 V200.5 Z" fill="url(#pd)"/><path d="M264.5 200.5 V243.8 H265.5 A13 12.5 0 0 0 291.5 243.8 H292.5 V200.5 Z" fill="url(#pdl)"/><rect x="292.5" y="200.5" width="28" height="510.5" fill="url(#pc)"/><rect x="292.5" y="200.5" width="28" height="510.5" fill="url(#pcl)"/><path d="M292.5 200.5 V466.9 A14 15 0 0 0 320.5 466.9 V200.5 Z" fill="#e8805c"/><path d="M292.5 200.5 V465.9 H293.5 A13 12.5 0 0 0 319.5 465.9 H320.5 V200.5 Z" fill="url(#po)"/><path d="M292.5 200.5 V365.4 A14 15 0 0 0 320.5 365.4 V200.5 Z" fill="#e8805c"/><path d="M292.5 200.5 V364.4 H293.5 A13 12.5 0 0 0 319.5 364.4 H320.5 V200.5 Z" fill="url(#pw)"/><path d="M292.5 200.5 V364.4 H293.5 A13 12.5 0 0 0 319.5 364.4 H320.5 V200.5 Z" fill="url(#pwv)"/><path d="M292.5 200.5 V221.8 A14 15 0 0 0 320.5 221.8 V200.5 Z" fill="#e8805c"/><path d="M292.5 200.5 V220.8 H293.5 A13 12.5 0 0 0 319.5 220.8 H320.5 V200.5 Z" fill="url(#pd)"/><path d="M292.5 200.5 V220.8 H293.5 A13 12.5 0 0 0 319.5 220.8 H320.5 V200.5 Z" fill="url(#pdl)"/><rect x="320.5" y="200.5" width="28" height="510.5" fill="url(#pc)"/><rect x="320.5" y="200.5" width="28" height="510.5" fill="url(#pcl)"/><path d="M320.5 200.5 V463.7 A14 15 0 0 0 348.5 463.7 V200.5 Z" fill="#e8805c"/><path d="M320.5 200.5 V462.7 H321.5 A13 12.5 0 0 0 347.5 462.7 H348.5 V200.5 Z" fill="url(#po)"/><path d="M320.5 200.5 V349.6 A14 15 0 0 0 348.5 349.6 V200.5 Z" fill="#e8805c"/><path d="M320.5 200.5 V348.6 H321.5 A13 12.5 0 0 0 347.5 348.6 H348.5 V200.5 Z" fill="url(#pw)"/><path d="M320.5 200.5 V348.6 H321.5 A13 12.5 0 0 0 347.5 348.6 H348.5 V200.5 Z" fill="url(#pwv)"/><path d="M320.5 200.5 V211.7 A14 15 0 0 0 348.5 211.7 V200.5 Z" fill="#e8805c"/><path d="M320.5 200.5 V210.7 H321.5 A13 12.5 0 0 0 347.5 210.7 H348.5 V200.5 Z" fill="url(#pd)"/><path d="M320.5 200.5 V210.7 H321.5 A13 12.5 0 0 0 347.5 210.7 H348.5 V200.5 Z" fill="url(#pdl)"/><rect x="348.5" y="200.5" width="28" height="510.5" fill="url(#pc)"/><rect x="348.5" y="200.5" width="28" height="510.5" fill="url(#pcl)"/><path d="M348.5 200.5 V462.3 A14 15 0 0 0 376.5 462.3 V200.5 Z" fill="#e8805c"/><path d="M348.5 200.5 V461.3 H349.5 A13 12.5 0 0 0 375.5 461.3 H376.5 V200.5 Z" fill="url(#po)"/><path d="M348.5 200.5 V337.0 A14 15 0 0 0 376.5 337.0 V200.5 Z" fill="#e8805c"/><path d="M348.5 200.5 V336.0 H349.5 A13 12.5 0 0 0 375.5 336.0 H376.5 V200.5 Z" fill="url(#pw)"/><path d="M348.5 200.5 V336.0 H349.5 A13 12.5 0 0 0 375.5 336.0 H376.5 V200.5 Z" fill="url(#pwv)"/><rect x="376.5" y="200.5" width="28" height="510.5" fill="url(#pc)"/><rect x="376.5" y="200.5" width="28" height="510.5" fill="url(#pcl)"/><path d="M376.5 200.5 V463.7 A14 15 0 0 0 404.5 463.7 V200.5 Z" fill="#e8805c"/><path d="M376.5 200.5 V462.7 H377.5 A13 12.5 0 0 0 403.5 462.7 H404.5 V200.5 Z" fill="url(#po)"/><path d="M376.5 200.5 V328.7 A14 15 0 0 0 404.5 328.7 V200.5 Z" fill="#e8805c"/><path d="M376.5 200.5 V327.7 H377.5 A13 12.5 0 0 0 403.5 327.7 H404.5 V200.5 Z" fill="url(#pw)"/><path d="M376.5 200.5 V327.7 H377.5 A13 12.5 0 0 0 403.5 327.7 H404.5 V200.5 Z" fill="url(#pwv)"/><path d="M376.5 200.5 V211.7 A14 15 0 0 0 404.5 211.7 V200.5 Z" fill="#e8805c"/><path d="M376.5 200.5 V210.7 H377.5 A13 12.5 0 0 0 403.5 210.7 H404.5 V200.5 Z" fill="url(#pd)"/><path d="M376.5 200.5 V210.7 H377.5 A13 12.5 0 0 0 403.5 210.7 H404.5 V200.5 Z" fill="url(#pdl)"/><rect x="404.5" y="200.5" width="28" height="510.5" fill="url(#pc)"/><rect x="404.5" y="200.5" width="28" height="510.5" fill="url(#pcl)"/><path d="M404.5 200.5 V466.9 A14 15 0 0 0 432.5 466.9 V200.5 Z" fill="#e8805c"/><path d="M404.5 200.5 V465.9 H405.5 A13 12.5 0 0 0 431.5 465.9 H432.5 V200.5 Z" fill="url(#po)"/><path d="M404.5 200.5 V324.0 A14 15 0 0 0 432.5 324.0 V200.5 Z" fill="#e8805c"/><path d="M404.5 200.5 V323.0 H405.5 A13 12.5 0 0 0 431.5 323.0 H432.5 V200.5 Z" fill="url(#pw)"/><path d="M404.5 200.5 V323.0 H405.5 A13 12.5 0 0 0 431.5 323.0 H432.5 V200.5 Z" fill="url(#pwv)"/><path d="M404.5 200.5 V221.8 A14 15 0 0 0 432.5 221.8 V200.5 Z" fill="#e8805c"/><path d="M404.5 200.5 V220.8 H405.5 A13 12.5 0 0 0 431.5 220.8 H432.5 V200.5 Z" fill="url(#pd)"/><path d="M404.5 200.5 V220.8 H405.5 A13 12.5 0 0 0 431.5 220.8 H432.5 V200.5 Z" fill="url(#pdl)"/><rect x="432.5" y="200.5" width="28" height="510.5" fill="url(#pc)"/><rect x="432.5" y="200.5" width="28" height="510.5" fill="url(#pcl)"/><path d="M432.5 200.5 V471.6 A14 15 0 0 0 460.5 471.6 V200.5 Z" fill="#e8805c"/><path d="M432.5 200.5 V470.6 H433.5 A13 12.5 0 0 0 459.5 470.6 H460.5 V200.5 Z" fill="url(#po)"/><path d="M432.5 200.5 V319.3 A14 15 0 0 0 460.5 319.3 V200.5 Z" fill="#e8805c"/><path d="M432.5 200.5 V318.3 H433.5 A13 12.5 0 0 0 459.5 318.3 H460.5 V200.5 Z" fill="url(#pw)"/><path d="M432.5 200.5 V318.3 H433.5 A13 12.5 0 0 0 459.5 318.3 H460.5 V200.5 Z" fill="url(#pwv)"/><path d="M432.5 200.5 V244.8 A14 15 0 0 0 460.5 244.8 V200.5 Z" fill="#e8805c"/><path d="M432.5 200.5 V243.8 H433.5 A13 12.5 0 0 0 459.5 243.8 H460.5 V200.5 Z" fill="url(#pd)"/><path d="M432.5 200.5 V243.8 H433.5 A13 12.5 0 0 0 459.5 243.8 H460.5 V200.5 Z" fill="url(#pdl)"/><rect x="460.5" y="200.5" width="28" height="510.5" fill="url(#pc)"/><rect x="460.5" y="200.5" width="28" height="510.5" fill="url(#pcl)"/><path d="M460.5 200.5 V477.4 A14 15 0 0 0 488.5 477.4 V200.5 Z" fill="#e8805c"/><path d="M460.5 200.5 V476.4 H461.5 A13 12.5 0 0 0 487.5 476.4 H488.5 V200.5 Z" fill="url(#po)"/><path d="M460.5 200.5 V316.8 A14 15 0 0 0 488.5 316.8 V200.5 Z" fill="#e8805c"/><path d="M460.5 200.5 V315.8 H461.5 A13 12.5 0 0 0 487.5 315.8 H488.5 V200.5 Z" fill="url(#pw)"/><path d="M460.5 200.5 V315.8 H461.5 A13 12.5 0 0 0 487.5 315.8 H488.5 V200.5 Z" fill="url(#pwv)"/><path d="M460.5 200.5 V256.7 A14 15 0 0 0 488.5 256.7 V200.5 Z" fill="#e8805c"/><path d="M460.5 200.5 V255.7 H461.5 A13 12.5 0 0 0 487.5 255.7 H488.5 V200.5 Z" fill="url(#pd)"/><path d="M460.5 200.5 V255.7 H461.5 A13 12.5 0 0 0 487.5 255.7 H488.5 V200.5 Z" fill="url(#pdl)"/><rect x="488.5" y="200.5" width="28" height="510.5" fill="url(#pc)"/><rect x="488.5" y="200.5" width="28" height="510.5" fill="url(#pcl)"/><path d="M488.5 200.5 V484.6 A14 15 0 0 0 516.5 484.6 V200.5 Z" fill="#e8805c"/><path d="M488.5 200.5 V483.6 H489.5 A13 12.5 0 0 0 515.5 483.6 H516.5 V200.5 Z" fill="url(#po)"/><path d="M488.5 200.5 V314.7 A14 15 0 0 0 516.5 314.7 V200.5 Z" fill="#e8805c"/><path d="M488.5 200.5 V313.7 H489.5 A13 12.5 0 0 0 515.5 313.7 H516.5 V200.5 Z" fill="url(#pw)"/><path d="M488.5 200.5 V313.7 H489.5 A13 12.5 0 0 0 515.5 313.7 H516.5 V200.5 Z" fill="url(#pwv)"/><path d="M488.5 200.5 V264.6 A14 15 0 0 0 516.5 264.6 V200.5 Z" fill="#e8805c"/><path d="M488.5 200.5 V263.6 H489.5 A13 12.5 0 0 0 515.5 263.6 H516.5 V200.5 Z" fill="url(#pd)"/><path d="M488.5 200.5 V263.6 H489.5 A13 12.5 0 0 0 515.5 263.6 H516.5 V200.5 Z" fill="url(#pdl)"/><rect x="516.5" y="200.5" width="28" height="510.5" fill="url(#pc)"/><rect x="516.5" y="200.5" width="28" height="510.5" fill="url(#pcl)"/><path d="M516.5 200.5 V493.9 A14 15 0 0 0 544.5 493.9 V200.5 Z" fill="#e8805c"/><path d="M516.5 200.5 V492.9 H517.5 A13 12.5 0 0 0 543.5 492.9 H544.5 V200.5 Z" fill="url(#po)"/><path d="M516.5 200.5 V313.2 A14 15 0 0 0 544.5 313.2 V200.5 Z" fill="#e8805c"/><path d="M516.5 200.5 V312.2 H517.5 A13 12.5 0 0 0 543.5 312.2 H544.5 V200.5 Z" fill="url(#pw)"/><path d="M516.5 200.5 V312.2 H517.5 A13 12.5 0 0 0 543.5 312.2 H544.5 V200.5 Z" fill="url(#pwv)"/><path d="M516.5 200.5 V268.6 A14 15 0 0 0 544.5 268.6 V200.5 Z" fill="#e8805c"/><path d="M516.5 200.5 V267.6 H517.5 A13 12.5 0 0 0 543.5 267.6 H544.5 V200.5 Z" fill="url(#pd)"/><path d="M516.5 200.5 V267.6 H517.5 A13 12.5 0 0 0 543.5 267.6 H544.5 V200.5 Z" fill="url(#pdl)"/><rect x="544.5" y="200.5" width="28" height="510.5" fill="url(#pc)"/><rect x="544.5" y="200.5" width="28" height="510.5" fill="url(#pcl)"/><path d="M544.5 200.5 V505.1 A14 15 0 0 0 572.5 505.1 V200.5 Z" fill="#e8805c"/><path d="M544.5 200.5 V504.1 H545.5 A13 12.5 0 0 0 571.5 504.1 H572.5 V200.5 Z" fill="url(#po)"/><path d="M544.5 200.5 V310.7 A14 15 0 0 0 572.5 310.7 V200.5 Z" fill="#e8805c"/><path d="M544.5 200.5 V309.7 H545.5 A13 12.5 0 0 0 571.5 309.7 H572.5 V200.5 Z" fill="url(#pw)"/><path d="M544.5 200.5 V309.7 H545.5 A13 12.5 0 0 0 571.5 309.7 H572.5 V200.5 Z" fill="url(#pwv)"/><path d="M544.5 200.5 V268.6 A14 15 0 0 0 572.5 268.6 V200.5 Z" fill="#e8805c"/><path d="M544.5 200.5 V267.6 H545.5 A13 12.5 0 0 0 571.5 267.6 H572.5 V200.5 Z" fill="url(#pd)"/><path d="M544.5 200.5 V267.6 H545.5 A13 12.5 0 0 0 571.5 267.6 H572.5 V200.5 Z" fill="url(#pdl)"/><rect x="572.5" y="200.5" width="28" height="510.5" fill="url(#pc)"/><rect x="572.5" y="200.5" width="28" height="510.5" fill="url(#pcl)"/><path d="M572.5 200.5 V518.4 A14 15 0 0 0 600.5 518.4 V200.5 Z" fill="#e8805c"/><path d="M572.5 200.5 V517.4 H573.5 A13 12.5 0 0 0 599.5 517.4 H600.5 V200.5 Z" fill="url(#po)"/><path d="M572.5 200.5 V305.7 A14 15 0 0 0 600.5 305.7 V200.5 Z" fill="#e8805c"/><path d="M572.5 200.5 V304.7 H573.5 A13 12.5 0 0 0 599.5 304.7 H600.5 V200.5 Z" fill="url(#pw)"/><path d="M572.5 200.5 V304.7 H573.5 A13 12.5 0 0 0 599.5 304.7 H600.5 V200.5 Z" fill="url(#pwv)"/><path d="M572.5 200.5 V264.6 A14 15 0 0 0 600.5 264.6 V200.5 Z" fill="#e8805c"/><path d="M572.5 200.5 V263.6 H573.5 A13 12.5 0 0 0 599.5 263.6 H600.5 V200.5 Z" fill="url(#pd)"/><path d="M572.5 200.5 V263.6 H573.5 A13 12.5 0 0 0 599.5 263.6 H600.5 V200.5 Z" fill="url(#pdl)"/><rect x="600.5" y="200.5" width="28" height="510.5" fill="url(#pc)"/><rect x="600.5" y="200.5" width="28" height="510.5" fill="url(#pcl)"/><path d="M600.5 200.5 V533.5 A14 15 0 0 0 628.5 533.5 V200.5 Z" fill="#e8805c"/><path d="M600.5 200.5 V532.5 H601.5 A13 12.5 0 0 0 627.5 532.5 H628.5 V200.5 Z" fill="url(#po)"/><path d="M600.5 200.5 V298.1 A14 15 0 0 0 628.5 298.1 V200.5 Z" fill="#e8805c"/><path d="M600.5 200.5 V297.1 H601.5 A13 12.5 0 0 0 627.5 297.1 H628.5 V200.5 Z" fill="url(#pw)"/><path d="M600.5 200.5 V297.1 H601.5 A13 12.5 0 0 0 627.5 297.1 H628.5 V200.5 Z" fill="url(#pwv)"/><path d="M600.5 200.5 V252.7 A14 15 0 0 0 628.5 252.7 V200.5 Z" fill="#e8805c"/><path d="M600.5 200.5 V251.7 H601.5 A13 12.5 0 0 0 627.5 251.7 H628.5 V200.5 Z" fill="url(#pd)"/><path d="M600.5 200.5 V251.7 H601.5 A13 12.5 0 0 0 627.5 251.7 H628.5 V200.5 Z" fill="url(#pdl)"/><rect x="628.5" y="200.5" width="28" height="510.5" fill="url(#pc)"/><rect x="628.5" y="200.5" width="28" height="510.5" fill="url(#pcl)"/><path d="M628.5 200.5 V551.2 A14 15 0 0 0 656.5 551.2 V200.5 Z" fill="#e8805c"/><path d="M628.5 200.5 V550.2 H629.5 A13 12.5 0 0 0 655.5 550.2 H656.5 V200.5 Z" fill="url(#po)"/><path d="M628.5 200.5 V286.2 A14 15 0 0 0 656.5 286.2 V200.5 Z" fill="#e8805c"/><path d="M628.5 200.5 V285.2 H629.5 A13 12.5 0 0 0 655.5 285.2 H656.5 V200.5 Z" fill="url(#pw)"/><path d="M628.5 200.5 V285.2 H629.5 A13 12.5 0 0 0 655.5 285.2 H656.5 V200.5 Z" fill="url(#pwv)"/><path d="M628.5 200.5 V236.9 A14 15 0 0 0 656.5 236.9 V200.5 Z" fill="#e8805c"/><path d="M628.5 200.5 V235.9 H629.5 A13 12.5 0 0 0 655.5 235.9 H656.5 V200.5 Z" fill="url(#pd)"/><path d="M628.5 200.5 V235.9 H629.5 A13 12.5 0 0 0 655.5 235.9 H656.5 V200.5 Z" fill="url(#pdl)"/><rect x="656.5" y="200.5" width="28" height="510.5" fill="url(#pc)"/><rect x="656.5" y="200.5" width="28" height="510.5" fill="url(#pcl)"/><path d="M656.5 200.5 V571.7 A14 15 0 0 0 684.5 571.7 V200.5 Z" fill="#e8805c"/><path d="M656.5 200.5 V570.7 H657.5 A13 12.5 0 0 0 683.5 570.7 H684.5 V200.5 Z" fill="url(#po)"/><path d="M656.5 200.5 V269.3 A14 15 0 0 0 684.5 269.3 V200.5 Z" fill="#e8805c"/><path d="M656.5 200.5 V268.3 H657.5 A13 12.5 0 0 0 683.5 268.3 H684.5 V200.5 Z" fill="url(#pw)"/><path d="M656.5 200.5 V268.3 H657.5 A13 12.5 0 0 0 683.5 268.3 H684.5 V200.5 Z" fill="url(#pwv)"/><path d="M656.5 200.5 V211.7 A14 15 0 0 0 684.5 211.7 V200.5 Z" fill="#e8805c"/><path d="M656.5 200.5 V210.7 H657.5 A13 12.5 0 0 0 683.5 210.7 H684.5 V200.5 Z" fill="url(#pd)"/><path d="M656.5 200.5 V210.7 H657.5 A13 12.5 0 0 0 683.5 210.7 H684.5 V200.5 Z" fill="url(#pdl)"/><rect x="684.5" y="200.5" width="28" height="510.5" fill="url(#pc)"/><rect x="684.5" y="200.5" width="28" height="510.5" fill="url(#pcl)"/><path d="M684.5 200.5 V589.3 A14 15 0 0 0 712.5 589.3 V200.5 Z" fill="#e8805c"/><path d="M684.5 200.5 V588.3 H685.5 A13 12.5 0 0 0 711.5 588.3 H712.5 V200.5 Z" fill="url(#po)"/><path d="M684.5 200.5 V242.3 A14 15 0 0 0 712.5 242.3 V200.5 Z" fill="#e8805c"/><path d="M684.5 200.5 V241.3 H685.5 A13 12.5 0 0 0 711.5 241.3 H712.5 V200.5 Z" fill="url(#pw)"/><path d="M684.5 200.5 V241.3 H685.5 A13 12.5 0 0 0 711.5 241.3 H712.5 V200.5 Z" fill="url(#pwv)"/><path d="M12.5 172.5 V711 M40.5 200.5 V711 M68.5 200.5 V711 M96.5 200.5 V711 M124.5 200.5 V711 M152.5 200.5 V711 M180.5 200.5 V711 M208.5 200.5 V711 M236.5 200.5 V711 M264.5 200.5 V711 M292.5 200.5 V711 M320.5 200.5 V711 M348.5 200.5 V711 M376.5 200.5 V711 M404.5 200.5 V711 M432.5 200.5 V711 M460.5 200.5 V711 M488.5 200.5 V711 M516.5 200.5 V711 M544.5 200.5 V711 M572.5 200.5 V711 M600.5 200.5 V711 M628.5 200.5 V711 M656.5 200.5 V711 M684.5 200.5 V711 M712.5 172.5 V711 M12.5 172.5 H712.5 M12.5 200.5 H712.5 M12.5 711 H712.5" stroke="#000" stroke-width="1" fill="none"/><g font-family="Liberation Sans,sans-serif" text-anchor="middle" fill="#000"><text x="26.5" y="489.7" font-size="11">867</text><text x="26.5" y="589.9" font-size="8.3">1149</text><text x="25.7" y="708" font-size="11" font-weight="bold">1</text><circle cx="25.5" cy="715.6" r="3.4"/><text x="54.5" y="213.6" font-size="11">100</text><text x="54.5" y="492.6" font-size="11">875</text><text x="54.5" y="572.3" font-size="8.3">1100</text><text x="53.7" y="708" font-size="11" font-weight="bold">2</text><circle cx="53.5" cy="715.6" r="3.4"/><text x="82.5" y="238.8" font-size="11">170</text><text x="82.5" y="488.6" font-size="11">864</text><text x="82.5" y="551.8" font-size="8.3">1043</text><text x="81.7" y="708" font-size="11" font-weight="bold">3</text><circle cx="81.5" cy="715.6" r="3.4"/><text x="110.5" y="254.6" font-size="11">214</text><text x="110.5" y="485.8" font-size="11">856</text><text x="110.5" y="535.4" font-size="11">994</text><text x="109.7" y="708" font-size="11" font-weight="bold">4</text><circle cx="109.5" cy="715.6" r="3.4"/><text x="138.5" y="266.5" font-size="11">247</text><text x="138.5" y="476.0" font-size="11">829</text><text x="138.5" y="520.3" font-size="11">952</text><text x="137.7" y="708" font-size="11" font-weight="bold">5</text><circle cx="137.5" cy="715.6" r="3.4"/><text x="166.5" y="270.5" font-size="11">258</text><text x="166.5" y="466.7" font-size="11">803</text><text x="166.5" y="507.0" font-size="11">915</text><text x="165.7" y="708" font-size="11" font-weight="bold">6</text><circle cx="165.5" cy="715.6" r="3.4"/><text x="194.5" y="270.5" font-size="11">258</text><text x="194.5" y="454.8" font-size="11">770</text><text x="194.5" y="495.8" font-size="11">884</text><text x="193.7" y="708" font-size="11" font-weight="bold">7</text><circle cx="193.5" cy="715.6" r="3.4"/><text x="222.5" y="266.5" font-size="11">247</text><text x="222.5" y="437.2" font-size="11">721</text><text x="222.5" y="486.5" font-size="11">858</text><text x="221.7" y="708" font-size="11" font-weight="bold">8</text><circle cx="221.5" cy="715.6" r="3.4"/><text x="250.5" y="258.6" font-size="11">225</text><text x="250.5" y="418.8" font-size="11">670</text><text x="250.5" y="479.3" font-size="11">838</text><text x="249.7" y="708" font-size="11" font-weight="bold">9</text><circle cx="249.5" cy="715.6" r="3.4"/><text x="278.5" y="246.7" font-size="11">192</text><text x="278.5" y="396.8" font-size="11">609</text><text x="278.5" y="473.5" font-size="11">822</text><text x="277.7" y="708" font-size="11" font-weight="bold">10</text><circle cx="277.5" cy="715.6" r="3.4"/><text x="306.5" y="223.7" font-size="11">128</text><text x="306.5" y="367.3" font-size="11">527</text><text x="306.5" y="468.8" font-size="11">809</text><text x="305.7" y="708" font-size="11" font-weight="bold">11</text><circle cx="305.5" cy="715.6" r="3.4"/><text x="334.5" y="213.6" font-size="11">100</text><text x="334.5" y="351.5" font-size="11">483</text><text x="334.5" y="465.6" font-size="11">800</text><text x="333.7" y="708" font-size="11" font-weight="bold">12</text><circle cx="333.5" cy="715.6" r="3.4"/><text x="362.5" y="338.9" font-size="11">448</text><text x="362.5" y="464.2" font-size="11">796</text><text x="361.7" y="708" font-size="11" font-weight="bold">13</text><circle cx="361.5" cy="715.6" r="3.4"/><text x="390.5" y="213.6" font-size="11">100</text><text x="390.5" y="330.6" font-size="11">425</text><text x="390.5" y="465.6" font-size="11">800</text><text x="389.7" y="708" font-size="11" font-weight="bold">14</text><circle cx="389.5" cy="715.6" r="3.4"/><text x="418.5" y="223.7" font-size="11">128</text><text x="418.5" y="325.9" font-size="11">412</text><text x="418.5" y="468.8" font-size="11">809</text><text x="417.7" y="708" font-size="11" font-weight="bold">15</text><circle cx="417.5" cy="715.6" r="3.4"/><text x="446.5" y="246.7" font-size="11">192</text><text x="446.5" y="321.2" font-size="11">399</text><text x="446.5" y="473.5" font-size="11">822</text><text x="445.7" y="708" font-size="11" font-weight="bold">16</text><circle cx="445.5" cy="715.6" r="3.4"/><text x="474.5" y="258.6" font-size="11">225</text><text x="474.5" y="318.7" font-size="11">392</text><text x="474.5" y="479.3" font-size="11">838</text><text x="473.7" y="708" font-size="11" font-weight="bold">17</text><circle cx="473.5" cy="715.6" r="3.4"/><text x="502.5" y="266.5" font-size="11">247</text><text x="502.5" y="316.6" font-size="11">386</text><text x="502.5" y="486.5" font-size="11">858</text><text x="501.7" y="708" font-size="11" font-weight="bold">18</text><circle cx="501.5" cy="715.6" r="3.4"/><text x="530.5" y="270.5" font-size="11">258</text><text x="530.5" y="315.1" font-size="11">382</text><text x="530.5" y="495.8" font-size="11">884</text><text x="529.7" y="708" font-size="11" font-weight="bold">19</text><circle cx="529.5" cy="715.6" r="3.4"/><text x="558.5" y="270.5" font-size="11">258</text><text x="558.5" y="312.6" font-size="11">375</text><text x="558.5" y="507.0" font-size="11">915</text><text x="557.7" y="708" font-size="11" font-weight="bold">20</text><circle cx="557.5" cy="715.6" r="3.4"/><text x="586.5" y="266.5" font-size="11">247</text><text x="586.5" y="307.6" font-size="11">361</text><text x="586.5" y="520.3" font-size="11">952</text><text x="585.7" y="708" font-size="11" font-weight="bold">21</text><circle cx="585.5" cy="715.6" r="3.4"/><text x="614.5" y="254.6" font-size="11">214</text><text x="614.5" y="300.0" font-size="11">340</text><text x="614.5" y="535.4" font-size="11">994</text><text x="613.7" y="708" font-size="11" font-weight="bold">22</text><circle cx="613.5" cy="715.6" r="3.4"/><text x="642.5" y="238.8" font-size="11">170</text><text x="642.5" y="288.1" font-size="11">307</text><text x="642.5" y="551.8" font-size="8.3">1043</text><text x="641.7" y="708" font-size="11" font-weight="bold">23</text><circle cx="641.5" cy="715.6" r="3.4"/><text x="670.5" y="213.6" font-size="11">100</text><text x="670.5" y="271.2" font-size="11">260</text><text x="670.5" y="572.3" font-size="8.3">1100</text><text x="669.7" y="708" font-size="11" font-weight="bold">24</text><circle cx="669.5" cy="715.6" r="3.4"/><text x="698.5" y="244.2" font-size="11">185</text><text x="698.5" y="589.9" font-size="8.3">1149</text><text x="697.7" y="708" font-size="11" font-weight="bold">25</text><circle cx="697.5" cy="715.6" r="3.4"/></g><rect x="7" y="727" width="745" height="2.6" fill="#000"/><rect x="7" y="729.5" width="706" height="62" fill="#fff"/><path d="M12.5 729 V792 M40.5 729 V792 M68.5 729 V792 M96.5 729 V792 M124.5 729 V792 M152.5 729 V792 M180.5 729 V792 M208.5 729 V792 M236.5 729 V792 M264.5 729 V792 M292.5 729 V792 M320.5 729 V792 M348.5 729 V792 M376.5 729 V792 M404.5 729 V792 M432.5 729 V792 M460.5 729 V792 M488.5 729 V792 M516.5 729 V792 M544.5 729 V792 M572.5 729 V792 M600.5 729 V792 M628.5 729 V792 M656.5 729 V792 M684.5 729 V792 M712.5 729 V792 M12.5 744.3 H712.5 M12.5 760.7 H712.5 M12.5 776.9 H712.5 M12.5 791.4 H712.5 " stroke="#000" stroke-width="1.6" fill="none"/><g font-family="Liberation Sans,sans-serif" fill="#000"><text x="14.7" y="739.8" font-size="8.3">1460</text><text x="42.7" y="739.8" font-size="8.3">1460</text><text x="70.7" y="739.8" font-size="8.3">1460</text><text x="98.7" y="739.8" font-size="8.3">1460</text><text x="126.7" y="739.8" font-size="8.3">1460</text><text x="154.7" y="739.8" font-size="8.3">1460</text><text x="182.7" y="739.8" font-size="8.3">1460</text><text x="210.7" y="739.8" font-size="8.3">1460</text><text x="238.7" y="739.8" font-size="8.3">1460</text><text x="266.7" y="739.8" font-size="8.3">1460</text><text x="294.7" y="739.8" font-size="8.3">1460</text><text x="322.7" y="739.8" font-size="8.3">1460</text><text x="350.7" y="739.8" font-size="8.3">1460</text><text x="378.7" y="739.8" font-size="8.3">1460</text><text x="406.7" y="739.8" font-size="8.3">1460</text><text x="434.7" y="739.8" font-size="8.3">1460</text><text x="462.7" y="739.8" font-size="8.3">1460</text><text x="490.7" y="739.8" font-size="8.3">1460</text><text x="518.7" y="739.8" font-size="8.3">1460</text><text x="546.7" y="739.8" font-size="8.3">1460</text><text x="574.7" y="739.8" font-size="8.3">1460</text><text x="602.7" y="739.8" font-size="8.3">1460</text><text x="630.7" y="739.8" font-size="8.3">1460</text><text x="658.7" y="739.8" font-size="8.3">1460</text><text x="686.7" y="739.8" font-size="8.3">1460</text><text x="14.7" y="755.5" font-size="8.3">1149</text><text x="42.7" y="755.5" font-size="8.3">1100</text><text x="70.7" y="755.5" font-size="8.3">1043</text><text x="97.7" y="755.5" font-size="11">994</text><text x="125.7" y="755.5" font-size="11">952</text><text x="153.7" y="755.5" font-size="11">915</text><text x="181.7" y="755.5" font-size="11">884</text><text x="209.7" y="755.5" font-size="11">858</text><text x="237.7" y="755.5" font-size="11">838</text><text x="265.7" y="755.5" font-size="11">822</text><text x="293.7" y="755.5" font-size="11">809</text><text x="321.7" y="755.5" font-size="11">800</text><text x="349.7" y="755.5" font-size="11">796</text><text x="377.7" y="755.5" font-size="11">800</text><text x="405.7" y="755.5" font-size="11">809</text><text x="433.7" y="755.5" font-size="11">822</text><text x="461.7" y="755.5" font-size="11">838</text><text x="489.7" y="755.5" font-size="11">858</text><text x="517.7" y="755.5" font-size="11">884</text><text x="545.7" y="755.5" font-size="11">915</text><text x="573.7" y="755.5" font-size="11">952</text><text x="601.7" y="755.5" font-size="11">994</text><text x="630.7" y="755.5" font-size="8.3">1043</text><text x="658.7" y="755.5" font-size="8.3">1100</text><text x="686.7" y="755.5" font-size="8.3">1149</text><text x="13.7" y="771.8" font-size="11">867</text><text x="41.7" y="771.8" font-size="11">875</text><text x="69.7" y="771.8" font-size="11">864</text><text x="97.7" y="771.8" font-size="11">856</text><text x="125.7" y="771.8" font-size="11">829</text><text x="153.7" y="771.8" font-size="11">803</text><text x="181.7" y="771.8" font-size="11">770</text><text x="209.7" y="771.8" font-size="11">721</text><text x="237.7" y="771.8" font-size="11">670</text><text x="265.7" y="771.8" font-size="11">609</text><text x="293.7" y="771.8" font-size="11">527</text><text x="321.7" y="771.8" font-size="11">483</text><text x="349.7" y="771.8" font-size="11">448</text><text x="377.7" y="771.8" font-size="11">425</text><text x="405.7" y="771.8" font-size="11">412</text><text x="433.7" y="771.8" font-size="11">399</text><text x="461.7" y="771.8" font-size="11">392</text><text x="489.7" y="771.8" font-size="11">386</text><text x="517.7" y="771.8" font-size="11">382</text><text x="545.7" y="771.8" font-size="11">375</text><text x="573.7" y="771.8" font-size="11">361</text><text x="601.7" y="771.8" font-size="11">340</text><text x="629.7" y="771.8" font-size="11">307</text><text x="657.7" y="771.8" font-size="11">260</text><text x="685.7" y="771.8" font-size="11">185</text><text x="13.7" y="787.6" font-size="11">0</text><text x="41.7" y="787.6" font-size="11">100</text><text x="69.7" y="787.6" font-size="11">170</text><text x="97.7" y="787.6" font-size="11">214</text><text x="125.7" y="787.6" font-size="11">247</text><text x="153.7" y="787.6" font-size="11">258</text><text x="181.7" y="787.6" font-size="11">258</text><text x="209.7" y="787.6" font-size="11">247</text><text x="237.7" y="787.6" font-size="11">225</text><text x="265.7" y="787.6" font-size="11">192</text><text x="293.7" y="787.6" font-size="11">128</text><text x="321.7" y="787.6" font-size="11">100</text><text x="349.7" y="787.6" font-size="11">0</text><text x="377.7" y="787.6" font-size="11">100</text><text x="405.7" y="787.6" font-size="11">128</text><text x="433.7" y="787.6" font-size="11">192</text><text x="461.7" y="787.6" font-size="11">225</text><text x="489.7" y="787.6" font-size="11">247</text><text x="517.7" y="787.6" font-size="11">258</text><text x="545.7" y="787.6" font-size="11">258</text><text x="573.7" y="787.6" font-size="11">247</text><text x="601.7" y="787.6" font-size="11">214</text><text x="629.7" y="787.6" font-size="11">170</text><text x="657.7" y="787.6" font-size="11">100</text><text x="685.7" y="787.6" font-size="11">0</text></g></svg>
<div class="sunk1" style="left:4px;top:796px;width:915px;height:23px;"></div>
<svg style="left:903px;top:804px" width="14" height="14"><path d="M13 1 L1 13 M13 5 L5 13 M13 9 L9 13" stroke="#808080" stroke-width="1.2"/><path d="M13 2 L2 13 M13 6 L6 13 M13 10 L10 13" stroke="#fff" stroke-width="1"/></svg>
<div style="left:757px;top:141px;width:160px;height:652px;border:1px solid;border-color:#fff #808080 #808080 #fff;"></div>
<div class="pressed2 dith" style="left:759px;top:143px;width:154px;height:19px;line-height:16px;text-align:center;"><span style="letter-spacing:0.31px">Слои</span></div>
<div class="raised" style="left:759px;top:166px;width:154px;height:20px;line-height:16px;text-align:center;"><span style="letter-spacing:0.02px">Промежуточные результаты</span></div>
<div class="raised" style="left:759px;top:190px;width:154px;height:20px;line-height:16px;text-align:center;"><span style="letter-spacing:0.12px">Настройки</span></div>
<div class="sunk2" style="left:762px;top:217px;width:151px;height:101px;background:#fff;"></div>
<div style="left:798px;top:221px;width:113px;height:17px;background:#d1cec7;"></div>
<div style="left:768px;top:223px;width:13px;height:13px;background:#fff;border:2px solid #000;"><svg style="left:0;top:0" width="9" height="9"><path d="M1 4 L3.5 6.8 L8 1.5" stroke="#000" stroke-width="1.8" fill="none"/></svg></div>
<svg style="left:784px;top:223px" width="14" height="12"><path d="M1 1 L8 8.5 L13 4.5" stroke="#e06040" stroke-width="1.8" fill="none"/></svg>
<div style="left:800px;top:222px;width:110px;height:14px;line-height:14px;font-size:11px;"><span style="letter-spacing:0.09px">Основной слой</span></div>
<div style="left:768px;top:240px;width:13px;height:13px;background:#fff;border:2px solid #000;"><svg style="left:0;top:0" width="9" height="9"><path d="M1 4 L3.5 6.8 L8 1.5" stroke="#000" stroke-width="1.8" fill="none"/></svg></div>
<div style="left:785px;top:241px;width:11px;height:11px;background:#fff;border:1px solid #000;"></div>
<div style="left:800px;top:240px;width:110px;height:14px;line-height:14px;font-size:11px;"><span style="letter-spacing:-0.39px">Слой №1</span></div>
<div style="left:768px;top:257px;width:13px;height:13px;background:#fff;border:2px solid #000;"><svg style="left:0;top:0" width="9" height="9"><path d="M1 4 L3.5 6.8 L8 1.5" stroke="#000" stroke-width="1.8" fill="none"/></svg></div>
<div style="left:785px;top:258px;width:11px;height:11px;background:#fff;border:1px solid #000;"></div>
<div style="left:800px;top:257px;width:110px;height:14px;line-height:14px;font-size:11px;"><span style="letter-spacing:-0.39px">Слой №2</span></div>
<div style="left:768px;top:274px;width:13px;height:13px;background:#fff;border:2px solid #000;"><svg style="left:0;top:0" width="9" height="9"><path d="M1 4 L3.5 6.8 L8 1.5" stroke="#000" stroke-width="1.8" fill="none"/></svg></div>
<div style="left:785px;top:274px;width:11px;height:11px;background:#fff;border:1px solid #000;"></div>
<div style="left:800px;top:273px;width:110px;height:14px;line-height:14px;font-size:11px;"><span style="letter-spacing:-0.39px">Слой №3</span></div>
<div style="left:760px;top:322px;width:150px;height:14px;line-height:14px;text-align:center;font-weight:bold;font-size:11px;"><span style="letter-spacing:0.75px">Цвет</span></div>
<div style="left:760px;top:346px;width:150px;height:14px;line-height:14px;text-align:center;font-weight:bold;font-size:11px;"><span style="letter-spacing:0.69px">Геометрия</span></div>
<div style="left:912px;top:319px;width:1px;height:22px;background:#808080;"></div>
<div style="left:912px;top:343px;width:1px;height:22px;background:#808080;"></div>
<div style="left:912px;top:367px;width:1px;height:22px;background:#808080;"></div>
<div class="pressed2 dith" style="left:762px;top:368px;width:146px;height:19px;line-height:16px;text-align:center;font-weight:bold;"><span style="letter-spacing:0.74px">Карниз</span></div>
<div class="raised1" style="left:766px;top:395px;width:142px;height:24px;"></div>
<div class="sunk2" style="left:771px;top:400px;width:13px;height:13px;background:#fff;"><svg style="left:1px;top:1px" width="9" height="9"><path d="M1 4 L3.5 6.8 L8 1.5" stroke="#000" stroke-width="1.8" fill="none"/></svg></div>
<div style="left:789px;top:400px;width:115px;height:14px;line-height:14px;color:#2c3c68;"><span style="letter-spacing:0.10px">видимость карниза</span></div>
<div class="raised1" style="left:766px;top:419px;width:142px;height:10px;"></div>
<div class="raised1" style="left:766px;top:429px;width:142px;height:34px;"></div>
<div class="raised" style="left:775px;top:433px;width:23px;height:22px;"><svg style="left:2px;top:2px" width="17" height="16"><path d="M1 2.5 H6 L7.5 4 H14 V14 H1 Z" fill="#e6e28a" stroke="#5c5c2a" stroke-width="1"/><path d="M6.5 9.5 H13 M9.75 6.2 V12.8" stroke="#1d6b1d" stroke-width="3.4"/><path d="M6.5 9.5 H13 M9.75 6.2 V12.8" stroke="#58c040" stroke-width="1.8"/></svg></div>
<div class="raised" style="left:798px;top:433px;width:23px;height:22px;"><svg style="left:2px;top:2px" width="17" height="16"><path d="M1 2.5 H6 L7.5 4 H14 V14 H1 Z" fill="#e6e28a" stroke="#5c5c2a" stroke-width="1"/><rect x="5" y="8" width="8" height="3.4" fill="#d05a3a" stroke="#7a2a18" stroke-width=".8"/></svg></div>
<div class="raised" style="left:827px;top:433px;width:36px;height:22px;"><svg style="left:4px;top:4px" width="30" height="14"><path d="M14 1.5 H1.5 V11 H14" stroke="#000" stroke-width="2.2" fill="none"/><path d="M21 5 H27 L24 8.5 Z" fill="#808080"/><path d="M27.5 5 L24.5 8.8" stroke="#fff" stroke-width=".8"/></svg></div>
<div class="raised" style="left:863px;top:433px;width:36px;height:22px;"><svg style="left:2px;top:4px" width="32" height="14"><path d="M1 1.5 H13.5 V11 H1" stroke="#000" stroke-width="2.2" fill="none"/><path d="M22 5 H28 L25 8.5 Z" fill="#808080"/><path d="M28.5 5 L25.5 8.8" stroke="#fff" stroke-width=".8"/></svg></div>
<div class="sunk2" style="left:768px;top:465px;width:139px;height:104px;background:#fff;"></div>
<svg style="left:772px;top:469px" width="16" height="14"><path d="M1 2 L8.5 11 L15 5.5" stroke="#d84838" stroke-width="1.4" fill="none"/></svg>
<div style="left:788px;top:469px;width:46px;height:17px;background:#2a3a6e;border:1px dotted #c8b070;color:#fff;line-height:15px;padding-left:1px;"><span style="letter-spacing:0.32px">Основа</span></div>
<div style="left:775px;top:488px;width:11px;height:11px;background:#fff;border:1px solid #000;"></div>
<div style="left:791px;top:488px;width:100px;height:14px;line-height:14px;"><span style="letter-spacing:-0.35px">Слой № 1</span></div>
<div style="left:775px;top:506px;width:11px;height:11px;background:#fff;border:1px solid #000;"></div>
<div style="left:791px;top:504px;width:100px;height:14px;line-height:14px;"><span style="letter-spacing:-0.35px">Слой № 2</span></div>
<div class="raised1" style="left:766px;top:575px;width:142px;height:29px;"></div>
<svg style="left:772px;top:576px" width="12" height="12"><circle cx="6" cy="6" r="5" fill="#fff"/><path d="M1.7 10.3 A6 6 0 0 1 10.3 1.7" stroke="#808080" stroke-width="1.2" fill="none"/><path d="M2.8 9.2 A4.5 4.5 0 0 1 9.2 2.8" stroke="#404040" stroke-width="1" fill="none"/><path d="M10.3 1.7 A6 6 0 0 1 1.7 10.3" stroke="#fff" stroke-width="1.2" fill="none"/></svg>
<svg style="left:772px;top:590px" width="12" height="12"><circle cx="6" cy="6" r="5" fill="#fff"/><path d="M1.7 10.3 A6 6 0 0 1 10.3 1.7" stroke="#808080" stroke-width="1.2" fill="none"/><path d="M2.8 9.2 A4.5 4.5 0 0 1 9.2 2.8" stroke="#404040" stroke-width="1" fill="none"/><path d="M10.3 1.7 A6 6 0 0 1 1.7 10.3" stroke="#fff" stroke-width="1.2" fill="none"/><circle cx="6" cy="6" r="1.8" fill="#000"/></svg>
<div style="left:790px;top:575px;width:50px;height:14px;line-height:14px;"><span style="letter-spacing:0.09px">Цвет</span></div>
<div style="left:790px;top:589px;width:50px;height:14px;line-height:14px;"><span style="letter-spacing:0.09px">Заливка</span></div>
<svg style="left:848px;top:575px" width="32" height="28"><rect x=".5" y=".5" width="31" height="27" fill="#efd2a0" stroke="#000" stroke-width="1.4"/><path d="M10 27 L27 2" stroke="#cfb084" stroke-width="3"/><path d="M13 27 L29.5 3" stroke="#f6e4bc" stroke-width="1.6"/></svg>
<div class="raised" style="left:882px;top:579px;width:23px;height:20px;"><svg style="left:2px;top:1px" width="17" height="16"><rect x=".5" y=".5" width="16" height="15" fill="#fff" stroke="#000"/><rect x=".5" y=".5" width="16" height="2.5" fill="#000"/><rect x="3" y="4" width="11" height="11" fill="#000"/>
<rect x="4" y="5" width="2.6" height="2.6" fill="#e05030"/><rect x="7.3" y="5" width="2.6" height="2.6" fill="#e8e030"/><rect x="10.6" y="5" width="2.6" height="2.6" fill="#4060d0"/>
<rect x="4" y="8.3" width="2.6" height="2.6" fill="#808080"/><rect x="7.3" y="8.3" width="2.6" height="2.6" fill="#fff"/><rect x="10.6" y="8.3" width="2.6" height="2.6" fill="#c0c0c0"/>
<rect x="4" y="11.6" width="2.6" height="2.6" fill="#60b040"/><rect x="7.3" y="11.6" width="2.6" height="2.6" fill="#5070d8"/><rect x="10.6" y="11.6" width="2.6" height="2.6" fill="#a050c0"/></svg></div>
<div class="raised1" style="left:766px;top:618px;width:142px;height:23px;"></div>
<div class="sunk2" style="left:769px;top:623px;width:13px;height:13px;background:#fff;"></div>
<div style="left:788px;top:622px;width:50px;height:14px;line-height:14px;font-weight:bold;color:#2c3c70;font-size:12px;"><span style="letter-spacing:0.17px">Фольга</span></div>
<div class="sunk2" style="left:840px;top:620px;width:19px;height:19px;background:#fff;line-height:15px;padding-left:2px;">10</div>
<div class="raised" style="left:860px;top:620px;width:18px;height:10px;"><svg style="left:4px;top:2px" width="8" height="5"><path d="M0 4 H7 L3.5 0 Z" fill="#000"/></svg></div>
<div class="raised" style="left:860px;top:630px;width:18px;height:9px;"><svg style="left:4px;top:1px" width="8" height="5"><path d="M0 0 H7 L3.5 4 Z" fill="#000"/></svg></div>
<div style="left:880px;top:623px;width:25px;height:14px;line-height:14px;"><span style="letter-spacing:0.27px">,мм</span></div>
<div class="sunk1" style="left:767px;top:642px;width:112px;height:29px;"></div>
<svg style="left:772px;top:644px" width="12" height="12"><circle cx="6" cy="6" r="5" fill="#d1cec7"/><path d="M1.7 10.3 A6 6 0 0 1 10.3 1.7" stroke="#808080" stroke-width="1.2" fill="none"/><path d="M2.8 9.2 A4.5 4.5 0 0 1 9.2 2.8" stroke="#404040" stroke-width="1" fill="none"/><path d="M10.3 1.7 A6 6 0 0 1 1.7 10.3" stroke="#fff" stroke-width="1.2" fill="none"/></svg>
<svg style="left:772px;top:658px" width="12" height="12"><circle cx="6" cy="6" r="5" fill="#d1cec7"/><path d="M1.7 10.3 A6 6 0 0 1 10.3 1.7" stroke="#808080" stroke-width="1.2" fill="none"/><path d="M2.8 9.2 A4.5 4.5 0 0 1 9.2 2.8" stroke="#404040" stroke-width="1" fill="none"/><path d="M10.3 1.7 A6 6 0 0 1 1.7 10.3" stroke="#fff" stroke-width="1.2" fill="none"/></svg>
<div style="left:790px;top:643px;width:50px;height:14px;line-height:14px;color:#808080;text-shadow:1px 1px 0 #fff;"><span style="letter-spacing:0.09px">Цвет</span></div>
<div style="left:790px;top:657px;width:50px;height:14px;line-height:14px;color:#808080;text-shadow:1px 1px 0 #fff;"><span style="letter-spacing:0.09px">Заливка</span></div>
<div class="raised" style="left:882px;top:647px;width:23px;height:20px;"><svg style="left:2px;top:1px" width="17" height="16"><rect x=".5" y=".5" width="16" height="15" fill="#fff" stroke="#000"/><rect x=".5" y=".5" width="16" height="2.5" fill="#000"/><rect x="3" y="4" width="11" height="11" fill="#000"/>
<rect x="4" y="5" width="2.6" height="2.6" fill="#e05030"/><rect x="7.3" y="5" width="2.6" height="2.6" fill="#e8e030"/><rect x="10.6" y="5" width="2.6" height="2.6" fill="#4060d0"/>
<rect x="4" y="8.3" width="2.6" height="2.6" fill="#808080"/><rect x="7.3" y="8.3" width="2.6" height="2.6" fill="#fff"/><rect x="10.6" y="8.3" width="2.6" height="2.6" fill="#c0c0c0"/>
<rect x="4" y="11.6" width="2.6" height="2.6" fill="#60b040"/><rect x="7.3" y="11.6" width="2.6" height="2.6" fill="#5070d8"/><rect x="10.6" y="11.6" width="2.6" height="2.6" fill="#a050c0"/></svg></div>
<div class="raised1" style="left:766px;top:685px;width:142px;height:23px;"></div>
<div style="left:770px;top:690px;width:75px;height:14px;line-height:14px;"><span style="letter-spacing:-0.15px">Смещение,м:</span></div>
<div class="sunk2" style="left:845px;top:687px;width:42px;height:20px;background:#fff;line-height:16px;padding-left:2px;font-weight:bold;font-size:12px;"><span style="letter-spacing:0.59px">0,000</span></div>
<div class="raised" style="left:889px;top:688px;width:18px;height:9px;"><svg style="left:4px;top:1px" width="8" height="5"><path d="M0 4 H7 L3.5 0 Z" fill="#000"/></svg></div>
<div class="raised" style="left:889px;top:697px;width:18px;height:9px;"><svg style="left:4px;top:1px" width="8" height="5"><path d="M0 0 H7 L3.5 4 Z" fill="#000"/></svg></div>
<div class="raised1" style="left:766px;top:710px;width:142px;height:23px;"></div>
<div style="left:771px;top:714px;width:75px;height:14px;line-height:14px;"><span style="letter-spacing:-0.16px">Ширина,м</span></div>
<div class="sunk2" style="left:845px;top:711px;width:42px;height:20px;background:#fff;line-height:16px;padding-left:2px;font-weight:bold;font-size:12px;"><span style="letter-spacing:0.59px">2,000</span></div>
<div class="raised" style="left:889px;top:712px;width:18px;height:9px;"><svg style="left:4px;top:1px" width="8" height="5"><path d="M0 4 H7 L3.5 0 Z" fill="#000"/></svg></div>
<div class="raised" style="left:889px;top:721px;width:18px;height:9px;"><svg style="left:4px;top:1px" width="8" height="5"><path d="M0 0 H7 L3.5 4 Z" fill="#000"/></svg></div>
<div style="left:766px;top:733px;width:142px;height:51px;border:1px solid;border-color:transparent #808080 #808080 #fff;"></div></body></html>
